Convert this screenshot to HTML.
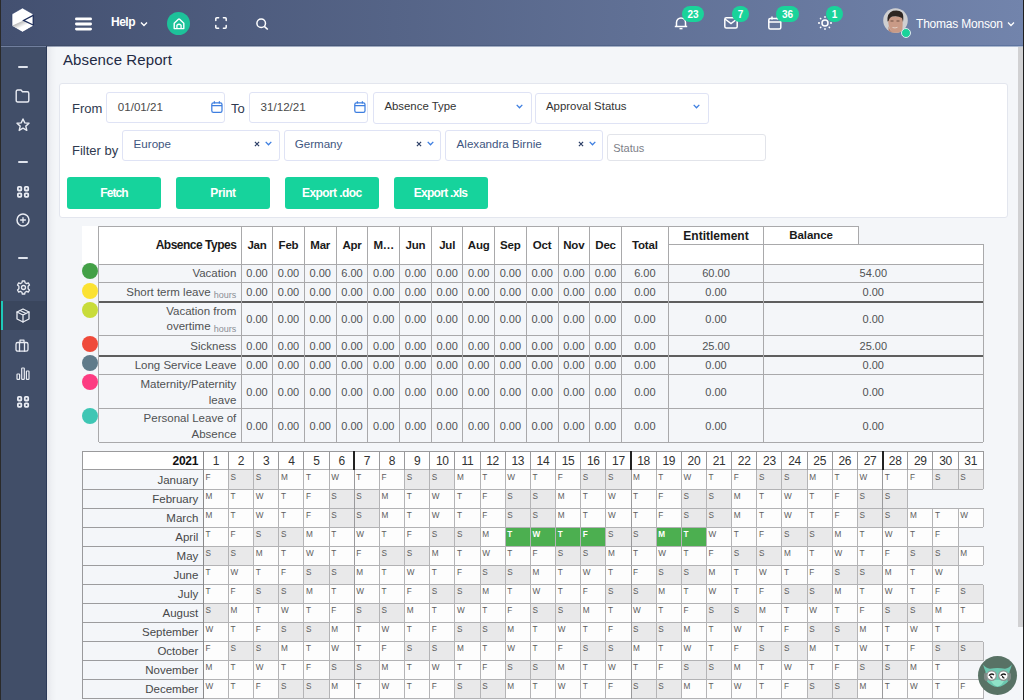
<!DOCTYPE html>
<html><head><meta charset="utf-8">
<style>
*{box-sizing:border-box;margin:0;padding:0}
html,body{width:1024px;height:700px;overflow:hidden}
body{position:relative;background:#f4f6f9;font-family:"Liberation Sans",sans-serif;color:#333}
.a{position:absolute}
#hdr{left:0;top:0;width:1024px;height:46px;background:linear-gradient(90deg,#435070 0%,#7284ac 100%)}
#hdrline{left:0;top:45px;width:1024px;height:1px;background:linear-gradient(90deg,#3d4a66,#5f75a0)}
#hdrtr{left:47px;top:46px;width:977px;height:1px;background:linear-gradient(90deg,#9aa3b8,#aab8d0)}
#side{left:0;top:46px;width:47px;height:654px;background:#414e68}
#shadowL{left:47px;top:46px;width:10px;height:654px;background:linear-gradient(90deg,rgba(0,0,30,0.06),rgba(0,0,30,0.02) 50%,rgba(0,0,30,0))}
#sideTop{left:0;top:46px;width:46px;height:1px;background:#717f9e}
#sideR{left:46px;top:46px;width:1px;height:654px;background:#2c3a58}
#edgeL{left:0;top:0;width:1px;height:700px;background:#2a2a2a}
#edgeR{left:1023px;top:0;width:1px;height:700px;background:#1e1e1e}
svg{position:absolute;overflow:visible}
.badge{position:absolute;height:16px;border-radius:8px;background:#1ad39a;color:#fff;font-size:10px;font-weight:bold;text-align:center;line-height:17px}
.w{color:#fff}
.inp{position:absolute;background:#fff;border:1px solid #dfe3f5;border-radius:3px}
.btn{position:absolute;top:177.2px;width:94px;height:31.6px;background:#16d39c;border-radius:3px;color:#fff;font-weight:bold;font-size:12px;text-align:center;line-height:32.5px;letter-spacing:-0.3px}
.txt{position:absolute;white-space:nowrap}
</style></head><body>
<div id="hdr" class="a"></div>
<div id="hdrline" class="a"></div>
<div id="hdrtr" class="a"></div>
<div id="side" class="a"></div>
<div id="sideTop" class="a"></div>
<div id="sideR" class="a"></div>
<div id="shadowL" class="a"></div>

<!-- logo -->
<svg style="left:12px;top:8px" width="21" height="24" viewBox="0 0 21 24">
  <defs><linearGradient id="lg" gradientUnits="userSpaceOnUse" x1="6" y1="15" x2="8.3" y2="19.8"><stop offset="0" stop-color="#b9b9b9"/><stop offset="1" stop-color="#fff"/></linearGradient></defs>
  <path d="M10.5 0 L21 6 L21 18 L10.5 24 L0 18 L0 6 Z" fill="#fff" stroke="#2a3a66" stroke-width="0.6"/>
  <path d="M0.6 17.6 L11.5 12.4 L20.5 16.8 L20.5 17.7 L10.5 23.5 L0.6 17.8 Z" fill="url(#lg)"/>
  <path d="M21.2 7.4 L11.5 12.4 L21.2 17" fill="none" stroke="#1d2d5a" stroke-width="1.2"/>
  <path d="M21.3 7.5 V17" stroke="#1d2d5a" stroke-width="0.8"/>
</svg>
<!-- hamburger -->
<svg style="left:75px;top:17px" width="17" height="14" viewBox="0 0 17 14">
  <rect x="0" y="0.5" width="17" height="2.8" rx="1.4" fill="#fff"/>
  <rect x="0" y="5.6" width="17" height="2.8" rx="1.4" fill="#fff"/>
  <rect x="0" y="10.7" width="17" height="2.8" rx="1.4" fill="#fff"/>
</svg>
<div class="txt w" style="left:111px;top:15.6px;font-size:12px;line-height:1;font-weight:bold;letter-spacing:-0.5px">Help</div>
<svg style="left:140px;top:21px" width="8" height="6" viewBox="0 0 8 6"><path d="M1 1.5 L4 4.5 L7 1.5" fill="none" stroke="#fff" stroke-width="1.4"/></svg>
<!-- home -->
<div class="a" style="left:167px;top:11.5px;width:23px;height:23px;border-radius:50%;background:#1dc29a"></div>
<svg style="left:172.5px;top:17.5px" width="12" height="12" viewBox="0 0 12 12"><path d="M1.2 5.2 L5.4 1.2 Q6 0.7 6.6 1.2 L10.8 5.2 V10.6 H1.2 Z" fill="none" stroke="#fff" stroke-width="1.4" stroke-linejoin="round"/><path d="M3.9 10.6 V7.3 Q6 5.3 8.1 7.3 V10.6" fill="none" stroke="#fff" stroke-width="1.3"/></svg>
<!-- fullscreen -->
<svg style="left:215px;top:17px" width="12" height="12" viewBox="0 0 12 12"><path d="M0.8 3.6 V1.8 Q0.8 0.8 1.8 0.8 H3.6 M8.4 0.8 H10.2 Q11.2 0.8 11.2 1.8 V3.6 M11.2 8.4 V10.2 Q11.2 11.2 10.2 11.2 H8.4 M3.6 11.2 H1.8 Q0.8 11.2 0.8 10.2 V8.4" fill="none" stroke="#fff" stroke-width="1.5" stroke-linecap="round"/></svg>
<!-- search -->
<svg style="left:256px;top:18px" width="13" height="12" viewBox="0 0 13 12"><circle cx="5.2" cy="5.2" r="4.3" fill="none" stroke="#fff" stroke-width="1.5"/><path d="M8.3 8.3 L11.8 11.5" stroke="#fff" stroke-width="1.6"/></svg>

<!-- bell -->
<svg style="left:674px;top:16px" width="14" height="14" viewBox="0 0 14 14"><path d="M2.5 10.5 V6.5 A4.5 4.5 0 0 1 11.5 6.5 V10.5" fill="none" stroke="#fff" stroke-width="1.5"/><path d="M0.8 10.5 H13.2" stroke="#fff" stroke-width="1.5"/><path d="M5.5 12.6 H8.5" stroke="#fff" stroke-width="1.5"/></svg>
<div class="badge" style="left:682px;top:6px;width:22px">23</div>
<!-- mail -->
<svg style="left:724px;top:17px" width="14" height="12" viewBox="0 0 14 12"><rect x="0.8" y="0.8" width="12.4" height="10.2" rx="1.5" fill="none" stroke="#fff" stroke-width="1.5"/><path d="M1 2 L7 6.5 L13 2" fill="none" stroke="#fff" stroke-width="1.5"/></svg>
<div class="badge" style="left:732px;top:6px;width:17px">7</div>
<!-- calendar -->
<svg style="left:768px;top:16px" width="14" height="14" viewBox="0 0 14 14"><rect x="0.8" y="2.5" width="12" height="10.5" rx="1.5" fill="none" stroke="#fff" stroke-width="1.5"/><path d="M1 6 H12.6 M4 0.5 V3.5 M9.5 0.5 V3.5" stroke="#fff" stroke-width="1.5"/></svg>
<div class="badge" style="left:776px;top:6px;width:23px">36</div>
<!-- sun -->
<svg style="left:818px;top:16px" width="14" height="14" viewBox="0 0 14 14"><circle cx="7" cy="7" r="3" fill="none" stroke="#fff" stroke-width="1.5"/><path d="M7 0 V2 M7 12 V14 M0 7 H2 M12 7 H14 M2 2 L3.3 3.3 M10.7 10.7 L12 12 M2 12 L3.3 10.7 M10.7 3.3 L12 2" stroke="#fff" stroke-width="1.3"/></svg>
<div class="badge" style="left:826px;top:6px;width:17px">1</div>
<!-- avatar -->
<svg style="left:883px;top:8px" width="25" height="25" viewBox="0 0 25 25">
<defs><clipPath id="ac"><circle cx="12.5" cy="12.5" r="12.3"/></clipPath></defs>
<circle cx="12.5" cy="12.5" r="12.3" fill="#cfcfd1"/>
<g clip-path="url(#ac)">
<path d="M5 9 Q5 24 12 25 L19 25 Q20 18 19.5 8 Z" fill="#c99a86"/>
<path d="M5.5 26 L5.5 18 Q7 24 12 25 Z" fill="#b8806b"/>
<path d="M4.5 13.5 Q3.8 5 10 2.8 Q16 1.5 19 4.5 Q21 7 20 14 L19 10 Q15 7.5 9.5 8.5 Q6.5 9 5.5 13 Z" fill="#2e2622"/>
<path d="M7.5 13 H10.5 M13.5 13 H16.5" stroke="#6f4f42" stroke-width="1.2"/>
<path d="M9.5 19.5 Q12 20.5 14.5 19.3" stroke="#e3cfc6" stroke-width="1" fill="none"/>
</g>
</svg>
<div class="a" style="left:901px;top:27.8px;width:10px;height:10px;border-radius:50%;background:#1ad39a;border:1.2px solid #dfe9ee"></div>
<div class="txt w" style="left:916px;top:17.5px;font-size:12px;line-height:1;letter-spacing:-0.2px">Thomas Monson</div>
<svg style="left:1007px;top:21px" width="8" height="6" viewBox="0 0 8 6"><path d="M1 1.5 L4 4.5 L7 1.5" fill="none" stroke="#fff" stroke-width="1.3"/></svg>

<div class="a" style="left:1px;top:301px;width:45px;height:29px;background:#3a465d"></div>
<div class="a" style="left:1px;top:301px;width:2px;height:29px;background:#1ec8b9"></div>
<div class="a" style="left:18px;top:65.5px;width:10px;height:2px;border-radius:1px;background:#dfe3ec"></div>
<div class="a" style="left:18px;top:161px;width:10px;height:2px;border-radius:1px;background:#dfe3ec"></div>
<div class="a" style="left:18px;top:256.6px;width:10px;height:2px;border-radius:1px;background:#dfe3ec"></div>
<svg style="left:15px;top:89px" width="15" height="14" viewBox="0 0 15 14" fill="none" stroke="#e9ecf3" stroke-width="1.4" stroke-linejoin="round" stroke-linecap="round"><path d="M1.2 2.5 Q1.2 1 2.7 1 H6 L7.5 2.8 H12.3 Q13.8 2.8 13.8 4.3 V11.5 Q13.8 13 12.3 13 H2.7 Q1.2 13 1.2 11.5 Z"/></svg>
<svg style="left:16px;top:117.5px" width="14" height="14" viewBox="0 0 14 14" fill="none" stroke="#e9ecf3" stroke-width="1.4" stroke-linejoin="round" stroke-linecap="round"><path d="M7 1 L8.8 4.9 L13 5.3 L9.8 8.1 L10.8 12.4 L7 10.2 L3.2 12.4 L4.2 8.1 L1 5.3 L5.2 4.9 Z"/></svg>
<svg style="left:16.7px;top:185.6px" width="13" height="13" viewBox="0 0 13 13" fill="none" stroke="#e9ecf3" stroke-width="1.8" stroke-linejoin="round" stroke-linecap="round"><rect x="0.9" y="0.9" width="3.4" height="3.6" rx="0.8"/><rect x="7.8" y="0.9" width="3.4" height="3.6" rx="0.8"/><rect x="0.9" y="7.3" width="3.4" height="3.6" rx="0.8"/><rect x="7.8" y="7.3" width="3.4" height="3.6" rx="0.8"/></svg>
<svg style="left:16px;top:213px" width="14" height="14" viewBox="0 0 14 14" fill="none" stroke="#e9ecf3" stroke-width="1.5" stroke-linejoin="round" stroke-linecap="round"><circle cx="7" cy="7" r="6"/><path d="M7 4.6 V9.4 M4.6 7 H9.4" stroke-width="1.3"/></svg>
<svg style="left:15.5px;top:280.3px" width="15" height="15" viewBox="0 0 15 15" fill="none" stroke="#e9ecf3" stroke-width="1.3" stroke-linejoin="round" stroke-linecap="round"><circle cx="7.5" cy="7.5" r="2"/><path d="M6.3 1 H8.7 L9.1 2.8 L10.6 3.6 L12.3 2.9 L13.5 5 L12.1 6.2 V8.8 L13.5 10 L12.3 12.1 L10.6 11.4 L9.1 12.2 L8.7 14 H6.3 L5.9 12.2 L4.4 11.4 L2.7 12.1 L1.5 10 L2.9 8.8 V6.2 L1.5 5 L2.7 2.9 L4.4 3.6 L5.9 2.8 Z"/></svg>
<svg style="left:15.5px;top:308.3px" width="14" height="15" viewBox="0 0 14 15" fill="none" stroke="#e9ecf3" stroke-width="1.3" stroke-linejoin="round" stroke-linecap="round"><path d="M7 1 L13 4 V11 L7 14 L1 11 V4 Z"/><path d="M1 4 L7 7 L13 4 M7 7 V14 M4 2.5 L10 5.5"/></svg>
<svg style="left:15.2px;top:338.5px" width="14" height="13" viewBox="0 0 14 13" fill="none" stroke="#e9ecf3" stroke-width="1.3" stroke-linejoin="round" stroke-linecap="round"><rect x="1" y="3.5" width="12" height="8.7" rx="1.8"/><path d="M5 3.5 V1.2 H9 V3.5 M4.5 3.5 V12.2 M9.5 3.5 V12.2"/></svg>
<svg style="left:16px;top:367px" width="14" height="13" viewBox="0 0 14 13" fill="none" stroke="#e9ecf3" stroke-width="1.2" stroke-linejoin="round" stroke-linecap="round"><rect x="1" y="7" width="2.6" height="5.3" rx="0.6"/><rect x="5.7" y="1" width="2.6" height="11.3" rx="0.6"/><rect x="10.4" y="4" width="2.6" height="8.3" rx="0.6"/></svg>
<svg style="left:16.7px;top:396.4px" width="13" height="13" viewBox="0 0 13 13" fill="none" stroke="#e9ecf3" stroke-width="1.8" stroke-linejoin="round" stroke-linecap="round"><rect x="0.9" y="0.9" width="3.4" height="3.6" rx="0.8"/><rect x="7.8" y="0.9" width="3.4" height="3.6" rx="0.8"/><rect x="0.9" y="7.3" width="3.4" height="3.6" rx="0.8"/><rect x="7.8" y="7.3" width="3.4" height="3.6" rx="0.8"/></svg>
<div class="txt" style="left:63px;top:51px;font-size:15px;color:#1f2a44;letter-spacing:0.1px">Absence Report</div>
<div class="a" style="left:58.5px;top:83px;width:949px;height:135px;background:#fff;border:1px solid #e3e6ee;border-radius:3px"></div>
<div class="txt" style="left:72px;top:101.72px;font-size:13px;line-height:1;color:#2f3a4f;">From</div>
<div class="txt" style="left:231px;top:101.72px;font-size:13px;line-height:1;color:#2f3a4f;">To</div>
<div class="txt" style="left:72px;top:144.22px;font-size:13px;line-height:1;color:#2f3a4f;">Filter by</div>
<div class="inp" style="left:106px;top:92px;width:119px;height:30.5px;"></div>
<div class="txt" style="left:117.8px;top:100.74px;font-size:11.6px;line-height:1;color:#4a4a4a;">01/01/21</div>
<svg style="left:211px;top:100.5px" width="12" height="12" viewBox="0 0 12 12" fill="none" stroke="#3d7ee0" stroke-width="1.25"><rect x="0.8" y="1.9" width="10.2" height="9.4" rx="1.6"/><path d="M0.8 4.6 H11 M3.4 0.3 V2.6 M8.4 0.3 V2.6"/></svg>
<div class="inp" style="left:249px;top:92px;width:118.5px;height:30.5px;"></div>
<div class="txt" style="left:260.6px;top:100.74px;font-size:11.6px;line-height:1;color:#4a4a4a;">31/12/21</div>
<svg style="left:354.2px;top:100.5px" width="12" height="12" viewBox="0 0 12 12" fill="none" stroke="#3d7ee0" stroke-width="1.25"><rect x="0.8" y="1.9" width="10.2" height="9.4" rx="1.6"/><path d="M0.8 4.6 H11 M3.4 0.3 V2.6 M8.4 0.3 V2.6"/></svg>
<div class="inp" style="left:373px;top:92px;width:158.5px;height:31.5px;"></div>
<div class="txt" style="left:384.4px;top:100.78px;font-size:11.4px;line-height:1;color:#333;">Absence Type</div>
<svg style="left:516px;top:104px" width="7" height="5" viewBox="0 0 7 5" fill="none" stroke="#3d7ee0" stroke-width="1.3"><path d="M0.7 0.9 L3.5 3.8 L6.3 0.9"/></svg>
<div class="inp" style="left:534.5px;top:92.5px;width:174.20000000000005px;height:31.299999999999997px;"></div>
<div class="txt" style="left:546px;top:100.78px;font-size:11.4px;line-height:1;color:#333;">Approval Status</div>
<svg style="left:693px;top:104px" width="7" height="5" viewBox="0 0 7 5" fill="none" stroke="#3d7ee0" stroke-width="1.3"><path d="M0.7 0.9 L3.5 3.8 L6.3 0.9"/></svg>
<div class="inp" style="left:122.4px;top:129.6px;width:157.20000000000002px;height:31.400000000000006px;"></div>
<div class="txt" style="left:133.6px;top:137.94px;font-size:11.6px;line-height:1;color:#3e5680;">Europe</div>
<svg style="left:254.3px;top:140.8px" width="6" height="6" viewBox="0 0 6 6" fill="none" stroke="#2c3e66" stroke-width="1.2"><path d="M0.9 0.9 L5.1 5.1 M5.1 0.9 L0.9 5.1"/></svg>
<svg style="left:265.3px;top:141.2px" width="7" height="5" viewBox="0 0 7 5" fill="none" stroke="#3d7ee0" stroke-width="1.3"><path d="M0.7 0.9 L3.5 3.8 L6.3 0.9"/></svg>
<div class="inp" style="left:283.5px;top:129.6px;width:157.5px;height:31.400000000000006px;"></div>
<div class="txt" style="left:294.7px;top:137.94px;font-size:11.6px;line-height:1;color:#3e5680;">Germany</div>
<svg style="left:415.7px;top:140.8px" width="6" height="6" viewBox="0 0 6 6" fill="none" stroke="#2c3e66" stroke-width="1.2"><path d="M0.9 0.9 L5.1 5.1 M5.1 0.9 L0.9 5.1"/></svg>
<svg style="left:426.7px;top:141.2px" width="7" height="5" viewBox="0 0 7 5" fill="none" stroke="#3d7ee0" stroke-width="1.3"><path d="M0.7 0.9 L3.5 3.8 L6.3 0.9"/></svg>
<div class="inp" style="left:445.4px;top:129.6px;width:157.80000000000007px;height:31.400000000000006px;"></div>
<div class="txt" style="left:456.59999999999997px;top:137.94px;font-size:11.6px;line-height:1;color:#3e5680;">Alexandra Birnie</div>
<svg style="left:577.9000000000001px;top:140.8px" width="6" height="6" viewBox="0 0 6 6" fill="none" stroke="#2c3e66" stroke-width="1.2"><path d="M0.9 0.9 L5.1 5.1 M5.1 0.9 L0.9 5.1"/></svg>
<svg style="left:588.9000000000001px;top:141.2px" width="7" height="5" viewBox="0 0 7 5" fill="none" stroke="#3d7ee0" stroke-width="1.3"><path d="M0.7 0.9 L3.5 3.8 L6.3 0.9"/></svg>
<div class="inp" style="left:607.4px;top:133.6px;width:158.20000000000005px;height:27.599999999999994px;border-color:#e2e4ea"></div>
<div class="txt" style="left:613.2px;top:143.24px;font-size:11px;line-height:1;color:#7d8088;">Status</div>
<div class="btn" style="left:67px;letter-spacing:-0.9px">Fetch</div>
<div class="btn" style="left:176px;letter-spacing:-0.4px">Print</div>
<div class="btn" style="left:284.8px;letter-spacing:-0.6px">Export .doc</div>
<div class="btn" style="left:393.5px;letter-spacing:-0.7px">Export .xls</div>
<div class="a" style="left:82px;top:225.5px;width:16.5px;height:38.5px;background:#ffffff"></div>
<div class="a" style="left:98.5px;top:225.5px;width:569.9px;height:38.5px;background:#ffffff"></div>
<div class="a" style="left:668.4px;top:225.5px;width:190.10000000000002px;height:19.5px;background:#ffffff"></div>
<div class="a" style="left:668.4px;top:244.2px;width:314.6px;height:19.80000000000001px;background:#ffffff"></div>
<div class="a" style="left:98.5px;top:225.5px;width:760.0px;height:1px;background:#a9a9ab"></div>
<div class="a" style="left:858.5px;top:244.2px;width:124.5px;height:1px;background:#a9a9ab"></div>
<div class="a" style="left:668.4px;top:244.2px;width:314.6px;height:1px;background:#a9a9ab"></div>
<div class="a" style="left:98.5px;top:263.5px;width:884.5px;height:1px;background:#a9a9ab"></div>
<div class="a" style="left:98.5px;top:281.8px;width:884.5px;height:1px;background:#a9a9ab"></div>
<div class="a" style="left:98.5px;top:300.7px;width:884.5px;height:2px;background:#5e5e5e"></div>
<div class="a" style="left:98.5px;top:335.1px;width:884.5px;height:1px;background:#a9a9ab"></div>
<div class="a" style="left:98.5px;top:354.7px;width:884.5px;height:2px;background:#5e5e5e"></div>
<div class="a" style="left:98.5px;top:374.4px;width:884.5px;height:1px;background:#a9a9ab"></div>
<div class="a" style="left:98.5px;top:408.3px;width:884.5px;height:1px;background:#a9a9ab"></div>
<div class="a" style="left:98.5px;top:441.8px;width:884.5px;height:1px;background:#a9a9ab"></div>
<div class="a" style="left:98.0px;top:225.5px;width:1px;height:216.8px;background:#a9a9ab"></div>
<div class="a" style="left:240.9px;top:225.5px;width:1px;height:216.8px;background:#a9a9ab"></div>
<div class="a" style="left:272.2px;top:225.5px;width:1px;height:216.8px;background:#a9a9ab"></div>
<div class="a" style="left:303.9px;top:225.5px;width:1px;height:216.8px;background:#a9a9ab"></div>
<div class="a" style="left:335.6px;top:225.5px;width:1px;height:216.8px;background:#a9a9ab"></div>
<div class="a" style="left:367.4px;top:225.5px;width:1px;height:216.8px;background:#a9a9ab"></div>
<div class="a" style="left:399.1px;top:225.5px;width:1px;height:216.8px;background:#a9a9ab"></div>
<div class="a" style="left:430.9px;top:225.5px;width:1px;height:216.8px;background:#a9a9ab"></div>
<div class="a" style="left:462.4px;top:225.5px;width:1px;height:216.8px;background:#a9a9ab"></div>
<div class="a" style="left:494.0px;top:225.5px;width:1px;height:216.8px;background:#a9a9ab"></div>
<div class="a" style="left:525.7px;top:225.5px;width:1px;height:216.8px;background:#a9a9ab"></div>
<div class="a" style="left:557.5px;top:225.5px;width:1px;height:216.8px;background:#a9a9ab"></div>
<div class="a" style="left:589.2px;top:225.5px;width:1px;height:216.8px;background:#a9a9ab"></div>
<div class="a" style="left:620.9px;top:225.5px;width:1px;height:216.8px;background:#a9a9ab"></div>
<div class="a" style="left:667.9px;top:225.5px;width:1px;height:216.8px;background:#a9a9ab"></div>
<div class="a" style="left:763.1px;top:225.5px;width:1px;height:216.8px;background:#a9a9ab"></div>
<div class="a" style="left:982.5px;top:244.2px;width:1px;height:198.10000000000002px;background:#a9a9ab"></div>
<div class="a" style="left:858.0px;top:225.5px;width:1px;height:18.69999999999999px;background:#a9a9ab"></div>
<div class="txt" style="left:-63.69999999999999px;top:239.28px;width:300px;text-align:right;font-size:12px;line-height:1;color:#1a1a1a;font-weight:bold;letter-spacing:-0.5px;">Absence Types</div>
<div class="txt" style="left:241.4px;top:239.56px;width:31.299999999999983px;text-align:center;font-size:11.5px;line-height:1;color:#1a1a1a;font-weight:bold;letter-spacing:-0.2px">Jan</div>
<div class="txt" style="left:272.7px;top:239.56px;width:31.69999999999999px;text-align:center;font-size:11.5px;line-height:1;color:#1a1a1a;font-weight:bold;letter-spacing:-0.2px">Feb</div>
<div class="txt" style="left:304.4px;top:239.56px;width:31.700000000000045px;text-align:center;font-size:11.5px;line-height:1;color:#1a1a1a;font-weight:bold;letter-spacing:-0.2px">Mar</div>
<div class="txt" style="left:336.1px;top:239.56px;width:31.799999999999955px;text-align:center;font-size:11.5px;line-height:1;color:#1a1a1a;font-weight:bold;letter-spacing:-0.2px">Apr</div>
<div class="txt" style="left:367.9px;top:239.56px;width:31.700000000000045px;text-align:center;font-size:11.5px;line-height:1;color:#1a1a1a;font-weight:bold;letter-spacing:-0.2px">M…</div>
<div class="txt" style="left:399.6px;top:239.56px;width:31.799999999999955px;text-align:center;font-size:11.5px;line-height:1;color:#1a1a1a;font-weight:bold;letter-spacing:-0.2px">Jun</div>
<div class="txt" style="left:431.4px;top:239.56px;width:31.5px;text-align:center;font-size:11.5px;line-height:1;color:#1a1a1a;font-weight:bold;letter-spacing:-0.2px">Jul</div>
<div class="txt" style="left:462.9px;top:239.56px;width:31.600000000000023px;text-align:center;font-size:11.5px;line-height:1;color:#1a1a1a;font-weight:bold;letter-spacing:-0.2px">Aug</div>
<div class="txt" style="left:494.5px;top:239.56px;width:31.700000000000045px;text-align:center;font-size:11.5px;line-height:1;color:#1a1a1a;font-weight:bold;letter-spacing:-0.2px">Sep</div>
<div class="txt" style="left:526.2px;top:239.56px;width:31.799999999999955px;text-align:center;font-size:11.5px;line-height:1;color:#1a1a1a;font-weight:bold;letter-spacing:-0.2px">Oct</div>
<div class="txt" style="left:558px;top:239.56px;width:31.700000000000045px;text-align:center;font-size:11.5px;line-height:1;color:#1a1a1a;font-weight:bold;letter-spacing:-0.2px">Nov</div>
<div class="txt" style="left:589.7px;top:239.56px;width:31.699999999999932px;text-align:center;font-size:11.5px;line-height:1;color:#1a1a1a;font-weight:bold;letter-spacing:-0.2px">Dec</div>
<div class="txt" style="left:621.4px;top:239.56px;width:47.0px;text-align:center;font-size:11.5px;line-height:1;color:#1a1a1a;font-weight:bold;letter-spacing:-0.2px">Total</div>
<div class="txt" style="left:668.4px;top:229.88px;width:95.20000000000005px;text-align:center;font-size:12px;line-height:1;color:#1a1a1a;font-weight:bold;letter-spacing:0px">Entitlement</div>
<div class="txt" style="left:763.6px;top:229.96px;width:94.89999999999998px;text-align:center;font-size:11.5px;line-height:1;color:#1a1a1a;font-weight:bold;letter-spacing:-0.1px">Balance</div>
<div class="a" style="left:82.3px;top:263.4px;width:16px;height:16px;border-radius:50%;background:#43a047"></div>
<div class="txt" style="left:-63.69999999999999px;top:268.21px;width:300px;text-align:right;font-size:11.5px;line-height:1;color:#505254;letter-spacing:0px;">Vacation</div>
<div class="txt" style="left:241.4px;top:268.29px;width:31.299999999999983px;text-align:center;font-size:11px;line-height:1;color:#505254;letter-spacing:0px">0.00</div>
<div class="txt" style="left:272.7px;top:268.29px;width:31.69999999999999px;text-align:center;font-size:11px;line-height:1;color:#505254;letter-spacing:0px">0.00</div>
<div class="txt" style="left:304.4px;top:268.29px;width:31.700000000000045px;text-align:center;font-size:11px;line-height:1;color:#505254;letter-spacing:0px">0.00</div>
<div class="txt" style="left:336.1px;top:268.29px;width:31.799999999999955px;text-align:center;font-size:11px;line-height:1;color:#505254;letter-spacing:0px">6.00</div>
<div class="txt" style="left:367.9px;top:268.29px;width:31.700000000000045px;text-align:center;font-size:11px;line-height:1;color:#505254;letter-spacing:0px">0.00</div>
<div class="txt" style="left:399.6px;top:268.29px;width:31.799999999999955px;text-align:center;font-size:11px;line-height:1;color:#505254;letter-spacing:0px">0.00</div>
<div class="txt" style="left:431.4px;top:268.29px;width:31.5px;text-align:center;font-size:11px;line-height:1;color:#505254;letter-spacing:0px">0.00</div>
<div class="txt" style="left:462.9px;top:268.29px;width:31.600000000000023px;text-align:center;font-size:11px;line-height:1;color:#505254;letter-spacing:0px">0.00</div>
<div class="txt" style="left:494.5px;top:268.29px;width:31.700000000000045px;text-align:center;font-size:11px;line-height:1;color:#505254;letter-spacing:0px">0.00</div>
<div class="txt" style="left:526.2px;top:268.29px;width:31.799999999999955px;text-align:center;font-size:11px;line-height:1;color:#505254;letter-spacing:0px">0.00</div>
<div class="txt" style="left:558px;top:268.29px;width:31.700000000000045px;text-align:center;font-size:11px;line-height:1;color:#505254;letter-spacing:0px">0.00</div>
<div class="txt" style="left:589.7px;top:268.29px;width:31.699999999999932px;text-align:center;font-size:11px;line-height:1;color:#505254;letter-spacing:0px">0.00</div>
<div class="txt" style="left:621.4px;top:268.29px;width:47.0px;text-align:center;font-size:11px;line-height:1;color:#505254;letter-spacing:0px">6.00</div>
<div class="txt" style="left:668.4px;top:268.29px;width:95.20000000000005px;text-align:center;font-size:11px;line-height:1;color:#505254;letter-spacing:0px">60.00</div>
<div class="txt" style="left:763.6px;top:268.29px;width:219.39999999999998px;text-align:center;font-size:11px;line-height:1;color:#505254;letter-spacing:0px">54.00</div>
<div class="a" style="left:82.3px;top:282.7px;width:16px;height:16px;border-radius:50%;background:#fbe232"></div>
<div class="txt" style="left:-63.69999999999999px;top:286.86px;width:300px;text-align:right;font-size:11.5px;line-height:1;color:#505254;letter-spacing:0px;">Short term leave <span style="font-size:9px;color:#8a8f96;vertical-align:-2px">hours</span></div>
<div class="txt" style="left:241.4px;top:286.94px;width:31.299999999999983px;text-align:center;font-size:11px;line-height:1;color:#505254;letter-spacing:0px">0.00</div>
<div class="txt" style="left:272.7px;top:286.94px;width:31.69999999999999px;text-align:center;font-size:11px;line-height:1;color:#505254;letter-spacing:0px">0.00</div>
<div class="txt" style="left:304.4px;top:286.94px;width:31.700000000000045px;text-align:center;font-size:11px;line-height:1;color:#505254;letter-spacing:0px">0.00</div>
<div class="txt" style="left:336.1px;top:286.94px;width:31.799999999999955px;text-align:center;font-size:11px;line-height:1;color:#505254;letter-spacing:0px">0.00</div>
<div class="txt" style="left:367.9px;top:286.94px;width:31.700000000000045px;text-align:center;font-size:11px;line-height:1;color:#505254;letter-spacing:0px">0.00</div>
<div class="txt" style="left:399.6px;top:286.94px;width:31.799999999999955px;text-align:center;font-size:11px;line-height:1;color:#505254;letter-spacing:0px">0.00</div>
<div class="txt" style="left:431.4px;top:286.94px;width:31.5px;text-align:center;font-size:11px;line-height:1;color:#505254;letter-spacing:0px">0.00</div>
<div class="txt" style="left:462.9px;top:286.94px;width:31.600000000000023px;text-align:center;font-size:11px;line-height:1;color:#505254;letter-spacing:0px">0.00</div>
<div class="txt" style="left:494.5px;top:286.94px;width:31.700000000000045px;text-align:center;font-size:11px;line-height:1;color:#505254;letter-spacing:0px">0.00</div>
<div class="txt" style="left:526.2px;top:286.94px;width:31.799999999999955px;text-align:center;font-size:11px;line-height:1;color:#505254;letter-spacing:0px">0.00</div>
<div class="txt" style="left:558px;top:286.94px;width:31.700000000000045px;text-align:center;font-size:11px;line-height:1;color:#505254;letter-spacing:0px">0.00</div>
<div class="txt" style="left:589.7px;top:286.94px;width:31.699999999999932px;text-align:center;font-size:11px;line-height:1;color:#505254;letter-spacing:0px">0.00</div>
<div class="txt" style="left:621.4px;top:286.94px;width:47.0px;text-align:center;font-size:11px;line-height:1;color:#505254;letter-spacing:0px">0.00</div>
<div class="txt" style="left:668.4px;top:286.94px;width:95.20000000000005px;text-align:center;font-size:11px;line-height:1;color:#505254;letter-spacing:0px">0.00</div>
<div class="txt" style="left:763.6px;top:286.94px;width:219.39999999999998px;text-align:center;font-size:11px;line-height:1;color:#505254;letter-spacing:0px">0.00</div>
<div class="a" style="left:82.3px;top:301.5px;width:16px;height:16px;border-radius:50%;background:#c8dc3a"></div>
<div class="txt" style="left:-63.69999999999999px;top:305.91px;width:300px;text-align:right;font-size:11.5px;line-height:1;color:#505254;letter-spacing:0px;">Vacation from</div>
<div class="txt" style="left:-63.69999999999999px;top:321.41px;width:300px;text-align:right;font-size:11.5px;line-height:1;color:#505254;letter-spacing:0px;">overtime <span style="font-size:9px;color:#8a8f96;vertical-align:-2px">hours</span></div>
<div class="txt" style="left:241.4px;top:313.59px;width:31.299999999999983px;text-align:center;font-size:11px;line-height:1;color:#505254;letter-spacing:0px">0.00</div>
<div class="txt" style="left:272.7px;top:313.59px;width:31.69999999999999px;text-align:center;font-size:11px;line-height:1;color:#505254;letter-spacing:0px">0.00</div>
<div class="txt" style="left:304.4px;top:313.59px;width:31.700000000000045px;text-align:center;font-size:11px;line-height:1;color:#505254;letter-spacing:0px">0.00</div>
<div class="txt" style="left:336.1px;top:313.59px;width:31.799999999999955px;text-align:center;font-size:11px;line-height:1;color:#505254;letter-spacing:0px">0.00</div>
<div class="txt" style="left:367.9px;top:313.59px;width:31.700000000000045px;text-align:center;font-size:11px;line-height:1;color:#505254;letter-spacing:0px">0.00</div>
<div class="txt" style="left:399.6px;top:313.59px;width:31.799999999999955px;text-align:center;font-size:11px;line-height:1;color:#505254;letter-spacing:0px">0.00</div>
<div class="txt" style="left:431.4px;top:313.59px;width:31.5px;text-align:center;font-size:11px;line-height:1;color:#505254;letter-spacing:0px">0.00</div>
<div class="txt" style="left:462.9px;top:313.59px;width:31.600000000000023px;text-align:center;font-size:11px;line-height:1;color:#505254;letter-spacing:0px">0.00</div>
<div class="txt" style="left:494.5px;top:313.59px;width:31.700000000000045px;text-align:center;font-size:11px;line-height:1;color:#505254;letter-spacing:0px">0.00</div>
<div class="txt" style="left:526.2px;top:313.59px;width:31.799999999999955px;text-align:center;font-size:11px;line-height:1;color:#505254;letter-spacing:0px">0.00</div>
<div class="txt" style="left:558px;top:313.59px;width:31.700000000000045px;text-align:center;font-size:11px;line-height:1;color:#505254;letter-spacing:0px">0.00</div>
<div class="txt" style="left:589.7px;top:313.59px;width:31.699999999999932px;text-align:center;font-size:11px;line-height:1;color:#505254;letter-spacing:0px">0.00</div>
<div class="txt" style="left:621.4px;top:313.59px;width:47.0px;text-align:center;font-size:11px;line-height:1;color:#505254;letter-spacing:0px">0.00</div>
<div class="txt" style="left:668.4px;top:313.59px;width:95.20000000000005px;text-align:center;font-size:11px;line-height:1;color:#505254;letter-spacing:0px">0.00</div>
<div class="txt" style="left:763.6px;top:313.59px;width:219.39999999999998px;text-align:center;font-size:11px;line-height:1;color:#505254;letter-spacing:0px">0.00</div>
<div class="a" style="left:82.3px;top:335.5px;width:16px;height:16px;border-radius:50%;background:#ef4a3a"></div>
<div class="txt" style="left:-63.69999999999999px;top:340.51px;width:300px;text-align:right;font-size:11.5px;line-height:1;color:#505254;letter-spacing:0px;">Sickness</div>
<div class="txt" style="left:241.4px;top:340.59px;width:31.299999999999983px;text-align:center;font-size:11px;line-height:1;color:#505254;letter-spacing:0px">0.00</div>
<div class="txt" style="left:272.7px;top:340.59px;width:31.69999999999999px;text-align:center;font-size:11px;line-height:1;color:#505254;letter-spacing:0px">0.00</div>
<div class="txt" style="left:304.4px;top:340.59px;width:31.700000000000045px;text-align:center;font-size:11px;line-height:1;color:#505254;letter-spacing:0px">0.00</div>
<div class="txt" style="left:336.1px;top:340.59px;width:31.799999999999955px;text-align:center;font-size:11px;line-height:1;color:#505254;letter-spacing:0px">0.00</div>
<div class="txt" style="left:367.9px;top:340.59px;width:31.700000000000045px;text-align:center;font-size:11px;line-height:1;color:#505254;letter-spacing:0px">0.00</div>
<div class="txt" style="left:399.6px;top:340.59px;width:31.799999999999955px;text-align:center;font-size:11px;line-height:1;color:#505254;letter-spacing:0px">0.00</div>
<div class="txt" style="left:431.4px;top:340.59px;width:31.5px;text-align:center;font-size:11px;line-height:1;color:#505254;letter-spacing:0px">0.00</div>
<div class="txt" style="left:462.9px;top:340.59px;width:31.600000000000023px;text-align:center;font-size:11px;line-height:1;color:#505254;letter-spacing:0px">0.00</div>
<div class="txt" style="left:494.5px;top:340.59px;width:31.700000000000045px;text-align:center;font-size:11px;line-height:1;color:#505254;letter-spacing:0px">0.00</div>
<div class="txt" style="left:526.2px;top:340.59px;width:31.799999999999955px;text-align:center;font-size:11px;line-height:1;color:#505254;letter-spacing:0px">0.00</div>
<div class="txt" style="left:558px;top:340.59px;width:31.700000000000045px;text-align:center;font-size:11px;line-height:1;color:#505254;letter-spacing:0px">0.00</div>
<div class="txt" style="left:589.7px;top:340.59px;width:31.699999999999932px;text-align:center;font-size:11px;line-height:1;color:#505254;letter-spacing:0px">0.00</div>
<div class="txt" style="left:621.4px;top:340.59px;width:47.0px;text-align:center;font-size:11px;line-height:1;color:#505254;letter-spacing:0px">0.00</div>
<div class="txt" style="left:668.4px;top:340.59px;width:95.20000000000005px;text-align:center;font-size:11px;line-height:1;color:#505254;letter-spacing:0px">25.00</div>
<div class="txt" style="left:763.6px;top:340.59px;width:219.39999999999998px;text-align:center;font-size:11px;line-height:1;color:#505254;letter-spacing:0px">25.00</div>
<div class="a" style="left:82.3px;top:354.8px;width:16px;height:16px;border-radius:50%;background:#607b8a"></div>
<div class="txt" style="left:-63.69999999999999px;top:360.16px;width:300px;text-align:right;font-size:11.5px;line-height:1;color:#505254;letter-spacing:0px;">Long Service Leave</div>
<div class="txt" style="left:241.4px;top:360.24px;width:31.299999999999983px;text-align:center;font-size:11px;line-height:1;color:#505254;letter-spacing:0px">0.00</div>
<div class="txt" style="left:272.7px;top:360.24px;width:31.69999999999999px;text-align:center;font-size:11px;line-height:1;color:#505254;letter-spacing:0px">0.00</div>
<div class="txt" style="left:304.4px;top:360.24px;width:31.700000000000045px;text-align:center;font-size:11px;line-height:1;color:#505254;letter-spacing:0px">0.00</div>
<div class="txt" style="left:336.1px;top:360.24px;width:31.799999999999955px;text-align:center;font-size:11px;line-height:1;color:#505254;letter-spacing:0px">0.00</div>
<div class="txt" style="left:367.9px;top:360.24px;width:31.700000000000045px;text-align:center;font-size:11px;line-height:1;color:#505254;letter-spacing:0px">0.00</div>
<div class="txt" style="left:399.6px;top:360.24px;width:31.799999999999955px;text-align:center;font-size:11px;line-height:1;color:#505254;letter-spacing:0px">0.00</div>
<div class="txt" style="left:431.4px;top:360.24px;width:31.5px;text-align:center;font-size:11px;line-height:1;color:#505254;letter-spacing:0px">0.00</div>
<div class="txt" style="left:462.9px;top:360.24px;width:31.600000000000023px;text-align:center;font-size:11px;line-height:1;color:#505254;letter-spacing:0px">0.00</div>
<div class="txt" style="left:494.5px;top:360.24px;width:31.700000000000045px;text-align:center;font-size:11px;line-height:1;color:#505254;letter-spacing:0px">0.00</div>
<div class="txt" style="left:526.2px;top:360.24px;width:31.799999999999955px;text-align:center;font-size:11px;line-height:1;color:#505254;letter-spacing:0px">0.00</div>
<div class="txt" style="left:558px;top:360.24px;width:31.700000000000045px;text-align:center;font-size:11px;line-height:1;color:#505254;letter-spacing:0px">0.00</div>
<div class="txt" style="left:589.7px;top:360.24px;width:31.699999999999932px;text-align:center;font-size:11px;line-height:1;color:#505254;letter-spacing:0px">0.00</div>
<div class="txt" style="left:621.4px;top:360.24px;width:47.0px;text-align:center;font-size:11px;line-height:1;color:#505254;letter-spacing:0px">0.00</div>
<div class="txt" style="left:668.4px;top:360.24px;width:95.20000000000005px;text-align:center;font-size:11px;line-height:1;color:#505254;letter-spacing:0px">0.00</div>
<div class="txt" style="left:763.6px;top:360.24px;width:219.39999999999998px;text-align:center;font-size:11px;line-height:1;color:#505254;letter-spacing:0px">0.00</div>
<div class="a" style="left:82.3px;top:373.5px;width:16px;height:16px;border-radius:50%;background:#fd3c82"></div>
<div class="txt" style="left:-63.69999999999999px;top:379.31px;width:300px;text-align:right;font-size:11.5px;line-height:1;color:#505254;letter-spacing:0px;">Maternity/Paternity</div>
<div class="txt" style="left:-63.69999999999999px;top:394.81px;width:300px;text-align:right;font-size:11.5px;line-height:1;color:#505254;letter-spacing:0px;">leave</div>
<div class="txt" style="left:241.4px;top:386.99px;width:31.299999999999983px;text-align:center;font-size:11px;line-height:1;color:#505254;letter-spacing:0px">0.00</div>
<div class="txt" style="left:272.7px;top:386.99px;width:31.69999999999999px;text-align:center;font-size:11px;line-height:1;color:#505254;letter-spacing:0px">0.00</div>
<div class="txt" style="left:304.4px;top:386.99px;width:31.700000000000045px;text-align:center;font-size:11px;line-height:1;color:#505254;letter-spacing:0px">0.00</div>
<div class="txt" style="left:336.1px;top:386.99px;width:31.799999999999955px;text-align:center;font-size:11px;line-height:1;color:#505254;letter-spacing:0px">0.00</div>
<div class="txt" style="left:367.9px;top:386.99px;width:31.700000000000045px;text-align:center;font-size:11px;line-height:1;color:#505254;letter-spacing:0px">0.00</div>
<div class="txt" style="left:399.6px;top:386.99px;width:31.799999999999955px;text-align:center;font-size:11px;line-height:1;color:#505254;letter-spacing:0px">0.00</div>
<div class="txt" style="left:431.4px;top:386.99px;width:31.5px;text-align:center;font-size:11px;line-height:1;color:#505254;letter-spacing:0px">0.00</div>
<div class="txt" style="left:462.9px;top:386.99px;width:31.600000000000023px;text-align:center;font-size:11px;line-height:1;color:#505254;letter-spacing:0px">0.00</div>
<div class="txt" style="left:494.5px;top:386.99px;width:31.700000000000045px;text-align:center;font-size:11px;line-height:1;color:#505254;letter-spacing:0px">0.00</div>
<div class="txt" style="left:526.2px;top:386.99px;width:31.799999999999955px;text-align:center;font-size:11px;line-height:1;color:#505254;letter-spacing:0px">0.00</div>
<div class="txt" style="left:558px;top:386.99px;width:31.700000000000045px;text-align:center;font-size:11px;line-height:1;color:#505254;letter-spacing:0px">0.00</div>
<div class="txt" style="left:589.7px;top:386.99px;width:31.699999999999932px;text-align:center;font-size:11px;line-height:1;color:#505254;letter-spacing:0px">0.00</div>
<div class="txt" style="left:621.4px;top:386.99px;width:47.0px;text-align:center;font-size:11px;line-height:1;color:#505254;letter-spacing:0px">0.00</div>
<div class="txt" style="left:668.4px;top:386.99px;width:95.20000000000005px;text-align:center;font-size:11px;line-height:1;color:#505254;letter-spacing:0px">0.00</div>
<div class="txt" style="left:763.6px;top:386.99px;width:219.39999999999998px;text-align:center;font-size:11px;line-height:1;color:#505254;letter-spacing:0px">0.00</div>
<div class="a" style="left:82.3px;top:408.2px;width:16px;height:16px;border-radius:50%;background:#3ec6b4"></div>
<div class="txt" style="left:-63.69999999999999px;top:413.01px;width:300px;text-align:right;font-size:11.5px;line-height:1;color:#505254;letter-spacing:0px;">Personal Leave of</div>
<div class="txt" style="left:-63.69999999999999px;top:428.51px;width:300px;text-align:right;font-size:11.5px;line-height:1;color:#505254;letter-spacing:0px;">Absence</div>
<div class="txt" style="left:241.4px;top:420.69px;width:31.299999999999983px;text-align:center;font-size:11px;line-height:1;color:#505254;letter-spacing:0px">0.00</div>
<div class="txt" style="left:272.7px;top:420.69px;width:31.69999999999999px;text-align:center;font-size:11px;line-height:1;color:#505254;letter-spacing:0px">0.00</div>
<div class="txt" style="left:304.4px;top:420.69px;width:31.700000000000045px;text-align:center;font-size:11px;line-height:1;color:#505254;letter-spacing:0px">0.00</div>
<div class="txt" style="left:336.1px;top:420.69px;width:31.799999999999955px;text-align:center;font-size:11px;line-height:1;color:#505254;letter-spacing:0px">0.00</div>
<div class="txt" style="left:367.9px;top:420.69px;width:31.700000000000045px;text-align:center;font-size:11px;line-height:1;color:#505254;letter-spacing:0px">0.00</div>
<div class="txt" style="left:399.6px;top:420.69px;width:31.799999999999955px;text-align:center;font-size:11px;line-height:1;color:#505254;letter-spacing:0px">0.00</div>
<div class="txt" style="left:431.4px;top:420.69px;width:31.5px;text-align:center;font-size:11px;line-height:1;color:#505254;letter-spacing:0px">0.00</div>
<div class="txt" style="left:462.9px;top:420.69px;width:31.600000000000023px;text-align:center;font-size:11px;line-height:1;color:#505254;letter-spacing:0px">0.00</div>
<div class="txt" style="left:494.5px;top:420.69px;width:31.700000000000045px;text-align:center;font-size:11px;line-height:1;color:#505254;letter-spacing:0px">0.00</div>
<div class="txt" style="left:526.2px;top:420.69px;width:31.799999999999955px;text-align:center;font-size:11px;line-height:1;color:#505254;letter-spacing:0px">0.00</div>
<div class="txt" style="left:558px;top:420.69px;width:31.700000000000045px;text-align:center;font-size:11px;line-height:1;color:#505254;letter-spacing:0px">0.00</div>
<div class="txt" style="left:589.7px;top:420.69px;width:31.699999999999932px;text-align:center;font-size:11px;line-height:1;color:#505254;letter-spacing:0px">0.00</div>
<div class="txt" style="left:621.4px;top:420.69px;width:47.0px;text-align:center;font-size:11px;line-height:1;color:#505254;letter-spacing:0px">0.00</div>
<div class="txt" style="left:668.4px;top:420.69px;width:95.20000000000005px;text-align:center;font-size:11px;line-height:1;color:#505254;letter-spacing:0px">0.00</div>
<div class="txt" style="left:763.6px;top:420.69px;width:219.39999999999998px;text-align:center;font-size:11px;line-height:1;color:#505254;letter-spacing:0px">0.00</div>
<div class="a" style="left:82.4px;top:451.2px;width:900.86px;height:19.19999999999999px;background:#ffffff"></div>
<div class="a" style="left:82.4px;top:450.7px;width:900.86px;height:1px;background:#9a9a9c"></div>
<div class="txt" style="left:-101.69999999999999px;top:454.88px;width:300px;text-align:right;font-size:12px;line-height:1;color:#111;font-weight:bold;letter-spacing:-0.2px;">2021</div>
<div class="txt" style="left:203.3px;top:454.68px;width:25.159999999999997px;text-align:center;font-size:12px;line-height:1;color:#333;letter-spacing:-0.3px">1</div>
<div class="txt" style="left:228.46px;top:454.68px;width:25.159999999999997px;text-align:center;font-size:12px;line-height:1;color:#333;letter-spacing:-0.3px">2</div>
<div class="txt" style="left:253.62px;top:454.68px;width:25.160000000000025px;text-align:center;font-size:12px;line-height:1;color:#333;letter-spacing:-0.3px">3</div>
<div class="txt" style="left:278.78000000000003px;top:454.68px;width:25.160000000000025px;text-align:center;font-size:12px;line-height:1;color:#333;letter-spacing:-0.3px">4</div>
<div class="txt" style="left:303.94px;top:454.68px;width:25.160000000000025px;text-align:center;font-size:12px;line-height:1;color:#333;letter-spacing:-0.3px">5</div>
<div class="txt" style="left:329.1px;top:454.68px;width:25.160000000000025px;text-align:center;font-size:12px;line-height:1;color:#333;letter-spacing:-0.3px">6</div>
<div class="txt" style="left:354.26px;top:454.68px;width:25.160000000000025px;text-align:center;font-size:12px;line-height:1;color:#333;letter-spacing:-0.3px">7</div>
<div class="txt" style="left:379.42px;top:454.68px;width:25.160000000000025px;text-align:center;font-size:12px;line-height:1;color:#333;letter-spacing:-0.3px">8</div>
<div class="txt" style="left:404.58000000000004px;top:454.68px;width:25.160000000000025px;text-align:center;font-size:12px;line-height:1;color:#333;letter-spacing:-0.3px">9</div>
<div class="txt" style="left:429.74px;top:454.68px;width:25.160000000000025px;text-align:center;font-size:12px;line-height:1;color:#333;letter-spacing:-0.3px">10</div>
<div class="txt" style="left:454.9px;top:454.68px;width:25.160000000000025px;text-align:center;font-size:12px;line-height:1;color:#333;letter-spacing:-0.3px">11</div>
<div class="txt" style="left:480.06px;top:454.68px;width:25.160000000000025px;text-align:center;font-size:12px;line-height:1;color:#333;letter-spacing:-0.3px">12</div>
<div class="txt" style="left:505.22px;top:454.68px;width:25.159999999999968px;text-align:center;font-size:12px;line-height:1;color:#333;letter-spacing:-0.3px">13</div>
<div class="txt" style="left:530.38px;top:454.68px;width:25.159999999999968px;text-align:center;font-size:12px;line-height:1;color:#333;letter-spacing:-0.3px">14</div>
<div class="txt" style="left:555.54px;top:454.68px;width:25.159999999999968px;text-align:center;font-size:12px;line-height:1;color:#333;letter-spacing:-0.3px">15</div>
<div class="txt" style="left:580.7px;top:454.68px;width:25.159999999999968px;text-align:center;font-size:12px;line-height:1;color:#333;letter-spacing:-0.3px">16</div>
<div class="txt" style="left:605.86px;top:454.68px;width:25.159999999999968px;text-align:center;font-size:12px;line-height:1;color:#333;letter-spacing:-0.3px">17</div>
<div class="txt" style="left:631.02px;top:454.68px;width:25.159999999999968px;text-align:center;font-size:12px;line-height:1;color:#333;letter-spacing:-0.3px">18</div>
<div class="txt" style="left:656.1800000000001px;top:454.68px;width:25.159999999999968px;text-align:center;font-size:12px;line-height:1;color:#333;letter-spacing:-0.3px">19</div>
<div class="txt" style="left:681.34px;top:454.68px;width:25.159999999999968px;text-align:center;font-size:12px;line-height:1;color:#333;letter-spacing:-0.3px">20</div>
<div class="txt" style="left:706.5px;top:454.68px;width:25.159999999999968px;text-align:center;font-size:12px;line-height:1;color:#333;letter-spacing:-0.3px">21</div>
<div class="txt" style="left:731.6600000000001px;top:454.68px;width:25.159999999999968px;text-align:center;font-size:12px;line-height:1;color:#333;letter-spacing:-0.3px">22</div>
<div class="txt" style="left:756.8199999999999px;top:454.68px;width:25.159999999999968px;text-align:center;font-size:12px;line-height:1;color:#333;letter-spacing:-0.3px">23</div>
<div class="txt" style="left:781.98px;top:454.68px;width:25.159999999999968px;text-align:center;font-size:12px;line-height:1;color:#333;letter-spacing:-0.3px">24</div>
<div class="txt" style="left:807.1400000000001px;top:454.68px;width:25.159999999999968px;text-align:center;font-size:12px;line-height:1;color:#333;letter-spacing:-0.3px">25</div>
<div class="txt" style="left:832.3px;top:454.68px;width:25.159999999999968px;text-align:center;font-size:12px;line-height:1;color:#333;letter-spacing:-0.3px">26</div>
<div class="txt" style="left:857.46px;top:454.68px;width:25.159999999999968px;text-align:center;font-size:12px;line-height:1;color:#333;letter-spacing:-0.3px">27</div>
<div class="txt" style="left:882.6200000000001px;top:454.68px;width:25.159999999999968px;text-align:center;font-size:12px;line-height:1;color:#333;letter-spacing:-0.3px">28</div>
<div class="txt" style="left:907.78px;top:454.68px;width:25.159999999999968px;text-align:center;font-size:12px;line-height:1;color:#333;letter-spacing:-0.3px">29</div>
<div class="txt" style="left:932.94px;top:454.68px;width:25.159999999999968px;text-align:center;font-size:12px;line-height:1;color:#333;letter-spacing:-0.3px">30</div>
<div class="txt" style="left:958.0999999999999px;top:454.68px;width:25.159999999999968px;text-align:center;font-size:12px;line-height:1;color:#333;letter-spacing:-0.3px">31</div>
<div class="txt" style="left:-101.69999999999999px;top:474.86px;width:300px;text-align:right;font-size:11.5px;line-height:1;color:#474849;letter-spacing:0px;">January</div>
<div class="a" style="left:203.30px;top:470.40px;width:25.16px;height:19.02px;background:#fdfdfd"></div>
<div class="txt" style="left:205.40px;top:473.80px;font-size:8.2px;line-height:1;color:#5c5c5c;">F</div>
<div class="a" style="left:228.46px;top:470.40px;width:25.16px;height:19.02px;background:#e9e9ea"></div>
<div class="txt" style="left:230.56px;top:473.80px;font-size:8.2px;line-height:1;color:#5c5c5c;">S</div>
<div class="a" style="left:253.62px;top:470.40px;width:25.16px;height:19.02px;background:#e9e9ea"></div>
<div class="txt" style="left:255.72px;top:473.80px;font-size:8.2px;line-height:1;color:#5c5c5c;">S</div>
<div class="a" style="left:278.78px;top:470.40px;width:25.16px;height:19.02px;background:#fdfdfd"></div>
<div class="txt" style="left:280.88px;top:473.80px;font-size:8.2px;line-height:1;color:#5c5c5c;">M</div>
<div class="a" style="left:303.94px;top:470.40px;width:25.16px;height:19.02px;background:#fdfdfd"></div>
<div class="txt" style="left:306.04px;top:473.80px;font-size:8.2px;line-height:1;color:#5c5c5c;">T</div>
<div class="a" style="left:329.10px;top:470.40px;width:25.16px;height:19.02px;background:#fdfdfd"></div>
<div class="txt" style="left:331.20px;top:473.80px;font-size:8.2px;line-height:1;color:#5c5c5c;">W</div>
<div class="a" style="left:354.26px;top:470.40px;width:25.16px;height:19.02px;background:#fdfdfd"></div>
<div class="txt" style="left:356.36px;top:473.80px;font-size:8.2px;line-height:1;color:#5c5c5c;">T</div>
<div class="a" style="left:379.42px;top:470.40px;width:25.16px;height:19.02px;background:#fdfdfd"></div>
<div class="txt" style="left:381.52px;top:473.80px;font-size:8.2px;line-height:1;color:#5c5c5c;">F</div>
<div class="a" style="left:404.58px;top:470.40px;width:25.16px;height:19.02px;background:#e9e9ea"></div>
<div class="txt" style="left:406.68px;top:473.80px;font-size:8.2px;line-height:1;color:#5c5c5c;">S</div>
<div class="a" style="left:429.74px;top:470.40px;width:25.16px;height:19.02px;background:#e9e9ea"></div>
<div class="txt" style="left:431.84px;top:473.80px;font-size:8.2px;line-height:1;color:#5c5c5c;">S</div>
<div class="a" style="left:454.90px;top:470.40px;width:25.16px;height:19.02px;background:#fdfdfd"></div>
<div class="txt" style="left:457.00px;top:473.80px;font-size:8.2px;line-height:1;color:#5c5c5c;">M</div>
<div class="a" style="left:480.06px;top:470.40px;width:25.16px;height:19.02px;background:#fdfdfd"></div>
<div class="txt" style="left:482.16px;top:473.80px;font-size:8.2px;line-height:1;color:#5c5c5c;">T</div>
<div class="a" style="left:505.22px;top:470.40px;width:25.16px;height:19.02px;background:#fdfdfd"></div>
<div class="txt" style="left:507.32px;top:473.80px;font-size:8.2px;line-height:1;color:#5c5c5c;">W</div>
<div class="a" style="left:530.38px;top:470.40px;width:25.16px;height:19.02px;background:#fdfdfd"></div>
<div class="txt" style="left:532.48px;top:473.80px;font-size:8.2px;line-height:1;color:#5c5c5c;">T</div>
<div class="a" style="left:555.54px;top:470.40px;width:25.16px;height:19.02px;background:#fdfdfd"></div>
<div class="txt" style="left:557.64px;top:473.80px;font-size:8.2px;line-height:1;color:#5c5c5c;">F</div>
<div class="a" style="left:580.70px;top:470.40px;width:25.16px;height:19.02px;background:#e9e9ea"></div>
<div class="txt" style="left:582.80px;top:473.80px;font-size:8.2px;line-height:1;color:#5c5c5c;">S</div>
<div class="a" style="left:605.86px;top:470.40px;width:25.16px;height:19.02px;background:#e9e9ea"></div>
<div class="txt" style="left:607.96px;top:473.80px;font-size:8.2px;line-height:1;color:#5c5c5c;">S</div>
<div class="a" style="left:631.02px;top:470.40px;width:25.16px;height:19.02px;background:#fdfdfd"></div>
<div class="txt" style="left:633.12px;top:473.80px;font-size:8.2px;line-height:1;color:#5c5c5c;">M</div>
<div class="a" style="left:656.18px;top:470.40px;width:25.16px;height:19.02px;background:#fdfdfd"></div>
<div class="txt" style="left:658.28px;top:473.80px;font-size:8.2px;line-height:1;color:#5c5c5c;">T</div>
<div class="a" style="left:681.34px;top:470.40px;width:25.16px;height:19.02px;background:#fdfdfd"></div>
<div class="txt" style="left:683.44px;top:473.80px;font-size:8.2px;line-height:1;color:#5c5c5c;">W</div>
<div class="a" style="left:706.50px;top:470.40px;width:25.16px;height:19.02px;background:#fdfdfd"></div>
<div class="txt" style="left:708.60px;top:473.80px;font-size:8.2px;line-height:1;color:#5c5c5c;">T</div>
<div class="a" style="left:731.66px;top:470.40px;width:25.16px;height:19.02px;background:#fdfdfd"></div>
<div class="txt" style="left:733.76px;top:473.80px;font-size:8.2px;line-height:1;color:#5c5c5c;">F</div>
<div class="a" style="left:756.82px;top:470.40px;width:25.16px;height:19.02px;background:#e9e9ea"></div>
<div class="txt" style="left:758.92px;top:473.80px;font-size:8.2px;line-height:1;color:#5c5c5c;">S</div>
<div class="a" style="left:781.98px;top:470.40px;width:25.16px;height:19.02px;background:#e9e9ea"></div>
<div class="txt" style="left:784.08px;top:473.80px;font-size:8.2px;line-height:1;color:#5c5c5c;">S</div>
<div class="a" style="left:807.14px;top:470.40px;width:25.16px;height:19.02px;background:#fdfdfd"></div>
<div class="txt" style="left:809.24px;top:473.80px;font-size:8.2px;line-height:1;color:#5c5c5c;">M</div>
<div class="a" style="left:832.30px;top:470.40px;width:25.16px;height:19.02px;background:#fdfdfd"></div>
<div class="txt" style="left:834.40px;top:473.80px;font-size:8.2px;line-height:1;color:#5c5c5c;">T</div>
<div class="a" style="left:857.46px;top:470.40px;width:25.16px;height:19.02px;background:#fdfdfd"></div>
<div class="txt" style="left:859.56px;top:473.80px;font-size:8.2px;line-height:1;color:#5c5c5c;">W</div>
<div class="a" style="left:882.62px;top:470.40px;width:25.16px;height:19.02px;background:#fdfdfd"></div>
<div class="txt" style="left:884.72px;top:473.80px;font-size:8.2px;line-height:1;color:#5c5c5c;">T</div>
<div class="a" style="left:907.78px;top:470.40px;width:25.16px;height:19.02px;background:#fdfdfd"></div>
<div class="txt" style="left:909.88px;top:473.80px;font-size:8.2px;line-height:1;color:#5c5c5c;">F</div>
<div class="a" style="left:932.94px;top:470.40px;width:25.16px;height:19.02px;background:#e9e9ea"></div>
<div class="txt" style="left:935.04px;top:473.80px;font-size:8.2px;line-height:1;color:#5c5c5c;">S</div>
<div class="a" style="left:958.10px;top:470.40px;width:25.16px;height:19.02px;background:#e9e9ea"></div>
<div class="txt" style="left:960.20px;top:473.80px;font-size:8.2px;line-height:1;color:#5c5c5c;">S</div>
<div class="txt" style="left:-101.69999999999999px;top:493.88px;width:300px;text-align:right;font-size:11.5px;line-height:1;color:#474849;letter-spacing:0px;">February</div>
<div class="a" style="left:203.30px;top:489.42px;width:25.16px;height:19.02px;background:#fdfdfd"></div>
<div class="txt" style="left:205.40px;top:492.82px;font-size:8.2px;line-height:1;color:#5c5c5c;">M</div>
<div class="a" style="left:228.46px;top:489.42px;width:25.16px;height:19.02px;background:#fdfdfd"></div>
<div class="txt" style="left:230.56px;top:492.82px;font-size:8.2px;line-height:1;color:#5c5c5c;">T</div>
<div class="a" style="left:253.62px;top:489.42px;width:25.16px;height:19.02px;background:#fdfdfd"></div>
<div class="txt" style="left:255.72px;top:492.82px;font-size:8.2px;line-height:1;color:#5c5c5c;">W</div>
<div class="a" style="left:278.78px;top:489.42px;width:25.16px;height:19.02px;background:#fdfdfd"></div>
<div class="txt" style="left:280.88px;top:492.82px;font-size:8.2px;line-height:1;color:#5c5c5c;">T</div>
<div class="a" style="left:303.94px;top:489.42px;width:25.16px;height:19.02px;background:#fdfdfd"></div>
<div class="txt" style="left:306.04px;top:492.82px;font-size:8.2px;line-height:1;color:#5c5c5c;">F</div>
<div class="a" style="left:329.10px;top:489.42px;width:25.16px;height:19.02px;background:#e9e9ea"></div>
<div class="txt" style="left:331.20px;top:492.82px;font-size:8.2px;line-height:1;color:#5c5c5c;">S</div>
<div class="a" style="left:354.26px;top:489.42px;width:25.16px;height:19.02px;background:#e9e9ea"></div>
<div class="txt" style="left:356.36px;top:492.82px;font-size:8.2px;line-height:1;color:#5c5c5c;">S</div>
<div class="a" style="left:379.42px;top:489.42px;width:25.16px;height:19.02px;background:#fdfdfd"></div>
<div class="txt" style="left:381.52px;top:492.82px;font-size:8.2px;line-height:1;color:#5c5c5c;">M</div>
<div class="a" style="left:404.58px;top:489.42px;width:25.16px;height:19.02px;background:#fdfdfd"></div>
<div class="txt" style="left:406.68px;top:492.82px;font-size:8.2px;line-height:1;color:#5c5c5c;">T</div>
<div class="a" style="left:429.74px;top:489.42px;width:25.16px;height:19.02px;background:#fdfdfd"></div>
<div class="txt" style="left:431.84px;top:492.82px;font-size:8.2px;line-height:1;color:#5c5c5c;">W</div>
<div class="a" style="left:454.90px;top:489.42px;width:25.16px;height:19.02px;background:#fdfdfd"></div>
<div class="txt" style="left:457.00px;top:492.82px;font-size:8.2px;line-height:1;color:#5c5c5c;">T</div>
<div class="a" style="left:480.06px;top:489.42px;width:25.16px;height:19.02px;background:#fdfdfd"></div>
<div class="txt" style="left:482.16px;top:492.82px;font-size:8.2px;line-height:1;color:#5c5c5c;">F</div>
<div class="a" style="left:505.22px;top:489.42px;width:25.16px;height:19.02px;background:#e9e9ea"></div>
<div class="txt" style="left:507.32px;top:492.82px;font-size:8.2px;line-height:1;color:#5c5c5c;">S</div>
<div class="a" style="left:530.38px;top:489.42px;width:25.16px;height:19.02px;background:#e9e9ea"></div>
<div class="txt" style="left:532.48px;top:492.82px;font-size:8.2px;line-height:1;color:#5c5c5c;">S</div>
<div class="a" style="left:555.54px;top:489.42px;width:25.16px;height:19.02px;background:#fdfdfd"></div>
<div class="txt" style="left:557.64px;top:492.82px;font-size:8.2px;line-height:1;color:#5c5c5c;">M</div>
<div class="a" style="left:580.70px;top:489.42px;width:25.16px;height:19.02px;background:#fdfdfd"></div>
<div class="txt" style="left:582.80px;top:492.82px;font-size:8.2px;line-height:1;color:#5c5c5c;">T</div>
<div class="a" style="left:605.86px;top:489.42px;width:25.16px;height:19.02px;background:#fdfdfd"></div>
<div class="txt" style="left:607.96px;top:492.82px;font-size:8.2px;line-height:1;color:#5c5c5c;">W</div>
<div class="a" style="left:631.02px;top:489.42px;width:25.16px;height:19.02px;background:#fdfdfd"></div>
<div class="txt" style="left:633.12px;top:492.82px;font-size:8.2px;line-height:1;color:#5c5c5c;">T</div>
<div class="a" style="left:656.18px;top:489.42px;width:25.16px;height:19.02px;background:#fdfdfd"></div>
<div class="txt" style="left:658.28px;top:492.82px;font-size:8.2px;line-height:1;color:#5c5c5c;">F</div>
<div class="a" style="left:681.34px;top:489.42px;width:25.16px;height:19.02px;background:#e9e9ea"></div>
<div class="txt" style="left:683.44px;top:492.82px;font-size:8.2px;line-height:1;color:#5c5c5c;">S</div>
<div class="a" style="left:706.50px;top:489.42px;width:25.16px;height:19.02px;background:#e9e9ea"></div>
<div class="txt" style="left:708.60px;top:492.82px;font-size:8.2px;line-height:1;color:#5c5c5c;">S</div>
<div class="a" style="left:731.66px;top:489.42px;width:25.16px;height:19.02px;background:#fdfdfd"></div>
<div class="txt" style="left:733.76px;top:492.82px;font-size:8.2px;line-height:1;color:#5c5c5c;">M</div>
<div class="a" style="left:756.82px;top:489.42px;width:25.16px;height:19.02px;background:#fdfdfd"></div>
<div class="txt" style="left:758.92px;top:492.82px;font-size:8.2px;line-height:1;color:#5c5c5c;">T</div>
<div class="a" style="left:781.98px;top:489.42px;width:25.16px;height:19.02px;background:#fdfdfd"></div>
<div class="txt" style="left:784.08px;top:492.82px;font-size:8.2px;line-height:1;color:#5c5c5c;">W</div>
<div class="a" style="left:807.14px;top:489.42px;width:25.16px;height:19.02px;background:#fdfdfd"></div>
<div class="txt" style="left:809.24px;top:492.82px;font-size:8.2px;line-height:1;color:#5c5c5c;">T</div>
<div class="a" style="left:832.30px;top:489.42px;width:25.16px;height:19.02px;background:#fdfdfd"></div>
<div class="txt" style="left:834.40px;top:492.82px;font-size:8.2px;line-height:1;color:#5c5c5c;">F</div>
<div class="a" style="left:857.46px;top:489.42px;width:25.16px;height:19.02px;background:#e9e9ea"></div>
<div class="txt" style="left:859.56px;top:492.82px;font-size:8.2px;line-height:1;color:#5c5c5c;">S</div>
<div class="a" style="left:882.62px;top:489.42px;width:25.16px;height:19.02px;background:#e9e9ea"></div>
<div class="txt" style="left:884.72px;top:492.82px;font-size:8.2px;line-height:1;color:#5c5c5c;">S</div>
<div class="txt" style="left:-101.69999999999999px;top:512.90px;width:300px;text-align:right;font-size:11.5px;line-height:1;color:#474849;letter-spacing:0px;">March</div>
<div class="a" style="left:203.30px;top:508.44px;width:25.16px;height:19.02px;background:#fdfdfd"></div>
<div class="txt" style="left:205.40px;top:511.84px;font-size:8.2px;line-height:1;color:#5c5c5c;">M</div>
<div class="a" style="left:228.46px;top:508.44px;width:25.16px;height:19.02px;background:#fdfdfd"></div>
<div class="txt" style="left:230.56px;top:511.84px;font-size:8.2px;line-height:1;color:#5c5c5c;">T</div>
<div class="a" style="left:253.62px;top:508.44px;width:25.16px;height:19.02px;background:#fdfdfd"></div>
<div class="txt" style="left:255.72px;top:511.84px;font-size:8.2px;line-height:1;color:#5c5c5c;">W</div>
<div class="a" style="left:278.78px;top:508.44px;width:25.16px;height:19.02px;background:#fdfdfd"></div>
<div class="txt" style="left:280.88px;top:511.84px;font-size:8.2px;line-height:1;color:#5c5c5c;">T</div>
<div class="a" style="left:303.94px;top:508.44px;width:25.16px;height:19.02px;background:#fdfdfd"></div>
<div class="txt" style="left:306.04px;top:511.84px;font-size:8.2px;line-height:1;color:#5c5c5c;">F</div>
<div class="a" style="left:329.10px;top:508.44px;width:25.16px;height:19.02px;background:#e9e9ea"></div>
<div class="txt" style="left:331.20px;top:511.84px;font-size:8.2px;line-height:1;color:#5c5c5c;">S</div>
<div class="a" style="left:354.26px;top:508.44px;width:25.16px;height:19.02px;background:#e9e9ea"></div>
<div class="txt" style="left:356.36px;top:511.84px;font-size:8.2px;line-height:1;color:#5c5c5c;">S</div>
<div class="a" style="left:379.42px;top:508.44px;width:25.16px;height:19.02px;background:#fdfdfd"></div>
<div class="txt" style="left:381.52px;top:511.84px;font-size:8.2px;line-height:1;color:#5c5c5c;">M</div>
<div class="a" style="left:404.58px;top:508.44px;width:25.16px;height:19.02px;background:#fdfdfd"></div>
<div class="txt" style="left:406.68px;top:511.84px;font-size:8.2px;line-height:1;color:#5c5c5c;">T</div>
<div class="a" style="left:429.74px;top:508.44px;width:25.16px;height:19.02px;background:#fdfdfd"></div>
<div class="txt" style="left:431.84px;top:511.84px;font-size:8.2px;line-height:1;color:#5c5c5c;">W</div>
<div class="a" style="left:454.90px;top:508.44px;width:25.16px;height:19.02px;background:#fdfdfd"></div>
<div class="txt" style="left:457.00px;top:511.84px;font-size:8.2px;line-height:1;color:#5c5c5c;">T</div>
<div class="a" style="left:480.06px;top:508.44px;width:25.16px;height:19.02px;background:#fdfdfd"></div>
<div class="txt" style="left:482.16px;top:511.84px;font-size:8.2px;line-height:1;color:#5c5c5c;">F</div>
<div class="a" style="left:505.22px;top:508.44px;width:25.16px;height:19.02px;background:#e9e9ea"></div>
<div class="txt" style="left:507.32px;top:511.84px;font-size:8.2px;line-height:1;color:#5c5c5c;">S</div>
<div class="a" style="left:530.38px;top:508.44px;width:25.16px;height:19.02px;background:#e9e9ea"></div>
<div class="txt" style="left:532.48px;top:511.84px;font-size:8.2px;line-height:1;color:#5c5c5c;">S</div>
<div class="a" style="left:555.54px;top:508.44px;width:25.16px;height:19.02px;background:#fdfdfd"></div>
<div class="txt" style="left:557.64px;top:511.84px;font-size:8.2px;line-height:1;color:#5c5c5c;">M</div>
<div class="a" style="left:580.70px;top:508.44px;width:25.16px;height:19.02px;background:#fdfdfd"></div>
<div class="txt" style="left:582.80px;top:511.84px;font-size:8.2px;line-height:1;color:#5c5c5c;">T</div>
<div class="a" style="left:605.86px;top:508.44px;width:25.16px;height:19.02px;background:#fdfdfd"></div>
<div class="txt" style="left:607.96px;top:511.84px;font-size:8.2px;line-height:1;color:#5c5c5c;">W</div>
<div class="a" style="left:631.02px;top:508.44px;width:25.16px;height:19.02px;background:#fdfdfd"></div>
<div class="txt" style="left:633.12px;top:511.84px;font-size:8.2px;line-height:1;color:#5c5c5c;">T</div>
<div class="a" style="left:656.18px;top:508.44px;width:25.16px;height:19.02px;background:#fdfdfd"></div>
<div class="txt" style="left:658.28px;top:511.84px;font-size:8.2px;line-height:1;color:#5c5c5c;">F</div>
<div class="a" style="left:681.34px;top:508.44px;width:25.16px;height:19.02px;background:#e9e9ea"></div>
<div class="txt" style="left:683.44px;top:511.84px;font-size:8.2px;line-height:1;color:#5c5c5c;">S</div>
<div class="a" style="left:706.50px;top:508.44px;width:25.16px;height:19.02px;background:#e9e9ea"></div>
<div class="txt" style="left:708.60px;top:511.84px;font-size:8.2px;line-height:1;color:#5c5c5c;">S</div>
<div class="a" style="left:731.66px;top:508.44px;width:25.16px;height:19.02px;background:#fdfdfd"></div>
<div class="txt" style="left:733.76px;top:511.84px;font-size:8.2px;line-height:1;color:#5c5c5c;">M</div>
<div class="a" style="left:756.82px;top:508.44px;width:25.16px;height:19.02px;background:#fdfdfd"></div>
<div class="txt" style="left:758.92px;top:511.84px;font-size:8.2px;line-height:1;color:#5c5c5c;">T</div>
<div class="a" style="left:781.98px;top:508.44px;width:25.16px;height:19.02px;background:#fdfdfd"></div>
<div class="txt" style="left:784.08px;top:511.84px;font-size:8.2px;line-height:1;color:#5c5c5c;">W</div>
<div class="a" style="left:807.14px;top:508.44px;width:25.16px;height:19.02px;background:#fdfdfd"></div>
<div class="txt" style="left:809.24px;top:511.84px;font-size:8.2px;line-height:1;color:#5c5c5c;">T</div>
<div class="a" style="left:832.30px;top:508.44px;width:25.16px;height:19.02px;background:#fdfdfd"></div>
<div class="txt" style="left:834.40px;top:511.84px;font-size:8.2px;line-height:1;color:#5c5c5c;">F</div>
<div class="a" style="left:857.46px;top:508.44px;width:25.16px;height:19.02px;background:#e9e9ea"></div>
<div class="txt" style="left:859.56px;top:511.84px;font-size:8.2px;line-height:1;color:#5c5c5c;">S</div>
<div class="a" style="left:882.62px;top:508.44px;width:25.16px;height:19.02px;background:#e9e9ea"></div>
<div class="txt" style="left:884.72px;top:511.84px;font-size:8.2px;line-height:1;color:#5c5c5c;">S</div>
<div class="a" style="left:907.78px;top:508.44px;width:25.16px;height:19.02px;background:#fdfdfd"></div>
<div class="txt" style="left:909.88px;top:511.84px;font-size:8.2px;line-height:1;color:#5c5c5c;">M</div>
<div class="a" style="left:932.94px;top:508.44px;width:25.16px;height:19.02px;background:#fdfdfd"></div>
<div class="txt" style="left:935.04px;top:511.84px;font-size:8.2px;line-height:1;color:#5c5c5c;">T</div>
<div class="a" style="left:958.10px;top:508.44px;width:25.16px;height:19.02px;background:#fdfdfd"></div>
<div class="txt" style="left:960.20px;top:511.84px;font-size:8.2px;line-height:1;color:#5c5c5c;">W</div>
<div class="txt" style="left:-101.69999999999999px;top:531.92px;width:300px;text-align:right;font-size:11.5px;line-height:1;color:#474849;letter-spacing:0px;">April</div>
<div class="a" style="left:203.30px;top:527.46px;width:25.16px;height:19.02px;background:#fdfdfd"></div>
<div class="txt" style="left:205.40px;top:530.86px;font-size:8.2px;line-height:1;color:#5c5c5c;">T</div>
<div class="a" style="left:228.46px;top:527.46px;width:25.16px;height:19.02px;background:#fdfdfd"></div>
<div class="txt" style="left:230.56px;top:530.86px;font-size:8.2px;line-height:1;color:#5c5c5c;">F</div>
<div class="a" style="left:253.62px;top:527.46px;width:25.16px;height:19.02px;background:#e9e9ea"></div>
<div class="txt" style="left:255.72px;top:530.86px;font-size:8.2px;line-height:1;color:#5c5c5c;">S</div>
<div class="a" style="left:278.78px;top:527.46px;width:25.16px;height:19.02px;background:#e9e9ea"></div>
<div class="txt" style="left:280.88px;top:530.86px;font-size:8.2px;line-height:1;color:#5c5c5c;">S</div>
<div class="a" style="left:303.94px;top:527.46px;width:25.16px;height:19.02px;background:#fdfdfd"></div>
<div class="txt" style="left:306.04px;top:530.86px;font-size:8.2px;line-height:1;color:#5c5c5c;">M</div>
<div class="a" style="left:329.10px;top:527.46px;width:25.16px;height:19.02px;background:#fdfdfd"></div>
<div class="txt" style="left:331.20px;top:530.86px;font-size:8.2px;line-height:1;color:#5c5c5c;">T</div>
<div class="a" style="left:354.26px;top:527.46px;width:25.16px;height:19.02px;background:#fdfdfd"></div>
<div class="txt" style="left:356.36px;top:530.86px;font-size:8.2px;line-height:1;color:#5c5c5c;">W</div>
<div class="a" style="left:379.42px;top:527.46px;width:25.16px;height:19.02px;background:#fdfdfd"></div>
<div class="txt" style="left:381.52px;top:530.86px;font-size:8.2px;line-height:1;color:#5c5c5c;">T</div>
<div class="a" style="left:404.58px;top:527.46px;width:25.16px;height:19.02px;background:#fdfdfd"></div>
<div class="txt" style="left:406.68px;top:530.86px;font-size:8.2px;line-height:1;color:#5c5c5c;">F</div>
<div class="a" style="left:429.74px;top:527.46px;width:25.16px;height:19.02px;background:#e9e9ea"></div>
<div class="txt" style="left:431.84px;top:530.86px;font-size:8.2px;line-height:1;color:#5c5c5c;">S</div>
<div class="a" style="left:454.90px;top:527.46px;width:25.16px;height:19.02px;background:#e9e9ea"></div>
<div class="txt" style="left:457.00px;top:530.86px;font-size:8.2px;line-height:1;color:#5c5c5c;">S</div>
<div class="a" style="left:480.06px;top:527.46px;width:25.16px;height:19.02px;background:#fdfdfd"></div>
<div class="txt" style="left:482.16px;top:530.86px;font-size:8.2px;line-height:1;color:#5c5c5c;">M</div>
<div class="a" style="left:505.22px;top:527.46px;width:25.16px;height:19.02px;background:#4caf50"></div>
<div class="txt" style="left:507.32px;top:530.86px;font-size:8.2px;line-height:1;color:#fff;font-weight:bold;">T</div>
<div class="a" style="left:530.38px;top:527.46px;width:25.16px;height:19.02px;background:#4caf50"></div>
<div class="txt" style="left:532.48px;top:530.86px;font-size:8.2px;line-height:1;color:#fff;font-weight:bold;">W</div>
<div class="a" style="left:555.54px;top:527.46px;width:25.16px;height:19.02px;background:#4caf50"></div>
<div class="txt" style="left:557.64px;top:530.86px;font-size:8.2px;line-height:1;color:#fff;font-weight:bold;">T</div>
<div class="a" style="left:580.70px;top:527.46px;width:25.16px;height:19.02px;background:#4caf50"></div>
<div class="txt" style="left:582.80px;top:530.86px;font-size:8.2px;line-height:1;color:#fff;font-weight:bold;">F</div>
<div class="a" style="left:605.86px;top:527.46px;width:25.16px;height:19.02px;background:#e9e9ea"></div>
<div class="txt" style="left:607.96px;top:530.86px;font-size:8.2px;line-height:1;color:#5c5c5c;">S</div>
<div class="a" style="left:631.02px;top:527.46px;width:25.16px;height:19.02px;background:#e9e9ea"></div>
<div class="txt" style="left:633.12px;top:530.86px;font-size:8.2px;line-height:1;color:#5c5c5c;">S</div>
<div class="a" style="left:656.18px;top:527.46px;width:25.16px;height:19.02px;background:#4caf50"></div>
<div class="txt" style="left:658.28px;top:530.86px;font-size:8.2px;line-height:1;color:#fff;font-weight:bold;">M</div>
<div class="a" style="left:681.34px;top:527.46px;width:25.16px;height:19.02px;background:#4caf50"></div>
<div class="txt" style="left:683.44px;top:530.86px;font-size:8.2px;line-height:1;color:#fff;font-weight:bold;">T</div>
<div class="a" style="left:706.50px;top:527.46px;width:25.16px;height:19.02px;background:#fdfdfd"></div>
<div class="txt" style="left:708.60px;top:530.86px;font-size:8.2px;line-height:1;color:#5c5c5c;">W</div>
<div class="a" style="left:731.66px;top:527.46px;width:25.16px;height:19.02px;background:#fdfdfd"></div>
<div class="txt" style="left:733.76px;top:530.86px;font-size:8.2px;line-height:1;color:#5c5c5c;">T</div>
<div class="a" style="left:756.82px;top:527.46px;width:25.16px;height:19.02px;background:#fdfdfd"></div>
<div class="txt" style="left:758.92px;top:530.86px;font-size:8.2px;line-height:1;color:#5c5c5c;">F</div>
<div class="a" style="left:781.98px;top:527.46px;width:25.16px;height:19.02px;background:#e9e9ea"></div>
<div class="txt" style="left:784.08px;top:530.86px;font-size:8.2px;line-height:1;color:#5c5c5c;">S</div>
<div class="a" style="left:807.14px;top:527.46px;width:25.16px;height:19.02px;background:#e9e9ea"></div>
<div class="txt" style="left:809.24px;top:530.86px;font-size:8.2px;line-height:1;color:#5c5c5c;">S</div>
<div class="a" style="left:832.30px;top:527.46px;width:25.16px;height:19.02px;background:#fdfdfd"></div>
<div class="txt" style="left:834.40px;top:530.86px;font-size:8.2px;line-height:1;color:#5c5c5c;">M</div>
<div class="a" style="left:857.46px;top:527.46px;width:25.16px;height:19.02px;background:#fdfdfd"></div>
<div class="txt" style="left:859.56px;top:530.86px;font-size:8.2px;line-height:1;color:#5c5c5c;">T</div>
<div class="a" style="left:882.62px;top:527.46px;width:25.16px;height:19.02px;background:#fdfdfd"></div>
<div class="txt" style="left:884.72px;top:530.86px;font-size:8.2px;line-height:1;color:#5c5c5c;">W</div>
<div class="a" style="left:907.78px;top:527.46px;width:25.16px;height:19.02px;background:#fdfdfd"></div>
<div class="txt" style="left:909.88px;top:530.86px;font-size:8.2px;line-height:1;color:#5c5c5c;">T</div>
<div class="a" style="left:932.94px;top:527.46px;width:25.16px;height:19.02px;background:#fdfdfd"></div>
<div class="txt" style="left:935.04px;top:530.86px;font-size:8.2px;line-height:1;color:#5c5c5c;">F</div>
<div class="txt" style="left:-101.69999999999999px;top:550.94px;width:300px;text-align:right;font-size:11.5px;line-height:1;color:#474849;letter-spacing:0px;">May</div>
<div class="a" style="left:203.30px;top:546.48px;width:25.16px;height:19.02px;background:#e9e9ea"></div>
<div class="txt" style="left:205.40px;top:549.88px;font-size:8.2px;line-height:1;color:#5c5c5c;">S</div>
<div class="a" style="left:228.46px;top:546.48px;width:25.16px;height:19.02px;background:#e9e9ea"></div>
<div class="txt" style="left:230.56px;top:549.88px;font-size:8.2px;line-height:1;color:#5c5c5c;">S</div>
<div class="a" style="left:253.62px;top:546.48px;width:25.16px;height:19.02px;background:#fdfdfd"></div>
<div class="txt" style="left:255.72px;top:549.88px;font-size:8.2px;line-height:1;color:#5c5c5c;">M</div>
<div class="a" style="left:278.78px;top:546.48px;width:25.16px;height:19.02px;background:#fdfdfd"></div>
<div class="txt" style="left:280.88px;top:549.88px;font-size:8.2px;line-height:1;color:#5c5c5c;">T</div>
<div class="a" style="left:303.94px;top:546.48px;width:25.16px;height:19.02px;background:#fdfdfd"></div>
<div class="txt" style="left:306.04px;top:549.88px;font-size:8.2px;line-height:1;color:#5c5c5c;">W</div>
<div class="a" style="left:329.10px;top:546.48px;width:25.16px;height:19.02px;background:#fdfdfd"></div>
<div class="txt" style="left:331.20px;top:549.88px;font-size:8.2px;line-height:1;color:#5c5c5c;">T</div>
<div class="a" style="left:354.26px;top:546.48px;width:25.16px;height:19.02px;background:#fdfdfd"></div>
<div class="txt" style="left:356.36px;top:549.88px;font-size:8.2px;line-height:1;color:#5c5c5c;">F</div>
<div class="a" style="left:379.42px;top:546.48px;width:25.16px;height:19.02px;background:#e9e9ea"></div>
<div class="txt" style="left:381.52px;top:549.88px;font-size:8.2px;line-height:1;color:#5c5c5c;">S</div>
<div class="a" style="left:404.58px;top:546.48px;width:25.16px;height:19.02px;background:#e9e9ea"></div>
<div class="txt" style="left:406.68px;top:549.88px;font-size:8.2px;line-height:1;color:#5c5c5c;">S</div>
<div class="a" style="left:429.74px;top:546.48px;width:25.16px;height:19.02px;background:#fdfdfd"></div>
<div class="txt" style="left:431.84px;top:549.88px;font-size:8.2px;line-height:1;color:#5c5c5c;">M</div>
<div class="a" style="left:454.90px;top:546.48px;width:25.16px;height:19.02px;background:#fdfdfd"></div>
<div class="txt" style="left:457.00px;top:549.88px;font-size:8.2px;line-height:1;color:#5c5c5c;">T</div>
<div class="a" style="left:480.06px;top:546.48px;width:25.16px;height:19.02px;background:#fdfdfd"></div>
<div class="txt" style="left:482.16px;top:549.88px;font-size:8.2px;line-height:1;color:#5c5c5c;">W</div>
<div class="a" style="left:505.22px;top:546.48px;width:25.16px;height:19.02px;background:#fdfdfd"></div>
<div class="txt" style="left:507.32px;top:549.88px;font-size:8.2px;line-height:1;color:#5c5c5c;">T</div>
<div class="a" style="left:530.38px;top:546.48px;width:25.16px;height:19.02px;background:#fdfdfd"></div>
<div class="txt" style="left:532.48px;top:549.88px;font-size:8.2px;line-height:1;color:#5c5c5c;">F</div>
<div class="a" style="left:555.54px;top:546.48px;width:25.16px;height:19.02px;background:#e9e9ea"></div>
<div class="txt" style="left:557.64px;top:549.88px;font-size:8.2px;line-height:1;color:#5c5c5c;">S</div>
<div class="a" style="left:580.70px;top:546.48px;width:25.16px;height:19.02px;background:#e9e9ea"></div>
<div class="txt" style="left:582.80px;top:549.88px;font-size:8.2px;line-height:1;color:#5c5c5c;">S</div>
<div class="a" style="left:605.86px;top:546.48px;width:25.16px;height:19.02px;background:#fdfdfd"></div>
<div class="txt" style="left:607.96px;top:549.88px;font-size:8.2px;line-height:1;color:#5c5c5c;">M</div>
<div class="a" style="left:631.02px;top:546.48px;width:25.16px;height:19.02px;background:#fdfdfd"></div>
<div class="txt" style="left:633.12px;top:549.88px;font-size:8.2px;line-height:1;color:#5c5c5c;">T</div>
<div class="a" style="left:656.18px;top:546.48px;width:25.16px;height:19.02px;background:#fdfdfd"></div>
<div class="txt" style="left:658.28px;top:549.88px;font-size:8.2px;line-height:1;color:#5c5c5c;">W</div>
<div class="a" style="left:681.34px;top:546.48px;width:25.16px;height:19.02px;background:#fdfdfd"></div>
<div class="txt" style="left:683.44px;top:549.88px;font-size:8.2px;line-height:1;color:#5c5c5c;">T</div>
<div class="a" style="left:706.50px;top:546.48px;width:25.16px;height:19.02px;background:#fdfdfd"></div>
<div class="txt" style="left:708.60px;top:549.88px;font-size:8.2px;line-height:1;color:#5c5c5c;">F</div>
<div class="a" style="left:731.66px;top:546.48px;width:25.16px;height:19.02px;background:#e9e9ea"></div>
<div class="txt" style="left:733.76px;top:549.88px;font-size:8.2px;line-height:1;color:#5c5c5c;">S</div>
<div class="a" style="left:756.82px;top:546.48px;width:25.16px;height:19.02px;background:#e9e9ea"></div>
<div class="txt" style="left:758.92px;top:549.88px;font-size:8.2px;line-height:1;color:#5c5c5c;">S</div>
<div class="a" style="left:781.98px;top:546.48px;width:25.16px;height:19.02px;background:#fdfdfd"></div>
<div class="txt" style="left:784.08px;top:549.88px;font-size:8.2px;line-height:1;color:#5c5c5c;">M</div>
<div class="a" style="left:807.14px;top:546.48px;width:25.16px;height:19.02px;background:#fdfdfd"></div>
<div class="txt" style="left:809.24px;top:549.88px;font-size:8.2px;line-height:1;color:#5c5c5c;">T</div>
<div class="a" style="left:832.30px;top:546.48px;width:25.16px;height:19.02px;background:#fdfdfd"></div>
<div class="txt" style="left:834.40px;top:549.88px;font-size:8.2px;line-height:1;color:#5c5c5c;">W</div>
<div class="a" style="left:857.46px;top:546.48px;width:25.16px;height:19.02px;background:#fdfdfd"></div>
<div class="txt" style="left:859.56px;top:549.88px;font-size:8.2px;line-height:1;color:#5c5c5c;">T</div>
<div class="a" style="left:882.62px;top:546.48px;width:25.16px;height:19.02px;background:#fdfdfd"></div>
<div class="txt" style="left:884.72px;top:549.88px;font-size:8.2px;line-height:1;color:#5c5c5c;">F</div>
<div class="a" style="left:907.78px;top:546.48px;width:25.16px;height:19.02px;background:#e9e9ea"></div>
<div class="txt" style="left:909.88px;top:549.88px;font-size:8.2px;line-height:1;color:#5c5c5c;">S</div>
<div class="a" style="left:932.94px;top:546.48px;width:25.16px;height:19.02px;background:#e9e9ea"></div>
<div class="txt" style="left:935.04px;top:549.88px;font-size:8.2px;line-height:1;color:#5c5c5c;">S</div>
<div class="a" style="left:958.10px;top:546.48px;width:25.16px;height:19.02px;background:#fdfdfd"></div>
<div class="txt" style="left:960.20px;top:549.88px;font-size:8.2px;line-height:1;color:#5c5c5c;">M</div>
<div class="txt" style="left:-101.69999999999999px;top:569.96px;width:300px;text-align:right;font-size:11.5px;line-height:1;color:#474849;letter-spacing:0px;">June</div>
<div class="a" style="left:203.30px;top:565.50px;width:25.16px;height:19.02px;background:#fdfdfd"></div>
<div class="txt" style="left:205.40px;top:568.90px;font-size:8.2px;line-height:1;color:#5c5c5c;">T</div>
<div class="a" style="left:228.46px;top:565.50px;width:25.16px;height:19.02px;background:#fdfdfd"></div>
<div class="txt" style="left:230.56px;top:568.90px;font-size:8.2px;line-height:1;color:#5c5c5c;">W</div>
<div class="a" style="left:253.62px;top:565.50px;width:25.16px;height:19.02px;background:#fdfdfd"></div>
<div class="txt" style="left:255.72px;top:568.90px;font-size:8.2px;line-height:1;color:#5c5c5c;">T</div>
<div class="a" style="left:278.78px;top:565.50px;width:25.16px;height:19.02px;background:#fdfdfd"></div>
<div class="txt" style="left:280.88px;top:568.90px;font-size:8.2px;line-height:1;color:#5c5c5c;">F</div>
<div class="a" style="left:303.94px;top:565.50px;width:25.16px;height:19.02px;background:#e9e9ea"></div>
<div class="txt" style="left:306.04px;top:568.90px;font-size:8.2px;line-height:1;color:#5c5c5c;">S</div>
<div class="a" style="left:329.10px;top:565.50px;width:25.16px;height:19.02px;background:#e9e9ea"></div>
<div class="txt" style="left:331.20px;top:568.90px;font-size:8.2px;line-height:1;color:#5c5c5c;">S</div>
<div class="a" style="left:354.26px;top:565.50px;width:25.16px;height:19.02px;background:#fdfdfd"></div>
<div class="txt" style="left:356.36px;top:568.90px;font-size:8.2px;line-height:1;color:#5c5c5c;">M</div>
<div class="a" style="left:379.42px;top:565.50px;width:25.16px;height:19.02px;background:#fdfdfd"></div>
<div class="txt" style="left:381.52px;top:568.90px;font-size:8.2px;line-height:1;color:#5c5c5c;">T</div>
<div class="a" style="left:404.58px;top:565.50px;width:25.16px;height:19.02px;background:#fdfdfd"></div>
<div class="txt" style="left:406.68px;top:568.90px;font-size:8.2px;line-height:1;color:#5c5c5c;">W</div>
<div class="a" style="left:429.74px;top:565.50px;width:25.16px;height:19.02px;background:#fdfdfd"></div>
<div class="txt" style="left:431.84px;top:568.90px;font-size:8.2px;line-height:1;color:#5c5c5c;">T</div>
<div class="a" style="left:454.90px;top:565.50px;width:25.16px;height:19.02px;background:#fdfdfd"></div>
<div class="txt" style="left:457.00px;top:568.90px;font-size:8.2px;line-height:1;color:#5c5c5c;">F</div>
<div class="a" style="left:480.06px;top:565.50px;width:25.16px;height:19.02px;background:#e9e9ea"></div>
<div class="txt" style="left:482.16px;top:568.90px;font-size:8.2px;line-height:1;color:#5c5c5c;">S</div>
<div class="a" style="left:505.22px;top:565.50px;width:25.16px;height:19.02px;background:#e9e9ea"></div>
<div class="txt" style="left:507.32px;top:568.90px;font-size:8.2px;line-height:1;color:#5c5c5c;">S</div>
<div class="a" style="left:530.38px;top:565.50px;width:25.16px;height:19.02px;background:#fdfdfd"></div>
<div class="txt" style="left:532.48px;top:568.90px;font-size:8.2px;line-height:1;color:#5c5c5c;">M</div>
<div class="a" style="left:555.54px;top:565.50px;width:25.16px;height:19.02px;background:#fdfdfd"></div>
<div class="txt" style="left:557.64px;top:568.90px;font-size:8.2px;line-height:1;color:#5c5c5c;">T</div>
<div class="a" style="left:580.70px;top:565.50px;width:25.16px;height:19.02px;background:#fdfdfd"></div>
<div class="txt" style="left:582.80px;top:568.90px;font-size:8.2px;line-height:1;color:#5c5c5c;">W</div>
<div class="a" style="left:605.86px;top:565.50px;width:25.16px;height:19.02px;background:#fdfdfd"></div>
<div class="txt" style="left:607.96px;top:568.90px;font-size:8.2px;line-height:1;color:#5c5c5c;">T</div>
<div class="a" style="left:631.02px;top:565.50px;width:25.16px;height:19.02px;background:#fdfdfd"></div>
<div class="txt" style="left:633.12px;top:568.90px;font-size:8.2px;line-height:1;color:#5c5c5c;">F</div>
<div class="a" style="left:656.18px;top:565.50px;width:25.16px;height:19.02px;background:#e9e9ea"></div>
<div class="txt" style="left:658.28px;top:568.90px;font-size:8.2px;line-height:1;color:#5c5c5c;">S</div>
<div class="a" style="left:681.34px;top:565.50px;width:25.16px;height:19.02px;background:#e9e9ea"></div>
<div class="txt" style="left:683.44px;top:568.90px;font-size:8.2px;line-height:1;color:#5c5c5c;">S</div>
<div class="a" style="left:706.50px;top:565.50px;width:25.16px;height:19.02px;background:#fdfdfd"></div>
<div class="txt" style="left:708.60px;top:568.90px;font-size:8.2px;line-height:1;color:#5c5c5c;">M</div>
<div class="a" style="left:731.66px;top:565.50px;width:25.16px;height:19.02px;background:#fdfdfd"></div>
<div class="txt" style="left:733.76px;top:568.90px;font-size:8.2px;line-height:1;color:#5c5c5c;">T</div>
<div class="a" style="left:756.82px;top:565.50px;width:25.16px;height:19.02px;background:#fdfdfd"></div>
<div class="txt" style="left:758.92px;top:568.90px;font-size:8.2px;line-height:1;color:#5c5c5c;">W</div>
<div class="a" style="left:781.98px;top:565.50px;width:25.16px;height:19.02px;background:#fdfdfd"></div>
<div class="txt" style="left:784.08px;top:568.90px;font-size:8.2px;line-height:1;color:#5c5c5c;">T</div>
<div class="a" style="left:807.14px;top:565.50px;width:25.16px;height:19.02px;background:#fdfdfd"></div>
<div class="txt" style="left:809.24px;top:568.90px;font-size:8.2px;line-height:1;color:#5c5c5c;">F</div>
<div class="a" style="left:832.30px;top:565.50px;width:25.16px;height:19.02px;background:#e9e9ea"></div>
<div class="txt" style="left:834.40px;top:568.90px;font-size:8.2px;line-height:1;color:#5c5c5c;">S</div>
<div class="a" style="left:857.46px;top:565.50px;width:25.16px;height:19.02px;background:#e9e9ea"></div>
<div class="txt" style="left:859.56px;top:568.90px;font-size:8.2px;line-height:1;color:#5c5c5c;">S</div>
<div class="a" style="left:882.62px;top:565.50px;width:25.16px;height:19.02px;background:#fdfdfd"></div>
<div class="txt" style="left:884.72px;top:568.90px;font-size:8.2px;line-height:1;color:#5c5c5c;">M</div>
<div class="a" style="left:907.78px;top:565.50px;width:25.16px;height:19.02px;background:#fdfdfd"></div>
<div class="txt" style="left:909.88px;top:568.90px;font-size:8.2px;line-height:1;color:#5c5c5c;">T</div>
<div class="a" style="left:932.94px;top:565.50px;width:25.16px;height:19.02px;background:#fdfdfd"></div>
<div class="txt" style="left:935.04px;top:568.90px;font-size:8.2px;line-height:1;color:#5c5c5c;">W</div>
<div class="txt" style="left:-101.69999999999999px;top:588.98px;width:300px;text-align:right;font-size:11.5px;line-height:1;color:#474849;letter-spacing:0px;">July</div>
<div class="a" style="left:203.30px;top:584.52px;width:25.16px;height:19.02px;background:#fdfdfd"></div>
<div class="txt" style="left:205.40px;top:587.92px;font-size:8.2px;line-height:1;color:#5c5c5c;">T</div>
<div class="a" style="left:228.46px;top:584.52px;width:25.16px;height:19.02px;background:#fdfdfd"></div>
<div class="txt" style="left:230.56px;top:587.92px;font-size:8.2px;line-height:1;color:#5c5c5c;">F</div>
<div class="a" style="left:253.62px;top:584.52px;width:25.16px;height:19.02px;background:#e9e9ea"></div>
<div class="txt" style="left:255.72px;top:587.92px;font-size:8.2px;line-height:1;color:#5c5c5c;">S</div>
<div class="a" style="left:278.78px;top:584.52px;width:25.16px;height:19.02px;background:#e9e9ea"></div>
<div class="txt" style="left:280.88px;top:587.92px;font-size:8.2px;line-height:1;color:#5c5c5c;">S</div>
<div class="a" style="left:303.94px;top:584.52px;width:25.16px;height:19.02px;background:#fdfdfd"></div>
<div class="txt" style="left:306.04px;top:587.92px;font-size:8.2px;line-height:1;color:#5c5c5c;">M</div>
<div class="a" style="left:329.10px;top:584.52px;width:25.16px;height:19.02px;background:#fdfdfd"></div>
<div class="txt" style="left:331.20px;top:587.92px;font-size:8.2px;line-height:1;color:#5c5c5c;">T</div>
<div class="a" style="left:354.26px;top:584.52px;width:25.16px;height:19.02px;background:#fdfdfd"></div>
<div class="txt" style="left:356.36px;top:587.92px;font-size:8.2px;line-height:1;color:#5c5c5c;">W</div>
<div class="a" style="left:379.42px;top:584.52px;width:25.16px;height:19.02px;background:#fdfdfd"></div>
<div class="txt" style="left:381.52px;top:587.92px;font-size:8.2px;line-height:1;color:#5c5c5c;">T</div>
<div class="a" style="left:404.58px;top:584.52px;width:25.16px;height:19.02px;background:#fdfdfd"></div>
<div class="txt" style="left:406.68px;top:587.92px;font-size:8.2px;line-height:1;color:#5c5c5c;">F</div>
<div class="a" style="left:429.74px;top:584.52px;width:25.16px;height:19.02px;background:#e9e9ea"></div>
<div class="txt" style="left:431.84px;top:587.92px;font-size:8.2px;line-height:1;color:#5c5c5c;">S</div>
<div class="a" style="left:454.90px;top:584.52px;width:25.16px;height:19.02px;background:#e9e9ea"></div>
<div class="txt" style="left:457.00px;top:587.92px;font-size:8.2px;line-height:1;color:#5c5c5c;">S</div>
<div class="a" style="left:480.06px;top:584.52px;width:25.16px;height:19.02px;background:#fdfdfd"></div>
<div class="txt" style="left:482.16px;top:587.92px;font-size:8.2px;line-height:1;color:#5c5c5c;">M</div>
<div class="a" style="left:505.22px;top:584.52px;width:25.16px;height:19.02px;background:#fdfdfd"></div>
<div class="txt" style="left:507.32px;top:587.92px;font-size:8.2px;line-height:1;color:#5c5c5c;">T</div>
<div class="a" style="left:530.38px;top:584.52px;width:25.16px;height:19.02px;background:#fdfdfd"></div>
<div class="txt" style="left:532.48px;top:587.92px;font-size:8.2px;line-height:1;color:#5c5c5c;">W</div>
<div class="a" style="left:555.54px;top:584.52px;width:25.16px;height:19.02px;background:#fdfdfd"></div>
<div class="txt" style="left:557.64px;top:587.92px;font-size:8.2px;line-height:1;color:#5c5c5c;">T</div>
<div class="a" style="left:580.70px;top:584.52px;width:25.16px;height:19.02px;background:#fdfdfd"></div>
<div class="txt" style="left:582.80px;top:587.92px;font-size:8.2px;line-height:1;color:#5c5c5c;">F</div>
<div class="a" style="left:605.86px;top:584.52px;width:25.16px;height:19.02px;background:#e9e9ea"></div>
<div class="txt" style="left:607.96px;top:587.92px;font-size:8.2px;line-height:1;color:#5c5c5c;">S</div>
<div class="a" style="left:631.02px;top:584.52px;width:25.16px;height:19.02px;background:#e9e9ea"></div>
<div class="txt" style="left:633.12px;top:587.92px;font-size:8.2px;line-height:1;color:#5c5c5c;">S</div>
<div class="a" style="left:656.18px;top:584.52px;width:25.16px;height:19.02px;background:#fdfdfd"></div>
<div class="txt" style="left:658.28px;top:587.92px;font-size:8.2px;line-height:1;color:#5c5c5c;">M</div>
<div class="a" style="left:681.34px;top:584.52px;width:25.16px;height:19.02px;background:#fdfdfd"></div>
<div class="txt" style="left:683.44px;top:587.92px;font-size:8.2px;line-height:1;color:#5c5c5c;">T</div>
<div class="a" style="left:706.50px;top:584.52px;width:25.16px;height:19.02px;background:#fdfdfd"></div>
<div class="txt" style="left:708.60px;top:587.92px;font-size:8.2px;line-height:1;color:#5c5c5c;">W</div>
<div class="a" style="left:731.66px;top:584.52px;width:25.16px;height:19.02px;background:#fdfdfd"></div>
<div class="txt" style="left:733.76px;top:587.92px;font-size:8.2px;line-height:1;color:#5c5c5c;">T</div>
<div class="a" style="left:756.82px;top:584.52px;width:25.16px;height:19.02px;background:#fdfdfd"></div>
<div class="txt" style="left:758.92px;top:587.92px;font-size:8.2px;line-height:1;color:#5c5c5c;">F</div>
<div class="a" style="left:781.98px;top:584.52px;width:25.16px;height:19.02px;background:#e9e9ea"></div>
<div class="txt" style="left:784.08px;top:587.92px;font-size:8.2px;line-height:1;color:#5c5c5c;">S</div>
<div class="a" style="left:807.14px;top:584.52px;width:25.16px;height:19.02px;background:#e9e9ea"></div>
<div class="txt" style="left:809.24px;top:587.92px;font-size:8.2px;line-height:1;color:#5c5c5c;">S</div>
<div class="a" style="left:832.30px;top:584.52px;width:25.16px;height:19.02px;background:#fdfdfd"></div>
<div class="txt" style="left:834.40px;top:587.92px;font-size:8.2px;line-height:1;color:#5c5c5c;">M</div>
<div class="a" style="left:857.46px;top:584.52px;width:25.16px;height:19.02px;background:#fdfdfd"></div>
<div class="txt" style="left:859.56px;top:587.92px;font-size:8.2px;line-height:1;color:#5c5c5c;">T</div>
<div class="a" style="left:882.62px;top:584.52px;width:25.16px;height:19.02px;background:#fdfdfd"></div>
<div class="txt" style="left:884.72px;top:587.92px;font-size:8.2px;line-height:1;color:#5c5c5c;">W</div>
<div class="a" style="left:907.78px;top:584.52px;width:25.16px;height:19.02px;background:#fdfdfd"></div>
<div class="txt" style="left:909.88px;top:587.92px;font-size:8.2px;line-height:1;color:#5c5c5c;">T</div>
<div class="a" style="left:932.94px;top:584.52px;width:25.16px;height:19.02px;background:#fdfdfd"></div>
<div class="txt" style="left:935.04px;top:587.92px;font-size:8.2px;line-height:1;color:#5c5c5c;">F</div>
<div class="a" style="left:958.10px;top:584.52px;width:25.16px;height:19.02px;background:#e9e9ea"></div>
<div class="txt" style="left:960.20px;top:587.92px;font-size:8.2px;line-height:1;color:#5c5c5c;">S</div>
<div class="txt" style="left:-101.69999999999999px;top:608.00px;width:300px;text-align:right;font-size:11.5px;line-height:1;color:#474849;letter-spacing:0px;">August</div>
<div class="a" style="left:203.30px;top:603.54px;width:25.16px;height:19.02px;background:#e9e9ea"></div>
<div class="txt" style="left:205.40px;top:606.94px;font-size:8.2px;line-height:1;color:#5c5c5c;">S</div>
<div class="a" style="left:228.46px;top:603.54px;width:25.16px;height:19.02px;background:#fdfdfd"></div>
<div class="txt" style="left:230.56px;top:606.94px;font-size:8.2px;line-height:1;color:#5c5c5c;">M</div>
<div class="a" style="left:253.62px;top:603.54px;width:25.16px;height:19.02px;background:#fdfdfd"></div>
<div class="txt" style="left:255.72px;top:606.94px;font-size:8.2px;line-height:1;color:#5c5c5c;">T</div>
<div class="a" style="left:278.78px;top:603.54px;width:25.16px;height:19.02px;background:#fdfdfd"></div>
<div class="txt" style="left:280.88px;top:606.94px;font-size:8.2px;line-height:1;color:#5c5c5c;">W</div>
<div class="a" style="left:303.94px;top:603.54px;width:25.16px;height:19.02px;background:#fdfdfd"></div>
<div class="txt" style="left:306.04px;top:606.94px;font-size:8.2px;line-height:1;color:#5c5c5c;">T</div>
<div class="a" style="left:329.10px;top:603.54px;width:25.16px;height:19.02px;background:#fdfdfd"></div>
<div class="txt" style="left:331.20px;top:606.94px;font-size:8.2px;line-height:1;color:#5c5c5c;">F</div>
<div class="a" style="left:354.26px;top:603.54px;width:25.16px;height:19.02px;background:#e9e9ea"></div>
<div class="txt" style="left:356.36px;top:606.94px;font-size:8.2px;line-height:1;color:#5c5c5c;">S</div>
<div class="a" style="left:379.42px;top:603.54px;width:25.16px;height:19.02px;background:#e9e9ea"></div>
<div class="txt" style="left:381.52px;top:606.94px;font-size:8.2px;line-height:1;color:#5c5c5c;">S</div>
<div class="a" style="left:404.58px;top:603.54px;width:25.16px;height:19.02px;background:#fdfdfd"></div>
<div class="txt" style="left:406.68px;top:606.94px;font-size:8.2px;line-height:1;color:#5c5c5c;">M</div>
<div class="a" style="left:429.74px;top:603.54px;width:25.16px;height:19.02px;background:#fdfdfd"></div>
<div class="txt" style="left:431.84px;top:606.94px;font-size:8.2px;line-height:1;color:#5c5c5c;">T</div>
<div class="a" style="left:454.90px;top:603.54px;width:25.16px;height:19.02px;background:#fdfdfd"></div>
<div class="txt" style="left:457.00px;top:606.94px;font-size:8.2px;line-height:1;color:#5c5c5c;">W</div>
<div class="a" style="left:480.06px;top:603.54px;width:25.16px;height:19.02px;background:#fdfdfd"></div>
<div class="txt" style="left:482.16px;top:606.94px;font-size:8.2px;line-height:1;color:#5c5c5c;">T</div>
<div class="a" style="left:505.22px;top:603.54px;width:25.16px;height:19.02px;background:#fdfdfd"></div>
<div class="txt" style="left:507.32px;top:606.94px;font-size:8.2px;line-height:1;color:#5c5c5c;">F</div>
<div class="a" style="left:530.38px;top:603.54px;width:25.16px;height:19.02px;background:#e9e9ea"></div>
<div class="txt" style="left:532.48px;top:606.94px;font-size:8.2px;line-height:1;color:#5c5c5c;">S</div>
<div class="a" style="left:555.54px;top:603.54px;width:25.16px;height:19.02px;background:#e9e9ea"></div>
<div class="txt" style="left:557.64px;top:606.94px;font-size:8.2px;line-height:1;color:#5c5c5c;">S</div>
<div class="a" style="left:580.70px;top:603.54px;width:25.16px;height:19.02px;background:#fdfdfd"></div>
<div class="txt" style="left:582.80px;top:606.94px;font-size:8.2px;line-height:1;color:#5c5c5c;">M</div>
<div class="a" style="left:605.86px;top:603.54px;width:25.16px;height:19.02px;background:#fdfdfd"></div>
<div class="txt" style="left:607.96px;top:606.94px;font-size:8.2px;line-height:1;color:#5c5c5c;">T</div>
<div class="a" style="left:631.02px;top:603.54px;width:25.16px;height:19.02px;background:#fdfdfd"></div>
<div class="txt" style="left:633.12px;top:606.94px;font-size:8.2px;line-height:1;color:#5c5c5c;">W</div>
<div class="a" style="left:656.18px;top:603.54px;width:25.16px;height:19.02px;background:#fdfdfd"></div>
<div class="txt" style="left:658.28px;top:606.94px;font-size:8.2px;line-height:1;color:#5c5c5c;">T</div>
<div class="a" style="left:681.34px;top:603.54px;width:25.16px;height:19.02px;background:#fdfdfd"></div>
<div class="txt" style="left:683.44px;top:606.94px;font-size:8.2px;line-height:1;color:#5c5c5c;">F</div>
<div class="a" style="left:706.50px;top:603.54px;width:25.16px;height:19.02px;background:#e9e9ea"></div>
<div class="txt" style="left:708.60px;top:606.94px;font-size:8.2px;line-height:1;color:#5c5c5c;">S</div>
<div class="a" style="left:731.66px;top:603.54px;width:25.16px;height:19.02px;background:#e9e9ea"></div>
<div class="txt" style="left:733.76px;top:606.94px;font-size:8.2px;line-height:1;color:#5c5c5c;">S</div>
<div class="a" style="left:756.82px;top:603.54px;width:25.16px;height:19.02px;background:#fdfdfd"></div>
<div class="txt" style="left:758.92px;top:606.94px;font-size:8.2px;line-height:1;color:#5c5c5c;">M</div>
<div class="a" style="left:781.98px;top:603.54px;width:25.16px;height:19.02px;background:#fdfdfd"></div>
<div class="txt" style="left:784.08px;top:606.94px;font-size:8.2px;line-height:1;color:#5c5c5c;">T</div>
<div class="a" style="left:807.14px;top:603.54px;width:25.16px;height:19.02px;background:#fdfdfd"></div>
<div class="txt" style="left:809.24px;top:606.94px;font-size:8.2px;line-height:1;color:#5c5c5c;">W</div>
<div class="a" style="left:832.30px;top:603.54px;width:25.16px;height:19.02px;background:#fdfdfd"></div>
<div class="txt" style="left:834.40px;top:606.94px;font-size:8.2px;line-height:1;color:#5c5c5c;">T</div>
<div class="a" style="left:857.46px;top:603.54px;width:25.16px;height:19.02px;background:#fdfdfd"></div>
<div class="txt" style="left:859.56px;top:606.94px;font-size:8.2px;line-height:1;color:#5c5c5c;">F</div>
<div class="a" style="left:882.62px;top:603.54px;width:25.16px;height:19.02px;background:#e9e9ea"></div>
<div class="txt" style="left:884.72px;top:606.94px;font-size:8.2px;line-height:1;color:#5c5c5c;">S</div>
<div class="a" style="left:907.78px;top:603.54px;width:25.16px;height:19.02px;background:#e9e9ea"></div>
<div class="txt" style="left:909.88px;top:606.94px;font-size:8.2px;line-height:1;color:#5c5c5c;">S</div>
<div class="a" style="left:932.94px;top:603.54px;width:25.16px;height:19.02px;background:#fdfdfd"></div>
<div class="txt" style="left:935.04px;top:606.94px;font-size:8.2px;line-height:1;color:#5c5c5c;">M</div>
<div class="a" style="left:958.10px;top:603.54px;width:25.16px;height:19.02px;background:#fdfdfd"></div>
<div class="txt" style="left:960.20px;top:606.94px;font-size:8.2px;line-height:1;color:#5c5c5c;">T</div>
<div class="txt" style="left:-101.69999999999999px;top:627.02px;width:300px;text-align:right;font-size:11.5px;line-height:1;color:#474849;letter-spacing:0px;">September</div>
<div class="a" style="left:203.30px;top:622.56px;width:25.16px;height:19.02px;background:#fdfdfd"></div>
<div class="txt" style="left:205.40px;top:625.96px;font-size:8.2px;line-height:1;color:#5c5c5c;">W</div>
<div class="a" style="left:228.46px;top:622.56px;width:25.16px;height:19.02px;background:#fdfdfd"></div>
<div class="txt" style="left:230.56px;top:625.96px;font-size:8.2px;line-height:1;color:#5c5c5c;">T</div>
<div class="a" style="left:253.62px;top:622.56px;width:25.16px;height:19.02px;background:#fdfdfd"></div>
<div class="txt" style="left:255.72px;top:625.96px;font-size:8.2px;line-height:1;color:#5c5c5c;">F</div>
<div class="a" style="left:278.78px;top:622.56px;width:25.16px;height:19.02px;background:#e9e9ea"></div>
<div class="txt" style="left:280.88px;top:625.96px;font-size:8.2px;line-height:1;color:#5c5c5c;">S</div>
<div class="a" style="left:303.94px;top:622.56px;width:25.16px;height:19.02px;background:#e9e9ea"></div>
<div class="txt" style="left:306.04px;top:625.96px;font-size:8.2px;line-height:1;color:#5c5c5c;">S</div>
<div class="a" style="left:329.10px;top:622.56px;width:25.16px;height:19.02px;background:#fdfdfd"></div>
<div class="txt" style="left:331.20px;top:625.96px;font-size:8.2px;line-height:1;color:#5c5c5c;">M</div>
<div class="a" style="left:354.26px;top:622.56px;width:25.16px;height:19.02px;background:#fdfdfd"></div>
<div class="txt" style="left:356.36px;top:625.96px;font-size:8.2px;line-height:1;color:#5c5c5c;">T</div>
<div class="a" style="left:379.42px;top:622.56px;width:25.16px;height:19.02px;background:#fdfdfd"></div>
<div class="txt" style="left:381.52px;top:625.96px;font-size:8.2px;line-height:1;color:#5c5c5c;">W</div>
<div class="a" style="left:404.58px;top:622.56px;width:25.16px;height:19.02px;background:#fdfdfd"></div>
<div class="txt" style="left:406.68px;top:625.96px;font-size:8.2px;line-height:1;color:#5c5c5c;">T</div>
<div class="a" style="left:429.74px;top:622.56px;width:25.16px;height:19.02px;background:#fdfdfd"></div>
<div class="txt" style="left:431.84px;top:625.96px;font-size:8.2px;line-height:1;color:#5c5c5c;">F</div>
<div class="a" style="left:454.90px;top:622.56px;width:25.16px;height:19.02px;background:#e9e9ea"></div>
<div class="txt" style="left:457.00px;top:625.96px;font-size:8.2px;line-height:1;color:#5c5c5c;">S</div>
<div class="a" style="left:480.06px;top:622.56px;width:25.16px;height:19.02px;background:#e9e9ea"></div>
<div class="txt" style="left:482.16px;top:625.96px;font-size:8.2px;line-height:1;color:#5c5c5c;">S</div>
<div class="a" style="left:505.22px;top:622.56px;width:25.16px;height:19.02px;background:#fdfdfd"></div>
<div class="txt" style="left:507.32px;top:625.96px;font-size:8.2px;line-height:1;color:#5c5c5c;">M</div>
<div class="a" style="left:530.38px;top:622.56px;width:25.16px;height:19.02px;background:#fdfdfd"></div>
<div class="txt" style="left:532.48px;top:625.96px;font-size:8.2px;line-height:1;color:#5c5c5c;">T</div>
<div class="a" style="left:555.54px;top:622.56px;width:25.16px;height:19.02px;background:#fdfdfd"></div>
<div class="txt" style="left:557.64px;top:625.96px;font-size:8.2px;line-height:1;color:#5c5c5c;">W</div>
<div class="a" style="left:580.70px;top:622.56px;width:25.16px;height:19.02px;background:#fdfdfd"></div>
<div class="txt" style="left:582.80px;top:625.96px;font-size:8.2px;line-height:1;color:#5c5c5c;">T</div>
<div class="a" style="left:605.86px;top:622.56px;width:25.16px;height:19.02px;background:#fdfdfd"></div>
<div class="txt" style="left:607.96px;top:625.96px;font-size:8.2px;line-height:1;color:#5c5c5c;">F</div>
<div class="a" style="left:631.02px;top:622.56px;width:25.16px;height:19.02px;background:#e9e9ea"></div>
<div class="txt" style="left:633.12px;top:625.96px;font-size:8.2px;line-height:1;color:#5c5c5c;">S</div>
<div class="a" style="left:656.18px;top:622.56px;width:25.16px;height:19.02px;background:#e9e9ea"></div>
<div class="txt" style="left:658.28px;top:625.96px;font-size:8.2px;line-height:1;color:#5c5c5c;">S</div>
<div class="a" style="left:681.34px;top:622.56px;width:25.16px;height:19.02px;background:#fdfdfd"></div>
<div class="txt" style="left:683.44px;top:625.96px;font-size:8.2px;line-height:1;color:#5c5c5c;">M</div>
<div class="a" style="left:706.50px;top:622.56px;width:25.16px;height:19.02px;background:#fdfdfd"></div>
<div class="txt" style="left:708.60px;top:625.96px;font-size:8.2px;line-height:1;color:#5c5c5c;">T</div>
<div class="a" style="left:731.66px;top:622.56px;width:25.16px;height:19.02px;background:#fdfdfd"></div>
<div class="txt" style="left:733.76px;top:625.96px;font-size:8.2px;line-height:1;color:#5c5c5c;">W</div>
<div class="a" style="left:756.82px;top:622.56px;width:25.16px;height:19.02px;background:#fdfdfd"></div>
<div class="txt" style="left:758.92px;top:625.96px;font-size:8.2px;line-height:1;color:#5c5c5c;">T</div>
<div class="a" style="left:781.98px;top:622.56px;width:25.16px;height:19.02px;background:#fdfdfd"></div>
<div class="txt" style="left:784.08px;top:625.96px;font-size:8.2px;line-height:1;color:#5c5c5c;">F</div>
<div class="a" style="left:807.14px;top:622.56px;width:25.16px;height:19.02px;background:#e9e9ea"></div>
<div class="txt" style="left:809.24px;top:625.96px;font-size:8.2px;line-height:1;color:#5c5c5c;">S</div>
<div class="a" style="left:832.30px;top:622.56px;width:25.16px;height:19.02px;background:#e9e9ea"></div>
<div class="txt" style="left:834.40px;top:625.96px;font-size:8.2px;line-height:1;color:#5c5c5c;">S</div>
<div class="a" style="left:857.46px;top:622.56px;width:25.16px;height:19.02px;background:#fdfdfd"></div>
<div class="txt" style="left:859.56px;top:625.96px;font-size:8.2px;line-height:1;color:#5c5c5c;">M</div>
<div class="a" style="left:882.62px;top:622.56px;width:25.16px;height:19.02px;background:#fdfdfd"></div>
<div class="txt" style="left:884.72px;top:625.96px;font-size:8.2px;line-height:1;color:#5c5c5c;">T</div>
<div class="a" style="left:907.78px;top:622.56px;width:25.16px;height:19.02px;background:#fdfdfd"></div>
<div class="txt" style="left:909.88px;top:625.96px;font-size:8.2px;line-height:1;color:#5c5c5c;">W</div>
<div class="a" style="left:932.94px;top:622.56px;width:25.16px;height:19.02px;background:#fdfdfd"></div>
<div class="txt" style="left:935.04px;top:625.96px;font-size:8.2px;line-height:1;color:#5c5c5c;">T</div>
<div class="txt" style="left:-101.69999999999999px;top:646.04px;width:300px;text-align:right;font-size:11.5px;line-height:1;color:#474849;letter-spacing:0px;">October</div>
<div class="a" style="left:203.30px;top:641.58px;width:25.16px;height:19.02px;background:#fdfdfd"></div>
<div class="txt" style="left:205.40px;top:644.98px;font-size:8.2px;line-height:1;color:#5c5c5c;">F</div>
<div class="a" style="left:228.46px;top:641.58px;width:25.16px;height:19.02px;background:#e9e9ea"></div>
<div class="txt" style="left:230.56px;top:644.98px;font-size:8.2px;line-height:1;color:#5c5c5c;">S</div>
<div class="a" style="left:253.62px;top:641.58px;width:25.16px;height:19.02px;background:#e9e9ea"></div>
<div class="txt" style="left:255.72px;top:644.98px;font-size:8.2px;line-height:1;color:#5c5c5c;">S</div>
<div class="a" style="left:278.78px;top:641.58px;width:25.16px;height:19.02px;background:#fdfdfd"></div>
<div class="txt" style="left:280.88px;top:644.98px;font-size:8.2px;line-height:1;color:#5c5c5c;">M</div>
<div class="a" style="left:303.94px;top:641.58px;width:25.16px;height:19.02px;background:#fdfdfd"></div>
<div class="txt" style="left:306.04px;top:644.98px;font-size:8.2px;line-height:1;color:#5c5c5c;">T</div>
<div class="a" style="left:329.10px;top:641.58px;width:25.16px;height:19.02px;background:#fdfdfd"></div>
<div class="txt" style="left:331.20px;top:644.98px;font-size:8.2px;line-height:1;color:#5c5c5c;">W</div>
<div class="a" style="left:354.26px;top:641.58px;width:25.16px;height:19.02px;background:#fdfdfd"></div>
<div class="txt" style="left:356.36px;top:644.98px;font-size:8.2px;line-height:1;color:#5c5c5c;">T</div>
<div class="a" style="left:379.42px;top:641.58px;width:25.16px;height:19.02px;background:#fdfdfd"></div>
<div class="txt" style="left:381.52px;top:644.98px;font-size:8.2px;line-height:1;color:#5c5c5c;">F</div>
<div class="a" style="left:404.58px;top:641.58px;width:25.16px;height:19.02px;background:#e9e9ea"></div>
<div class="txt" style="left:406.68px;top:644.98px;font-size:8.2px;line-height:1;color:#5c5c5c;">S</div>
<div class="a" style="left:429.74px;top:641.58px;width:25.16px;height:19.02px;background:#e9e9ea"></div>
<div class="txt" style="left:431.84px;top:644.98px;font-size:8.2px;line-height:1;color:#5c5c5c;">S</div>
<div class="a" style="left:454.90px;top:641.58px;width:25.16px;height:19.02px;background:#fdfdfd"></div>
<div class="txt" style="left:457.00px;top:644.98px;font-size:8.2px;line-height:1;color:#5c5c5c;">M</div>
<div class="a" style="left:480.06px;top:641.58px;width:25.16px;height:19.02px;background:#fdfdfd"></div>
<div class="txt" style="left:482.16px;top:644.98px;font-size:8.2px;line-height:1;color:#5c5c5c;">T</div>
<div class="a" style="left:505.22px;top:641.58px;width:25.16px;height:19.02px;background:#fdfdfd"></div>
<div class="txt" style="left:507.32px;top:644.98px;font-size:8.2px;line-height:1;color:#5c5c5c;">W</div>
<div class="a" style="left:530.38px;top:641.58px;width:25.16px;height:19.02px;background:#fdfdfd"></div>
<div class="txt" style="left:532.48px;top:644.98px;font-size:8.2px;line-height:1;color:#5c5c5c;">T</div>
<div class="a" style="left:555.54px;top:641.58px;width:25.16px;height:19.02px;background:#fdfdfd"></div>
<div class="txt" style="left:557.64px;top:644.98px;font-size:8.2px;line-height:1;color:#5c5c5c;">F</div>
<div class="a" style="left:580.70px;top:641.58px;width:25.16px;height:19.02px;background:#e9e9ea"></div>
<div class="txt" style="left:582.80px;top:644.98px;font-size:8.2px;line-height:1;color:#5c5c5c;">S</div>
<div class="a" style="left:605.86px;top:641.58px;width:25.16px;height:19.02px;background:#e9e9ea"></div>
<div class="txt" style="left:607.96px;top:644.98px;font-size:8.2px;line-height:1;color:#5c5c5c;">S</div>
<div class="a" style="left:631.02px;top:641.58px;width:25.16px;height:19.02px;background:#fdfdfd"></div>
<div class="txt" style="left:633.12px;top:644.98px;font-size:8.2px;line-height:1;color:#5c5c5c;">M</div>
<div class="a" style="left:656.18px;top:641.58px;width:25.16px;height:19.02px;background:#fdfdfd"></div>
<div class="txt" style="left:658.28px;top:644.98px;font-size:8.2px;line-height:1;color:#5c5c5c;">T</div>
<div class="a" style="left:681.34px;top:641.58px;width:25.16px;height:19.02px;background:#fdfdfd"></div>
<div class="txt" style="left:683.44px;top:644.98px;font-size:8.2px;line-height:1;color:#5c5c5c;">W</div>
<div class="a" style="left:706.50px;top:641.58px;width:25.16px;height:19.02px;background:#fdfdfd"></div>
<div class="txt" style="left:708.60px;top:644.98px;font-size:8.2px;line-height:1;color:#5c5c5c;">T</div>
<div class="a" style="left:731.66px;top:641.58px;width:25.16px;height:19.02px;background:#fdfdfd"></div>
<div class="txt" style="left:733.76px;top:644.98px;font-size:8.2px;line-height:1;color:#5c5c5c;">F</div>
<div class="a" style="left:756.82px;top:641.58px;width:25.16px;height:19.02px;background:#e9e9ea"></div>
<div class="txt" style="left:758.92px;top:644.98px;font-size:8.2px;line-height:1;color:#5c5c5c;">S</div>
<div class="a" style="left:781.98px;top:641.58px;width:25.16px;height:19.02px;background:#e9e9ea"></div>
<div class="txt" style="left:784.08px;top:644.98px;font-size:8.2px;line-height:1;color:#5c5c5c;">S</div>
<div class="a" style="left:807.14px;top:641.58px;width:25.16px;height:19.02px;background:#fdfdfd"></div>
<div class="txt" style="left:809.24px;top:644.98px;font-size:8.2px;line-height:1;color:#5c5c5c;">M</div>
<div class="a" style="left:832.30px;top:641.58px;width:25.16px;height:19.02px;background:#fdfdfd"></div>
<div class="txt" style="left:834.40px;top:644.98px;font-size:8.2px;line-height:1;color:#5c5c5c;">T</div>
<div class="a" style="left:857.46px;top:641.58px;width:25.16px;height:19.02px;background:#fdfdfd"></div>
<div class="txt" style="left:859.56px;top:644.98px;font-size:8.2px;line-height:1;color:#5c5c5c;">W</div>
<div class="a" style="left:882.62px;top:641.58px;width:25.16px;height:19.02px;background:#fdfdfd"></div>
<div class="txt" style="left:884.72px;top:644.98px;font-size:8.2px;line-height:1;color:#5c5c5c;">T</div>
<div class="a" style="left:907.78px;top:641.58px;width:25.16px;height:19.02px;background:#fdfdfd"></div>
<div class="txt" style="left:909.88px;top:644.98px;font-size:8.2px;line-height:1;color:#5c5c5c;">F</div>
<div class="a" style="left:932.94px;top:641.58px;width:25.16px;height:19.02px;background:#e9e9ea"></div>
<div class="txt" style="left:935.04px;top:644.98px;font-size:8.2px;line-height:1;color:#5c5c5c;">S</div>
<div class="a" style="left:958.10px;top:641.58px;width:25.16px;height:19.02px;background:#e9e9ea"></div>
<div class="txt" style="left:960.20px;top:644.98px;font-size:8.2px;line-height:1;color:#5c5c5c;">S</div>
<div class="txt" style="left:-101.69999999999999px;top:665.06px;width:300px;text-align:right;font-size:11.5px;line-height:1;color:#474849;letter-spacing:0px;">November</div>
<div class="a" style="left:203.30px;top:660.60px;width:25.16px;height:19.02px;background:#fdfdfd"></div>
<div class="txt" style="left:205.40px;top:664.00px;font-size:8.2px;line-height:1;color:#5c5c5c;">M</div>
<div class="a" style="left:228.46px;top:660.60px;width:25.16px;height:19.02px;background:#fdfdfd"></div>
<div class="txt" style="left:230.56px;top:664.00px;font-size:8.2px;line-height:1;color:#5c5c5c;">T</div>
<div class="a" style="left:253.62px;top:660.60px;width:25.16px;height:19.02px;background:#fdfdfd"></div>
<div class="txt" style="left:255.72px;top:664.00px;font-size:8.2px;line-height:1;color:#5c5c5c;">W</div>
<div class="a" style="left:278.78px;top:660.60px;width:25.16px;height:19.02px;background:#fdfdfd"></div>
<div class="txt" style="left:280.88px;top:664.00px;font-size:8.2px;line-height:1;color:#5c5c5c;">T</div>
<div class="a" style="left:303.94px;top:660.60px;width:25.16px;height:19.02px;background:#fdfdfd"></div>
<div class="txt" style="left:306.04px;top:664.00px;font-size:8.2px;line-height:1;color:#5c5c5c;">F</div>
<div class="a" style="left:329.10px;top:660.60px;width:25.16px;height:19.02px;background:#e9e9ea"></div>
<div class="txt" style="left:331.20px;top:664.00px;font-size:8.2px;line-height:1;color:#5c5c5c;">S</div>
<div class="a" style="left:354.26px;top:660.60px;width:25.16px;height:19.02px;background:#e9e9ea"></div>
<div class="txt" style="left:356.36px;top:664.00px;font-size:8.2px;line-height:1;color:#5c5c5c;">S</div>
<div class="a" style="left:379.42px;top:660.60px;width:25.16px;height:19.02px;background:#fdfdfd"></div>
<div class="txt" style="left:381.52px;top:664.00px;font-size:8.2px;line-height:1;color:#5c5c5c;">M</div>
<div class="a" style="left:404.58px;top:660.60px;width:25.16px;height:19.02px;background:#fdfdfd"></div>
<div class="txt" style="left:406.68px;top:664.00px;font-size:8.2px;line-height:1;color:#5c5c5c;">T</div>
<div class="a" style="left:429.74px;top:660.60px;width:25.16px;height:19.02px;background:#fdfdfd"></div>
<div class="txt" style="left:431.84px;top:664.00px;font-size:8.2px;line-height:1;color:#5c5c5c;">W</div>
<div class="a" style="left:454.90px;top:660.60px;width:25.16px;height:19.02px;background:#fdfdfd"></div>
<div class="txt" style="left:457.00px;top:664.00px;font-size:8.2px;line-height:1;color:#5c5c5c;">T</div>
<div class="a" style="left:480.06px;top:660.60px;width:25.16px;height:19.02px;background:#fdfdfd"></div>
<div class="txt" style="left:482.16px;top:664.00px;font-size:8.2px;line-height:1;color:#5c5c5c;">F</div>
<div class="a" style="left:505.22px;top:660.60px;width:25.16px;height:19.02px;background:#e9e9ea"></div>
<div class="txt" style="left:507.32px;top:664.00px;font-size:8.2px;line-height:1;color:#5c5c5c;">S</div>
<div class="a" style="left:530.38px;top:660.60px;width:25.16px;height:19.02px;background:#e9e9ea"></div>
<div class="txt" style="left:532.48px;top:664.00px;font-size:8.2px;line-height:1;color:#5c5c5c;">S</div>
<div class="a" style="left:555.54px;top:660.60px;width:25.16px;height:19.02px;background:#fdfdfd"></div>
<div class="txt" style="left:557.64px;top:664.00px;font-size:8.2px;line-height:1;color:#5c5c5c;">M</div>
<div class="a" style="left:580.70px;top:660.60px;width:25.16px;height:19.02px;background:#fdfdfd"></div>
<div class="txt" style="left:582.80px;top:664.00px;font-size:8.2px;line-height:1;color:#5c5c5c;">T</div>
<div class="a" style="left:605.86px;top:660.60px;width:25.16px;height:19.02px;background:#fdfdfd"></div>
<div class="txt" style="left:607.96px;top:664.00px;font-size:8.2px;line-height:1;color:#5c5c5c;">W</div>
<div class="a" style="left:631.02px;top:660.60px;width:25.16px;height:19.02px;background:#fdfdfd"></div>
<div class="txt" style="left:633.12px;top:664.00px;font-size:8.2px;line-height:1;color:#5c5c5c;">T</div>
<div class="a" style="left:656.18px;top:660.60px;width:25.16px;height:19.02px;background:#fdfdfd"></div>
<div class="txt" style="left:658.28px;top:664.00px;font-size:8.2px;line-height:1;color:#5c5c5c;">F</div>
<div class="a" style="left:681.34px;top:660.60px;width:25.16px;height:19.02px;background:#e9e9ea"></div>
<div class="txt" style="left:683.44px;top:664.00px;font-size:8.2px;line-height:1;color:#5c5c5c;">S</div>
<div class="a" style="left:706.50px;top:660.60px;width:25.16px;height:19.02px;background:#e9e9ea"></div>
<div class="txt" style="left:708.60px;top:664.00px;font-size:8.2px;line-height:1;color:#5c5c5c;">S</div>
<div class="a" style="left:731.66px;top:660.60px;width:25.16px;height:19.02px;background:#fdfdfd"></div>
<div class="txt" style="left:733.76px;top:664.00px;font-size:8.2px;line-height:1;color:#5c5c5c;">M</div>
<div class="a" style="left:756.82px;top:660.60px;width:25.16px;height:19.02px;background:#fdfdfd"></div>
<div class="txt" style="left:758.92px;top:664.00px;font-size:8.2px;line-height:1;color:#5c5c5c;">T</div>
<div class="a" style="left:781.98px;top:660.60px;width:25.16px;height:19.02px;background:#fdfdfd"></div>
<div class="txt" style="left:784.08px;top:664.00px;font-size:8.2px;line-height:1;color:#5c5c5c;">W</div>
<div class="a" style="left:807.14px;top:660.60px;width:25.16px;height:19.02px;background:#fdfdfd"></div>
<div class="txt" style="left:809.24px;top:664.00px;font-size:8.2px;line-height:1;color:#5c5c5c;">T</div>
<div class="a" style="left:832.30px;top:660.60px;width:25.16px;height:19.02px;background:#fdfdfd"></div>
<div class="txt" style="left:834.40px;top:664.00px;font-size:8.2px;line-height:1;color:#5c5c5c;">F</div>
<div class="a" style="left:857.46px;top:660.60px;width:25.16px;height:19.02px;background:#e9e9ea"></div>
<div class="txt" style="left:859.56px;top:664.00px;font-size:8.2px;line-height:1;color:#5c5c5c;">S</div>
<div class="a" style="left:882.62px;top:660.60px;width:25.16px;height:19.02px;background:#e9e9ea"></div>
<div class="txt" style="left:884.72px;top:664.00px;font-size:8.2px;line-height:1;color:#5c5c5c;">S</div>
<div class="a" style="left:907.78px;top:660.60px;width:25.16px;height:19.02px;background:#fdfdfd"></div>
<div class="txt" style="left:909.88px;top:664.00px;font-size:8.2px;line-height:1;color:#5c5c5c;">M</div>
<div class="a" style="left:932.94px;top:660.60px;width:25.16px;height:19.02px;background:#fdfdfd"></div>
<div class="txt" style="left:935.04px;top:664.00px;font-size:8.2px;line-height:1;color:#5c5c5c;">T</div>
<div class="txt" style="left:-101.69999999999999px;top:684.08px;width:300px;text-align:right;font-size:11.5px;line-height:1;color:#474849;letter-spacing:0px;">December</div>
<div class="a" style="left:203.30px;top:679.62px;width:25.16px;height:19.02px;background:#fdfdfd"></div>
<div class="txt" style="left:205.40px;top:683.02px;font-size:8.2px;line-height:1;color:#5c5c5c;">W</div>
<div class="a" style="left:228.46px;top:679.62px;width:25.16px;height:19.02px;background:#fdfdfd"></div>
<div class="txt" style="left:230.56px;top:683.02px;font-size:8.2px;line-height:1;color:#5c5c5c;">T</div>
<div class="a" style="left:253.62px;top:679.62px;width:25.16px;height:19.02px;background:#fdfdfd"></div>
<div class="txt" style="left:255.72px;top:683.02px;font-size:8.2px;line-height:1;color:#5c5c5c;">F</div>
<div class="a" style="left:278.78px;top:679.62px;width:25.16px;height:19.02px;background:#e9e9ea"></div>
<div class="txt" style="left:280.88px;top:683.02px;font-size:8.2px;line-height:1;color:#5c5c5c;">S</div>
<div class="a" style="left:303.94px;top:679.62px;width:25.16px;height:19.02px;background:#e9e9ea"></div>
<div class="txt" style="left:306.04px;top:683.02px;font-size:8.2px;line-height:1;color:#5c5c5c;">S</div>
<div class="a" style="left:329.10px;top:679.62px;width:25.16px;height:19.02px;background:#fdfdfd"></div>
<div class="txt" style="left:331.20px;top:683.02px;font-size:8.2px;line-height:1;color:#5c5c5c;">M</div>
<div class="a" style="left:354.26px;top:679.62px;width:25.16px;height:19.02px;background:#fdfdfd"></div>
<div class="txt" style="left:356.36px;top:683.02px;font-size:8.2px;line-height:1;color:#5c5c5c;">T</div>
<div class="a" style="left:379.42px;top:679.62px;width:25.16px;height:19.02px;background:#fdfdfd"></div>
<div class="txt" style="left:381.52px;top:683.02px;font-size:8.2px;line-height:1;color:#5c5c5c;">W</div>
<div class="a" style="left:404.58px;top:679.62px;width:25.16px;height:19.02px;background:#fdfdfd"></div>
<div class="txt" style="left:406.68px;top:683.02px;font-size:8.2px;line-height:1;color:#5c5c5c;">T</div>
<div class="a" style="left:429.74px;top:679.62px;width:25.16px;height:19.02px;background:#fdfdfd"></div>
<div class="txt" style="left:431.84px;top:683.02px;font-size:8.2px;line-height:1;color:#5c5c5c;">F</div>
<div class="a" style="left:454.90px;top:679.62px;width:25.16px;height:19.02px;background:#e9e9ea"></div>
<div class="txt" style="left:457.00px;top:683.02px;font-size:8.2px;line-height:1;color:#5c5c5c;">S</div>
<div class="a" style="left:480.06px;top:679.62px;width:25.16px;height:19.02px;background:#e9e9ea"></div>
<div class="txt" style="left:482.16px;top:683.02px;font-size:8.2px;line-height:1;color:#5c5c5c;">S</div>
<div class="a" style="left:505.22px;top:679.62px;width:25.16px;height:19.02px;background:#fdfdfd"></div>
<div class="txt" style="left:507.32px;top:683.02px;font-size:8.2px;line-height:1;color:#5c5c5c;">M</div>
<div class="a" style="left:530.38px;top:679.62px;width:25.16px;height:19.02px;background:#fdfdfd"></div>
<div class="txt" style="left:532.48px;top:683.02px;font-size:8.2px;line-height:1;color:#5c5c5c;">T</div>
<div class="a" style="left:555.54px;top:679.62px;width:25.16px;height:19.02px;background:#fdfdfd"></div>
<div class="txt" style="left:557.64px;top:683.02px;font-size:8.2px;line-height:1;color:#5c5c5c;">W</div>
<div class="a" style="left:580.70px;top:679.62px;width:25.16px;height:19.02px;background:#fdfdfd"></div>
<div class="txt" style="left:582.80px;top:683.02px;font-size:8.2px;line-height:1;color:#5c5c5c;">T</div>
<div class="a" style="left:605.86px;top:679.62px;width:25.16px;height:19.02px;background:#fdfdfd"></div>
<div class="txt" style="left:607.96px;top:683.02px;font-size:8.2px;line-height:1;color:#5c5c5c;">F</div>
<div class="a" style="left:631.02px;top:679.62px;width:25.16px;height:19.02px;background:#e9e9ea"></div>
<div class="txt" style="left:633.12px;top:683.02px;font-size:8.2px;line-height:1;color:#5c5c5c;">S</div>
<div class="a" style="left:656.18px;top:679.62px;width:25.16px;height:19.02px;background:#e9e9ea"></div>
<div class="txt" style="left:658.28px;top:683.02px;font-size:8.2px;line-height:1;color:#5c5c5c;">S</div>
<div class="a" style="left:681.34px;top:679.62px;width:25.16px;height:19.02px;background:#fdfdfd"></div>
<div class="txt" style="left:683.44px;top:683.02px;font-size:8.2px;line-height:1;color:#5c5c5c;">M</div>
<div class="a" style="left:706.50px;top:679.62px;width:25.16px;height:19.02px;background:#fdfdfd"></div>
<div class="txt" style="left:708.60px;top:683.02px;font-size:8.2px;line-height:1;color:#5c5c5c;">T</div>
<div class="a" style="left:731.66px;top:679.62px;width:25.16px;height:19.02px;background:#fdfdfd"></div>
<div class="txt" style="left:733.76px;top:683.02px;font-size:8.2px;line-height:1;color:#5c5c5c;">W</div>
<div class="a" style="left:756.82px;top:679.62px;width:25.16px;height:19.02px;background:#fdfdfd"></div>
<div class="txt" style="left:758.92px;top:683.02px;font-size:8.2px;line-height:1;color:#5c5c5c;">T</div>
<div class="a" style="left:781.98px;top:679.62px;width:25.16px;height:19.02px;background:#fdfdfd"></div>
<div class="txt" style="left:784.08px;top:683.02px;font-size:8.2px;line-height:1;color:#5c5c5c;">F</div>
<div class="a" style="left:807.14px;top:679.62px;width:25.16px;height:19.02px;background:#e9e9ea"></div>
<div class="txt" style="left:809.24px;top:683.02px;font-size:8.2px;line-height:1;color:#5c5c5c;">S</div>
<div class="a" style="left:832.30px;top:679.62px;width:25.16px;height:19.02px;background:#e9e9ea"></div>
<div class="txt" style="left:834.40px;top:683.02px;font-size:8.2px;line-height:1;color:#5c5c5c;">S</div>
<div class="a" style="left:857.46px;top:679.62px;width:25.16px;height:19.02px;background:#fdfdfd"></div>
<div class="txt" style="left:859.56px;top:683.02px;font-size:8.2px;line-height:1;color:#5c5c5c;">M</div>
<div class="a" style="left:882.62px;top:679.62px;width:25.16px;height:19.02px;background:#fdfdfd"></div>
<div class="txt" style="left:884.72px;top:683.02px;font-size:8.2px;line-height:1;color:#5c5c5c;">T</div>
<div class="a" style="left:907.78px;top:679.62px;width:25.16px;height:19.02px;background:#fdfdfd"></div>
<div class="txt" style="left:909.88px;top:683.02px;font-size:8.2px;line-height:1;color:#5c5c5c;">W</div>
<div class="a" style="left:932.94px;top:679.62px;width:25.16px;height:19.02px;background:#fdfdfd"></div>
<div class="txt" style="left:935.04px;top:683.02px;font-size:8.2px;line-height:1;color:#5c5c5c;">T</div>
<div class="a" style="left:958.10px;top:679.62px;width:25.16px;height:19.02px;background:#fdfdfd"></div>
<div class="txt" style="left:960.20px;top:683.02px;font-size:8.2px;line-height:1;color:#5c5c5c;">F</div>
<div class="a" style="left:82.4px;top:469.3px;width:120.9px;height:1px;background:#9c9c9e"></div>
<div class="a" style="left:203.3px;top:469.3px;width:779.96px;height:1px;background:#b2b2b4"></div>
<div class="a" style="left:82.4px;top:488.91999999999996px;width:120.9px;height:1px;background:#9c9c9e"></div>
<div class="a" style="left:203.3px;top:488.91999999999996px;width:779.96px;height:1px;background:#b2b2b4"></div>
<div class="a" style="left:82.4px;top:507.94px;width:120.9px;height:1px;background:#9c9c9e"></div>
<div class="a" style="left:203.3px;top:507.94px;width:779.96px;height:1px;background:#b2b2b4"></div>
<div class="a" style="left:82.4px;top:526.96px;width:120.9px;height:1px;background:#9c9c9e"></div>
<div class="a" style="left:203.3px;top:526.96px;width:779.96px;height:1px;background:#b2b2b4"></div>
<div class="a" style="left:82.4px;top:545.98px;width:120.9px;height:1px;background:#9c9c9e"></div>
<div class="a" style="left:203.3px;top:545.98px;width:779.96px;height:1px;background:#b2b2b4"></div>
<div class="a" style="left:82.4px;top:565.0px;width:120.9px;height:1px;background:#9c9c9e"></div>
<div class="a" style="left:203.3px;top:565.0px;width:779.96px;height:1px;background:#b2b2b4"></div>
<div class="a" style="left:82.4px;top:584.02px;width:120.9px;height:1px;background:#9c9c9e"></div>
<div class="a" style="left:203.3px;top:584.02px;width:779.96px;height:1px;background:#b2b2b4"></div>
<div class="a" style="left:82.4px;top:603.04px;width:120.9px;height:1px;background:#9c9c9e"></div>
<div class="a" style="left:203.3px;top:603.04px;width:779.96px;height:1px;background:#b2b2b4"></div>
<div class="a" style="left:82.4px;top:622.06px;width:120.9px;height:1px;background:#9c9c9e"></div>
<div class="a" style="left:203.3px;top:622.06px;width:779.96px;height:1px;background:#b2b2b4"></div>
<div class="a" style="left:82.4px;top:641.0799999999999px;width:120.9px;height:1px;background:#9c9c9e"></div>
<div class="a" style="left:203.3px;top:641.0799999999999px;width:779.96px;height:1px;background:#b2b2b4"></div>
<div class="a" style="left:82.4px;top:660.0999999999999px;width:120.9px;height:1px;background:#9c9c9e"></div>
<div class="a" style="left:203.3px;top:660.0999999999999px;width:779.96px;height:1px;background:#b2b2b4"></div>
<div class="a" style="left:82.4px;top:679.12px;width:120.9px;height:1px;background:#9c9c9e"></div>
<div class="a" style="left:203.3px;top:679.12px;width:779.96px;height:1px;background:#b2b2b4"></div>
<div class="a" style="left:82.4px;top:698.14px;width:120.9px;height:1px;background:#9c9c9e"></div>
<div class="a" style="left:203.3px;top:698.14px;width:779.96px;height:1px;background:#b2b2b4"></div>
<div class="a" style="left:81.9px;top:451.2px;width:1px;height:247.44px;background:#9a9a9c"></div>
<div class="a" style="left:202.8px;top:451.2px;width:1px;height:247.44px;background:#8a8a8c"></div>
<div class="a" style="left:227.96px;top:451.2px;width:1px;height:19.19999999999999px;background:#9a9a9c"></div>
<div class="a" style="left:227.96px;top:470.4px;width:1px;height:19.02px;background:#b4b4b6"></div>
<div class="a" style="left:227.96px;top:489.41999999999996px;width:1px;height:19.02px;background:#b4b4b6"></div>
<div class="a" style="left:227.96px;top:508.44px;width:1px;height:19.02px;background:#b4b4b6"></div>
<div class="a" style="left:227.96px;top:527.46px;width:1px;height:19.02px;background:#b4b4b6"></div>
<div class="a" style="left:227.96px;top:546.48px;width:1px;height:19.02px;background:#b4b4b6"></div>
<div class="a" style="left:227.96px;top:565.5px;width:1px;height:19.02px;background:#b4b4b6"></div>
<div class="a" style="left:227.96px;top:584.52px;width:1px;height:19.02px;background:#b4b4b6"></div>
<div class="a" style="left:227.96px;top:603.54px;width:1px;height:19.02px;background:#b4b4b6"></div>
<div class="a" style="left:227.96px;top:622.56px;width:1px;height:19.02px;background:#b4b4b6"></div>
<div class="a" style="left:227.96px;top:641.5799999999999px;width:1px;height:19.02px;background:#b4b4b6"></div>
<div class="a" style="left:227.96px;top:660.5999999999999px;width:1px;height:19.02px;background:#b4b4b6"></div>
<div class="a" style="left:227.96px;top:679.62px;width:1px;height:19.02px;background:#b4b4b6"></div>
<div class="a" style="left:253.12px;top:451.2px;width:1px;height:19.19999999999999px;background:#9a9a9c"></div>
<div class="a" style="left:253.12px;top:470.4px;width:1px;height:19.02px;background:#b4b4b6"></div>
<div class="a" style="left:253.12px;top:489.41999999999996px;width:1px;height:19.02px;background:#b4b4b6"></div>
<div class="a" style="left:253.12px;top:508.44px;width:1px;height:19.02px;background:#b4b4b6"></div>
<div class="a" style="left:253.12px;top:527.46px;width:1px;height:19.02px;background:#b4b4b6"></div>
<div class="a" style="left:253.12px;top:546.48px;width:1px;height:19.02px;background:#b4b4b6"></div>
<div class="a" style="left:253.12px;top:565.5px;width:1px;height:19.02px;background:#b4b4b6"></div>
<div class="a" style="left:253.12px;top:584.52px;width:1px;height:19.02px;background:#b4b4b6"></div>
<div class="a" style="left:253.12px;top:603.54px;width:1px;height:19.02px;background:#b4b4b6"></div>
<div class="a" style="left:253.12px;top:622.56px;width:1px;height:19.02px;background:#b4b4b6"></div>
<div class="a" style="left:253.12px;top:641.5799999999999px;width:1px;height:19.02px;background:#b4b4b6"></div>
<div class="a" style="left:253.12px;top:660.5999999999999px;width:1px;height:19.02px;background:#b4b4b6"></div>
<div class="a" style="left:253.12px;top:679.62px;width:1px;height:19.02px;background:#b4b4b6"></div>
<div class="a" style="left:278.28000000000003px;top:451.2px;width:1px;height:19.19999999999999px;background:#9a9a9c"></div>
<div class="a" style="left:278.28000000000003px;top:470.4px;width:1px;height:19.02px;background:#b4b4b6"></div>
<div class="a" style="left:278.28000000000003px;top:489.41999999999996px;width:1px;height:19.02px;background:#b4b4b6"></div>
<div class="a" style="left:278.28000000000003px;top:508.44px;width:1px;height:19.02px;background:#b4b4b6"></div>
<div class="a" style="left:278.28000000000003px;top:527.46px;width:1px;height:19.02px;background:#b4b4b6"></div>
<div class="a" style="left:278.28000000000003px;top:546.48px;width:1px;height:19.02px;background:#b4b4b6"></div>
<div class="a" style="left:278.28000000000003px;top:565.5px;width:1px;height:19.02px;background:#b4b4b6"></div>
<div class="a" style="left:278.28000000000003px;top:584.52px;width:1px;height:19.02px;background:#b4b4b6"></div>
<div class="a" style="left:278.28000000000003px;top:603.54px;width:1px;height:19.02px;background:#b4b4b6"></div>
<div class="a" style="left:278.28000000000003px;top:622.56px;width:1px;height:19.02px;background:#b4b4b6"></div>
<div class="a" style="left:278.28000000000003px;top:641.5799999999999px;width:1px;height:19.02px;background:#b4b4b6"></div>
<div class="a" style="left:278.28000000000003px;top:660.5999999999999px;width:1px;height:19.02px;background:#b4b4b6"></div>
<div class="a" style="left:278.28000000000003px;top:679.62px;width:1px;height:19.02px;background:#b4b4b6"></div>
<div class="a" style="left:303.44px;top:451.2px;width:1px;height:19.19999999999999px;background:#9a9a9c"></div>
<div class="a" style="left:303.44px;top:470.4px;width:1px;height:19.02px;background:#b4b4b6"></div>
<div class="a" style="left:303.44px;top:489.41999999999996px;width:1px;height:19.02px;background:#b4b4b6"></div>
<div class="a" style="left:303.44px;top:508.44px;width:1px;height:19.02px;background:#b4b4b6"></div>
<div class="a" style="left:303.44px;top:527.46px;width:1px;height:19.02px;background:#b4b4b6"></div>
<div class="a" style="left:303.44px;top:546.48px;width:1px;height:19.02px;background:#b4b4b6"></div>
<div class="a" style="left:303.44px;top:565.5px;width:1px;height:19.02px;background:#b4b4b6"></div>
<div class="a" style="left:303.44px;top:584.52px;width:1px;height:19.02px;background:#b4b4b6"></div>
<div class="a" style="left:303.44px;top:603.54px;width:1px;height:19.02px;background:#b4b4b6"></div>
<div class="a" style="left:303.44px;top:622.56px;width:1px;height:19.02px;background:#b4b4b6"></div>
<div class="a" style="left:303.44px;top:641.5799999999999px;width:1px;height:19.02px;background:#b4b4b6"></div>
<div class="a" style="left:303.44px;top:660.5999999999999px;width:1px;height:19.02px;background:#b4b4b6"></div>
<div class="a" style="left:303.44px;top:679.62px;width:1px;height:19.02px;background:#b4b4b6"></div>
<div class="a" style="left:328.6px;top:451.2px;width:1px;height:19.19999999999999px;background:#9a9a9c"></div>
<div class="a" style="left:328.6px;top:470.4px;width:1px;height:19.02px;background:#b4b4b6"></div>
<div class="a" style="left:328.6px;top:489.41999999999996px;width:1px;height:19.02px;background:#b4b4b6"></div>
<div class="a" style="left:328.6px;top:508.44px;width:1px;height:19.02px;background:#b4b4b6"></div>
<div class="a" style="left:328.6px;top:527.46px;width:1px;height:19.02px;background:#b4b4b6"></div>
<div class="a" style="left:328.6px;top:546.48px;width:1px;height:19.02px;background:#b4b4b6"></div>
<div class="a" style="left:328.6px;top:565.5px;width:1px;height:19.02px;background:#b4b4b6"></div>
<div class="a" style="left:328.6px;top:584.52px;width:1px;height:19.02px;background:#b4b4b6"></div>
<div class="a" style="left:328.6px;top:603.54px;width:1px;height:19.02px;background:#b4b4b6"></div>
<div class="a" style="left:328.6px;top:622.56px;width:1px;height:19.02px;background:#b4b4b6"></div>
<div class="a" style="left:328.6px;top:641.5799999999999px;width:1px;height:19.02px;background:#b4b4b6"></div>
<div class="a" style="left:328.6px;top:660.5999999999999px;width:1px;height:19.02px;background:#b4b4b6"></div>
<div class="a" style="left:328.6px;top:679.62px;width:1px;height:19.02px;background:#b4b4b6"></div>
<div class="a" style="left:353.26px;top:451.2px;width:2px;height:19.19999999999999px;background:#222"></div>
<div class="a" style="left:353.76px;top:470.4px;width:1.2px;height:19.02px;background:#9a9a9c"></div>
<div class="a" style="left:353.76px;top:489.41999999999996px;width:1.2px;height:19.02px;background:#9a9a9c"></div>
<div class="a" style="left:353.76px;top:508.44px;width:1.2px;height:19.02px;background:#9a9a9c"></div>
<div class="a" style="left:353.76px;top:527.46px;width:1.2px;height:19.02px;background:#9a9a9c"></div>
<div class="a" style="left:353.76px;top:546.48px;width:1.2px;height:19.02px;background:#9a9a9c"></div>
<div class="a" style="left:353.76px;top:565.5px;width:1.2px;height:19.02px;background:#9a9a9c"></div>
<div class="a" style="left:353.76px;top:584.52px;width:1.2px;height:19.02px;background:#9a9a9c"></div>
<div class="a" style="left:353.76px;top:603.54px;width:1.2px;height:19.02px;background:#9a9a9c"></div>
<div class="a" style="left:353.76px;top:622.56px;width:1.2px;height:19.02px;background:#9a9a9c"></div>
<div class="a" style="left:353.76px;top:641.5799999999999px;width:1.2px;height:19.02px;background:#9a9a9c"></div>
<div class="a" style="left:353.76px;top:660.5999999999999px;width:1.2px;height:19.02px;background:#9a9a9c"></div>
<div class="a" style="left:353.76px;top:679.62px;width:1.2px;height:19.02px;background:#9a9a9c"></div>
<div class="a" style="left:378.92px;top:451.2px;width:1px;height:19.19999999999999px;background:#9a9a9c"></div>
<div class="a" style="left:378.92px;top:470.4px;width:1px;height:19.02px;background:#b4b4b6"></div>
<div class="a" style="left:378.92px;top:489.41999999999996px;width:1px;height:19.02px;background:#b4b4b6"></div>
<div class="a" style="left:378.92px;top:508.44px;width:1px;height:19.02px;background:#b4b4b6"></div>
<div class="a" style="left:378.92px;top:527.46px;width:1px;height:19.02px;background:#b4b4b6"></div>
<div class="a" style="left:378.92px;top:546.48px;width:1px;height:19.02px;background:#b4b4b6"></div>
<div class="a" style="left:378.92px;top:565.5px;width:1px;height:19.02px;background:#b4b4b6"></div>
<div class="a" style="left:378.92px;top:584.52px;width:1px;height:19.02px;background:#b4b4b6"></div>
<div class="a" style="left:378.92px;top:603.54px;width:1px;height:19.02px;background:#b4b4b6"></div>
<div class="a" style="left:378.92px;top:622.56px;width:1px;height:19.02px;background:#b4b4b6"></div>
<div class="a" style="left:378.92px;top:641.5799999999999px;width:1px;height:19.02px;background:#b4b4b6"></div>
<div class="a" style="left:378.92px;top:660.5999999999999px;width:1px;height:19.02px;background:#b4b4b6"></div>
<div class="a" style="left:378.92px;top:679.62px;width:1px;height:19.02px;background:#b4b4b6"></div>
<div class="a" style="left:404.08000000000004px;top:451.2px;width:1px;height:19.19999999999999px;background:#9a9a9c"></div>
<div class="a" style="left:404.08000000000004px;top:470.4px;width:1px;height:19.02px;background:#b4b4b6"></div>
<div class="a" style="left:404.08000000000004px;top:489.41999999999996px;width:1px;height:19.02px;background:#b4b4b6"></div>
<div class="a" style="left:404.08000000000004px;top:508.44px;width:1px;height:19.02px;background:#b4b4b6"></div>
<div class="a" style="left:404.08000000000004px;top:527.46px;width:1px;height:19.02px;background:#b4b4b6"></div>
<div class="a" style="left:404.08000000000004px;top:546.48px;width:1px;height:19.02px;background:#b4b4b6"></div>
<div class="a" style="left:404.08000000000004px;top:565.5px;width:1px;height:19.02px;background:#b4b4b6"></div>
<div class="a" style="left:404.08000000000004px;top:584.52px;width:1px;height:19.02px;background:#b4b4b6"></div>
<div class="a" style="left:404.08000000000004px;top:603.54px;width:1px;height:19.02px;background:#b4b4b6"></div>
<div class="a" style="left:404.08000000000004px;top:622.56px;width:1px;height:19.02px;background:#b4b4b6"></div>
<div class="a" style="left:404.08000000000004px;top:641.5799999999999px;width:1px;height:19.02px;background:#b4b4b6"></div>
<div class="a" style="left:404.08000000000004px;top:660.5999999999999px;width:1px;height:19.02px;background:#b4b4b6"></div>
<div class="a" style="left:404.08000000000004px;top:679.62px;width:1px;height:19.02px;background:#b4b4b6"></div>
<div class="a" style="left:429.24px;top:451.2px;width:1px;height:19.19999999999999px;background:#9a9a9c"></div>
<div class="a" style="left:429.24px;top:470.4px;width:1px;height:19.02px;background:#b4b4b6"></div>
<div class="a" style="left:429.24px;top:489.41999999999996px;width:1px;height:19.02px;background:#b4b4b6"></div>
<div class="a" style="left:429.24px;top:508.44px;width:1px;height:19.02px;background:#b4b4b6"></div>
<div class="a" style="left:429.24px;top:527.46px;width:1px;height:19.02px;background:#b4b4b6"></div>
<div class="a" style="left:429.24px;top:546.48px;width:1px;height:19.02px;background:#b4b4b6"></div>
<div class="a" style="left:429.24px;top:565.5px;width:1px;height:19.02px;background:#b4b4b6"></div>
<div class="a" style="left:429.24px;top:584.52px;width:1px;height:19.02px;background:#b4b4b6"></div>
<div class="a" style="left:429.24px;top:603.54px;width:1px;height:19.02px;background:#b4b4b6"></div>
<div class="a" style="left:429.24px;top:622.56px;width:1px;height:19.02px;background:#b4b4b6"></div>
<div class="a" style="left:429.24px;top:641.5799999999999px;width:1px;height:19.02px;background:#b4b4b6"></div>
<div class="a" style="left:429.24px;top:660.5999999999999px;width:1px;height:19.02px;background:#b4b4b6"></div>
<div class="a" style="left:429.24px;top:679.62px;width:1px;height:19.02px;background:#b4b4b6"></div>
<div class="a" style="left:454.4px;top:451.2px;width:1px;height:19.19999999999999px;background:#9a9a9c"></div>
<div class="a" style="left:454.4px;top:470.4px;width:1px;height:19.02px;background:#b4b4b6"></div>
<div class="a" style="left:454.4px;top:489.41999999999996px;width:1px;height:19.02px;background:#b4b4b6"></div>
<div class="a" style="left:454.4px;top:508.44px;width:1px;height:19.02px;background:#b4b4b6"></div>
<div class="a" style="left:454.4px;top:527.46px;width:1px;height:19.02px;background:#b4b4b6"></div>
<div class="a" style="left:454.4px;top:546.48px;width:1px;height:19.02px;background:#b4b4b6"></div>
<div class="a" style="left:454.4px;top:565.5px;width:1px;height:19.02px;background:#b4b4b6"></div>
<div class="a" style="left:454.4px;top:584.52px;width:1px;height:19.02px;background:#b4b4b6"></div>
<div class="a" style="left:454.4px;top:603.54px;width:1px;height:19.02px;background:#b4b4b6"></div>
<div class="a" style="left:454.4px;top:622.56px;width:1px;height:19.02px;background:#b4b4b6"></div>
<div class="a" style="left:454.4px;top:641.5799999999999px;width:1px;height:19.02px;background:#b4b4b6"></div>
<div class="a" style="left:454.4px;top:660.5999999999999px;width:1px;height:19.02px;background:#b4b4b6"></div>
<div class="a" style="left:454.4px;top:679.62px;width:1px;height:19.02px;background:#b4b4b6"></div>
<div class="a" style="left:479.56px;top:451.2px;width:1px;height:19.19999999999999px;background:#9a9a9c"></div>
<div class="a" style="left:479.56px;top:470.4px;width:1px;height:19.02px;background:#b4b4b6"></div>
<div class="a" style="left:479.56px;top:489.41999999999996px;width:1px;height:19.02px;background:#b4b4b6"></div>
<div class="a" style="left:479.56px;top:508.44px;width:1px;height:19.02px;background:#b4b4b6"></div>
<div class="a" style="left:479.56px;top:527.46px;width:1px;height:19.02px;background:#b4b4b6"></div>
<div class="a" style="left:479.56px;top:546.48px;width:1px;height:19.02px;background:#b4b4b6"></div>
<div class="a" style="left:479.56px;top:565.5px;width:1px;height:19.02px;background:#b4b4b6"></div>
<div class="a" style="left:479.56px;top:584.52px;width:1px;height:19.02px;background:#b4b4b6"></div>
<div class="a" style="left:479.56px;top:603.54px;width:1px;height:19.02px;background:#b4b4b6"></div>
<div class="a" style="left:479.56px;top:622.56px;width:1px;height:19.02px;background:#b4b4b6"></div>
<div class="a" style="left:479.56px;top:641.5799999999999px;width:1px;height:19.02px;background:#b4b4b6"></div>
<div class="a" style="left:479.56px;top:660.5999999999999px;width:1px;height:19.02px;background:#b4b4b6"></div>
<div class="a" style="left:479.56px;top:679.62px;width:1px;height:19.02px;background:#b4b4b6"></div>
<div class="a" style="left:504.72px;top:451.2px;width:1px;height:19.19999999999999px;background:#9a9a9c"></div>
<div class="a" style="left:504.72px;top:470.4px;width:1px;height:19.02px;background:#b4b4b6"></div>
<div class="a" style="left:504.72px;top:489.41999999999996px;width:1px;height:19.02px;background:#b4b4b6"></div>
<div class="a" style="left:504.72px;top:508.44px;width:1px;height:19.02px;background:#b4b4b6"></div>
<div class="a" style="left:504.72px;top:527.46px;width:1px;height:19.02px;background:#b4b4b6"></div>
<div class="a" style="left:504.72px;top:546.48px;width:1px;height:19.02px;background:#b4b4b6"></div>
<div class="a" style="left:504.72px;top:565.5px;width:1px;height:19.02px;background:#b4b4b6"></div>
<div class="a" style="left:504.72px;top:584.52px;width:1px;height:19.02px;background:#b4b4b6"></div>
<div class="a" style="left:504.72px;top:603.54px;width:1px;height:19.02px;background:#b4b4b6"></div>
<div class="a" style="left:504.72px;top:622.56px;width:1px;height:19.02px;background:#b4b4b6"></div>
<div class="a" style="left:504.72px;top:641.5799999999999px;width:1px;height:19.02px;background:#b4b4b6"></div>
<div class="a" style="left:504.72px;top:660.5999999999999px;width:1px;height:19.02px;background:#b4b4b6"></div>
<div class="a" style="left:504.72px;top:679.62px;width:1px;height:19.02px;background:#b4b4b6"></div>
<div class="a" style="left:529.88px;top:451.2px;width:1px;height:19.19999999999999px;background:#9a9a9c"></div>
<div class="a" style="left:529.88px;top:470.4px;width:1px;height:19.02px;background:#b4b4b6"></div>
<div class="a" style="left:529.88px;top:489.41999999999996px;width:1px;height:19.02px;background:#b4b4b6"></div>
<div class="a" style="left:529.88px;top:508.44px;width:1px;height:19.02px;background:#b4b4b6"></div>
<div class="a" style="left:529.88px;top:527.46px;width:1px;height:19.02px;background:#b4b4b6"></div>
<div class="a" style="left:529.88px;top:546.48px;width:1px;height:19.02px;background:#b4b4b6"></div>
<div class="a" style="left:529.88px;top:565.5px;width:1px;height:19.02px;background:#b4b4b6"></div>
<div class="a" style="left:529.88px;top:584.52px;width:1px;height:19.02px;background:#b4b4b6"></div>
<div class="a" style="left:529.88px;top:603.54px;width:1px;height:19.02px;background:#b4b4b6"></div>
<div class="a" style="left:529.88px;top:622.56px;width:1px;height:19.02px;background:#b4b4b6"></div>
<div class="a" style="left:529.88px;top:641.5799999999999px;width:1px;height:19.02px;background:#b4b4b6"></div>
<div class="a" style="left:529.88px;top:660.5999999999999px;width:1px;height:19.02px;background:#b4b4b6"></div>
<div class="a" style="left:529.88px;top:679.62px;width:1px;height:19.02px;background:#b4b4b6"></div>
<div class="a" style="left:555.04px;top:451.2px;width:1px;height:19.19999999999999px;background:#9a9a9c"></div>
<div class="a" style="left:555.04px;top:470.4px;width:1px;height:19.02px;background:#b4b4b6"></div>
<div class="a" style="left:555.04px;top:489.41999999999996px;width:1px;height:19.02px;background:#b4b4b6"></div>
<div class="a" style="left:555.04px;top:508.44px;width:1px;height:19.02px;background:#b4b4b6"></div>
<div class="a" style="left:555.04px;top:527.46px;width:1px;height:19.02px;background:#b4b4b6"></div>
<div class="a" style="left:555.04px;top:546.48px;width:1px;height:19.02px;background:#b4b4b6"></div>
<div class="a" style="left:555.04px;top:565.5px;width:1px;height:19.02px;background:#b4b4b6"></div>
<div class="a" style="left:555.04px;top:584.52px;width:1px;height:19.02px;background:#b4b4b6"></div>
<div class="a" style="left:555.04px;top:603.54px;width:1px;height:19.02px;background:#b4b4b6"></div>
<div class="a" style="left:555.04px;top:622.56px;width:1px;height:19.02px;background:#b4b4b6"></div>
<div class="a" style="left:555.04px;top:641.5799999999999px;width:1px;height:19.02px;background:#b4b4b6"></div>
<div class="a" style="left:555.04px;top:660.5999999999999px;width:1px;height:19.02px;background:#b4b4b6"></div>
<div class="a" style="left:555.04px;top:679.62px;width:1px;height:19.02px;background:#b4b4b6"></div>
<div class="a" style="left:580.2px;top:451.2px;width:1px;height:19.19999999999999px;background:#9a9a9c"></div>
<div class="a" style="left:580.2px;top:470.4px;width:1px;height:19.02px;background:#b4b4b6"></div>
<div class="a" style="left:580.2px;top:489.41999999999996px;width:1px;height:19.02px;background:#b4b4b6"></div>
<div class="a" style="left:580.2px;top:508.44px;width:1px;height:19.02px;background:#b4b4b6"></div>
<div class="a" style="left:580.2px;top:527.46px;width:1px;height:19.02px;background:#b4b4b6"></div>
<div class="a" style="left:580.2px;top:546.48px;width:1px;height:19.02px;background:#b4b4b6"></div>
<div class="a" style="left:580.2px;top:565.5px;width:1px;height:19.02px;background:#b4b4b6"></div>
<div class="a" style="left:580.2px;top:584.52px;width:1px;height:19.02px;background:#b4b4b6"></div>
<div class="a" style="left:580.2px;top:603.54px;width:1px;height:19.02px;background:#b4b4b6"></div>
<div class="a" style="left:580.2px;top:622.56px;width:1px;height:19.02px;background:#b4b4b6"></div>
<div class="a" style="left:580.2px;top:641.5799999999999px;width:1px;height:19.02px;background:#b4b4b6"></div>
<div class="a" style="left:580.2px;top:660.5999999999999px;width:1px;height:19.02px;background:#b4b4b6"></div>
<div class="a" style="left:580.2px;top:679.62px;width:1px;height:19.02px;background:#b4b4b6"></div>
<div class="a" style="left:605.36px;top:451.2px;width:1px;height:19.19999999999999px;background:#9a9a9c"></div>
<div class="a" style="left:605.36px;top:470.4px;width:1px;height:19.02px;background:#b4b4b6"></div>
<div class="a" style="left:605.36px;top:489.41999999999996px;width:1px;height:19.02px;background:#b4b4b6"></div>
<div class="a" style="left:605.36px;top:508.44px;width:1px;height:19.02px;background:#b4b4b6"></div>
<div class="a" style="left:605.36px;top:527.46px;width:1px;height:19.02px;background:#b4b4b6"></div>
<div class="a" style="left:605.36px;top:546.48px;width:1px;height:19.02px;background:#b4b4b6"></div>
<div class="a" style="left:605.36px;top:565.5px;width:1px;height:19.02px;background:#b4b4b6"></div>
<div class="a" style="left:605.36px;top:584.52px;width:1px;height:19.02px;background:#b4b4b6"></div>
<div class="a" style="left:605.36px;top:603.54px;width:1px;height:19.02px;background:#b4b4b6"></div>
<div class="a" style="left:605.36px;top:622.56px;width:1px;height:19.02px;background:#b4b4b6"></div>
<div class="a" style="left:605.36px;top:641.5799999999999px;width:1px;height:19.02px;background:#b4b4b6"></div>
<div class="a" style="left:605.36px;top:660.5999999999999px;width:1px;height:19.02px;background:#b4b4b6"></div>
<div class="a" style="left:605.36px;top:679.62px;width:1px;height:19.02px;background:#b4b4b6"></div>
<div class="a" style="left:630.02px;top:451.2px;width:2px;height:19.19999999999999px;background:#222"></div>
<div class="a" style="left:630.52px;top:470.4px;width:1.2px;height:19.02px;background:#9a9a9c"></div>
<div class="a" style="left:630.52px;top:489.41999999999996px;width:1.2px;height:19.02px;background:#9a9a9c"></div>
<div class="a" style="left:630.52px;top:508.44px;width:1.2px;height:19.02px;background:#9a9a9c"></div>
<div class="a" style="left:630.52px;top:527.46px;width:1.2px;height:19.02px;background:#9a9a9c"></div>
<div class="a" style="left:630.52px;top:546.48px;width:1.2px;height:19.02px;background:#9a9a9c"></div>
<div class="a" style="left:630.52px;top:565.5px;width:1.2px;height:19.02px;background:#9a9a9c"></div>
<div class="a" style="left:630.52px;top:584.52px;width:1.2px;height:19.02px;background:#9a9a9c"></div>
<div class="a" style="left:630.52px;top:603.54px;width:1.2px;height:19.02px;background:#9a9a9c"></div>
<div class="a" style="left:630.52px;top:622.56px;width:1.2px;height:19.02px;background:#9a9a9c"></div>
<div class="a" style="left:630.52px;top:641.5799999999999px;width:1.2px;height:19.02px;background:#9a9a9c"></div>
<div class="a" style="left:630.52px;top:660.5999999999999px;width:1.2px;height:19.02px;background:#9a9a9c"></div>
<div class="a" style="left:630.52px;top:679.62px;width:1.2px;height:19.02px;background:#9a9a9c"></div>
<div class="a" style="left:655.6800000000001px;top:451.2px;width:1px;height:19.19999999999999px;background:#9a9a9c"></div>
<div class="a" style="left:655.6800000000001px;top:470.4px;width:1px;height:19.02px;background:#b4b4b6"></div>
<div class="a" style="left:655.6800000000001px;top:489.41999999999996px;width:1px;height:19.02px;background:#b4b4b6"></div>
<div class="a" style="left:655.6800000000001px;top:508.44px;width:1px;height:19.02px;background:#b4b4b6"></div>
<div class="a" style="left:655.6800000000001px;top:527.46px;width:1px;height:19.02px;background:#b4b4b6"></div>
<div class="a" style="left:655.6800000000001px;top:546.48px;width:1px;height:19.02px;background:#b4b4b6"></div>
<div class="a" style="left:655.6800000000001px;top:565.5px;width:1px;height:19.02px;background:#b4b4b6"></div>
<div class="a" style="left:655.6800000000001px;top:584.52px;width:1px;height:19.02px;background:#b4b4b6"></div>
<div class="a" style="left:655.6800000000001px;top:603.54px;width:1px;height:19.02px;background:#b4b4b6"></div>
<div class="a" style="left:655.6800000000001px;top:622.56px;width:1px;height:19.02px;background:#b4b4b6"></div>
<div class="a" style="left:655.6800000000001px;top:641.5799999999999px;width:1px;height:19.02px;background:#b4b4b6"></div>
<div class="a" style="left:655.6800000000001px;top:660.5999999999999px;width:1px;height:19.02px;background:#b4b4b6"></div>
<div class="a" style="left:655.6800000000001px;top:679.62px;width:1px;height:19.02px;background:#b4b4b6"></div>
<div class="a" style="left:680.84px;top:451.2px;width:1px;height:19.19999999999999px;background:#9a9a9c"></div>
<div class="a" style="left:680.84px;top:470.4px;width:1px;height:19.02px;background:#b4b4b6"></div>
<div class="a" style="left:680.84px;top:489.41999999999996px;width:1px;height:19.02px;background:#b4b4b6"></div>
<div class="a" style="left:680.84px;top:508.44px;width:1px;height:19.02px;background:#b4b4b6"></div>
<div class="a" style="left:680.84px;top:527.46px;width:1px;height:19.02px;background:#b4b4b6"></div>
<div class="a" style="left:680.84px;top:546.48px;width:1px;height:19.02px;background:#b4b4b6"></div>
<div class="a" style="left:680.84px;top:565.5px;width:1px;height:19.02px;background:#b4b4b6"></div>
<div class="a" style="left:680.84px;top:584.52px;width:1px;height:19.02px;background:#b4b4b6"></div>
<div class="a" style="left:680.84px;top:603.54px;width:1px;height:19.02px;background:#b4b4b6"></div>
<div class="a" style="left:680.84px;top:622.56px;width:1px;height:19.02px;background:#b4b4b6"></div>
<div class="a" style="left:680.84px;top:641.5799999999999px;width:1px;height:19.02px;background:#b4b4b6"></div>
<div class="a" style="left:680.84px;top:660.5999999999999px;width:1px;height:19.02px;background:#b4b4b6"></div>
<div class="a" style="left:680.84px;top:679.62px;width:1px;height:19.02px;background:#b4b4b6"></div>
<div class="a" style="left:706.0px;top:451.2px;width:1px;height:19.19999999999999px;background:#9a9a9c"></div>
<div class="a" style="left:706.0px;top:470.4px;width:1px;height:19.02px;background:#b4b4b6"></div>
<div class="a" style="left:706.0px;top:489.41999999999996px;width:1px;height:19.02px;background:#b4b4b6"></div>
<div class="a" style="left:706.0px;top:508.44px;width:1px;height:19.02px;background:#b4b4b6"></div>
<div class="a" style="left:706.0px;top:527.46px;width:1px;height:19.02px;background:#b4b4b6"></div>
<div class="a" style="left:706.0px;top:546.48px;width:1px;height:19.02px;background:#b4b4b6"></div>
<div class="a" style="left:706.0px;top:565.5px;width:1px;height:19.02px;background:#b4b4b6"></div>
<div class="a" style="left:706.0px;top:584.52px;width:1px;height:19.02px;background:#b4b4b6"></div>
<div class="a" style="left:706.0px;top:603.54px;width:1px;height:19.02px;background:#b4b4b6"></div>
<div class="a" style="left:706.0px;top:622.56px;width:1px;height:19.02px;background:#b4b4b6"></div>
<div class="a" style="left:706.0px;top:641.5799999999999px;width:1px;height:19.02px;background:#b4b4b6"></div>
<div class="a" style="left:706.0px;top:660.5999999999999px;width:1px;height:19.02px;background:#b4b4b6"></div>
<div class="a" style="left:706.0px;top:679.62px;width:1px;height:19.02px;background:#b4b4b6"></div>
<div class="a" style="left:731.1600000000001px;top:451.2px;width:1px;height:19.19999999999999px;background:#9a9a9c"></div>
<div class="a" style="left:731.1600000000001px;top:470.4px;width:1px;height:19.02px;background:#b4b4b6"></div>
<div class="a" style="left:731.1600000000001px;top:489.41999999999996px;width:1px;height:19.02px;background:#b4b4b6"></div>
<div class="a" style="left:731.1600000000001px;top:508.44px;width:1px;height:19.02px;background:#b4b4b6"></div>
<div class="a" style="left:731.1600000000001px;top:527.46px;width:1px;height:19.02px;background:#b4b4b6"></div>
<div class="a" style="left:731.1600000000001px;top:546.48px;width:1px;height:19.02px;background:#b4b4b6"></div>
<div class="a" style="left:731.1600000000001px;top:565.5px;width:1px;height:19.02px;background:#b4b4b6"></div>
<div class="a" style="left:731.1600000000001px;top:584.52px;width:1px;height:19.02px;background:#b4b4b6"></div>
<div class="a" style="left:731.1600000000001px;top:603.54px;width:1px;height:19.02px;background:#b4b4b6"></div>
<div class="a" style="left:731.1600000000001px;top:622.56px;width:1px;height:19.02px;background:#b4b4b6"></div>
<div class="a" style="left:731.1600000000001px;top:641.5799999999999px;width:1px;height:19.02px;background:#b4b4b6"></div>
<div class="a" style="left:731.1600000000001px;top:660.5999999999999px;width:1px;height:19.02px;background:#b4b4b6"></div>
<div class="a" style="left:731.1600000000001px;top:679.62px;width:1px;height:19.02px;background:#b4b4b6"></div>
<div class="a" style="left:756.3199999999999px;top:451.2px;width:1px;height:19.19999999999999px;background:#9a9a9c"></div>
<div class="a" style="left:756.3199999999999px;top:470.4px;width:1px;height:19.02px;background:#b4b4b6"></div>
<div class="a" style="left:756.3199999999999px;top:489.41999999999996px;width:1px;height:19.02px;background:#b4b4b6"></div>
<div class="a" style="left:756.3199999999999px;top:508.44px;width:1px;height:19.02px;background:#b4b4b6"></div>
<div class="a" style="left:756.3199999999999px;top:527.46px;width:1px;height:19.02px;background:#b4b4b6"></div>
<div class="a" style="left:756.3199999999999px;top:546.48px;width:1px;height:19.02px;background:#b4b4b6"></div>
<div class="a" style="left:756.3199999999999px;top:565.5px;width:1px;height:19.02px;background:#b4b4b6"></div>
<div class="a" style="left:756.3199999999999px;top:584.52px;width:1px;height:19.02px;background:#b4b4b6"></div>
<div class="a" style="left:756.3199999999999px;top:603.54px;width:1px;height:19.02px;background:#b4b4b6"></div>
<div class="a" style="left:756.3199999999999px;top:622.56px;width:1px;height:19.02px;background:#b4b4b6"></div>
<div class="a" style="left:756.3199999999999px;top:641.5799999999999px;width:1px;height:19.02px;background:#b4b4b6"></div>
<div class="a" style="left:756.3199999999999px;top:660.5999999999999px;width:1px;height:19.02px;background:#b4b4b6"></div>
<div class="a" style="left:756.3199999999999px;top:679.62px;width:1px;height:19.02px;background:#b4b4b6"></div>
<div class="a" style="left:781.48px;top:451.2px;width:1px;height:19.19999999999999px;background:#9a9a9c"></div>
<div class="a" style="left:781.48px;top:470.4px;width:1px;height:19.02px;background:#b4b4b6"></div>
<div class="a" style="left:781.48px;top:489.41999999999996px;width:1px;height:19.02px;background:#b4b4b6"></div>
<div class="a" style="left:781.48px;top:508.44px;width:1px;height:19.02px;background:#b4b4b6"></div>
<div class="a" style="left:781.48px;top:527.46px;width:1px;height:19.02px;background:#b4b4b6"></div>
<div class="a" style="left:781.48px;top:546.48px;width:1px;height:19.02px;background:#b4b4b6"></div>
<div class="a" style="left:781.48px;top:565.5px;width:1px;height:19.02px;background:#b4b4b6"></div>
<div class="a" style="left:781.48px;top:584.52px;width:1px;height:19.02px;background:#b4b4b6"></div>
<div class="a" style="left:781.48px;top:603.54px;width:1px;height:19.02px;background:#b4b4b6"></div>
<div class="a" style="left:781.48px;top:622.56px;width:1px;height:19.02px;background:#b4b4b6"></div>
<div class="a" style="left:781.48px;top:641.5799999999999px;width:1px;height:19.02px;background:#b4b4b6"></div>
<div class="a" style="left:781.48px;top:660.5999999999999px;width:1px;height:19.02px;background:#b4b4b6"></div>
<div class="a" style="left:781.48px;top:679.62px;width:1px;height:19.02px;background:#b4b4b6"></div>
<div class="a" style="left:806.6400000000001px;top:451.2px;width:1px;height:19.19999999999999px;background:#9a9a9c"></div>
<div class="a" style="left:806.6400000000001px;top:470.4px;width:1px;height:19.02px;background:#b4b4b6"></div>
<div class="a" style="left:806.6400000000001px;top:489.41999999999996px;width:1px;height:19.02px;background:#b4b4b6"></div>
<div class="a" style="left:806.6400000000001px;top:508.44px;width:1px;height:19.02px;background:#b4b4b6"></div>
<div class="a" style="left:806.6400000000001px;top:527.46px;width:1px;height:19.02px;background:#b4b4b6"></div>
<div class="a" style="left:806.6400000000001px;top:546.48px;width:1px;height:19.02px;background:#b4b4b6"></div>
<div class="a" style="left:806.6400000000001px;top:565.5px;width:1px;height:19.02px;background:#b4b4b6"></div>
<div class="a" style="left:806.6400000000001px;top:584.52px;width:1px;height:19.02px;background:#b4b4b6"></div>
<div class="a" style="left:806.6400000000001px;top:603.54px;width:1px;height:19.02px;background:#b4b4b6"></div>
<div class="a" style="left:806.6400000000001px;top:622.56px;width:1px;height:19.02px;background:#b4b4b6"></div>
<div class="a" style="left:806.6400000000001px;top:641.5799999999999px;width:1px;height:19.02px;background:#b4b4b6"></div>
<div class="a" style="left:806.6400000000001px;top:660.5999999999999px;width:1px;height:19.02px;background:#b4b4b6"></div>
<div class="a" style="left:806.6400000000001px;top:679.62px;width:1px;height:19.02px;background:#b4b4b6"></div>
<div class="a" style="left:831.8px;top:451.2px;width:1px;height:19.19999999999999px;background:#9a9a9c"></div>
<div class="a" style="left:831.8px;top:470.4px;width:1px;height:19.02px;background:#b4b4b6"></div>
<div class="a" style="left:831.8px;top:489.41999999999996px;width:1px;height:19.02px;background:#b4b4b6"></div>
<div class="a" style="left:831.8px;top:508.44px;width:1px;height:19.02px;background:#b4b4b6"></div>
<div class="a" style="left:831.8px;top:527.46px;width:1px;height:19.02px;background:#b4b4b6"></div>
<div class="a" style="left:831.8px;top:546.48px;width:1px;height:19.02px;background:#b4b4b6"></div>
<div class="a" style="left:831.8px;top:565.5px;width:1px;height:19.02px;background:#b4b4b6"></div>
<div class="a" style="left:831.8px;top:584.52px;width:1px;height:19.02px;background:#b4b4b6"></div>
<div class="a" style="left:831.8px;top:603.54px;width:1px;height:19.02px;background:#b4b4b6"></div>
<div class="a" style="left:831.8px;top:622.56px;width:1px;height:19.02px;background:#b4b4b6"></div>
<div class="a" style="left:831.8px;top:641.5799999999999px;width:1px;height:19.02px;background:#b4b4b6"></div>
<div class="a" style="left:831.8px;top:660.5999999999999px;width:1px;height:19.02px;background:#b4b4b6"></div>
<div class="a" style="left:831.8px;top:679.62px;width:1px;height:19.02px;background:#b4b4b6"></div>
<div class="a" style="left:856.96px;top:451.2px;width:1px;height:19.19999999999999px;background:#9a9a9c"></div>
<div class="a" style="left:856.96px;top:470.4px;width:1px;height:19.02px;background:#b4b4b6"></div>
<div class="a" style="left:856.96px;top:489.41999999999996px;width:1px;height:19.02px;background:#b4b4b6"></div>
<div class="a" style="left:856.96px;top:508.44px;width:1px;height:19.02px;background:#b4b4b6"></div>
<div class="a" style="left:856.96px;top:527.46px;width:1px;height:19.02px;background:#b4b4b6"></div>
<div class="a" style="left:856.96px;top:546.48px;width:1px;height:19.02px;background:#b4b4b6"></div>
<div class="a" style="left:856.96px;top:565.5px;width:1px;height:19.02px;background:#b4b4b6"></div>
<div class="a" style="left:856.96px;top:584.52px;width:1px;height:19.02px;background:#b4b4b6"></div>
<div class="a" style="left:856.96px;top:603.54px;width:1px;height:19.02px;background:#b4b4b6"></div>
<div class="a" style="left:856.96px;top:622.56px;width:1px;height:19.02px;background:#b4b4b6"></div>
<div class="a" style="left:856.96px;top:641.5799999999999px;width:1px;height:19.02px;background:#b4b4b6"></div>
<div class="a" style="left:856.96px;top:660.5999999999999px;width:1px;height:19.02px;background:#b4b4b6"></div>
<div class="a" style="left:856.96px;top:679.62px;width:1px;height:19.02px;background:#b4b4b6"></div>
<div class="a" style="left:881.6200000000001px;top:451.2px;width:2px;height:19.19999999999999px;background:#222"></div>
<div class="a" style="left:882.1200000000001px;top:470.4px;width:1.2px;height:19.02px;background:#9a9a9c"></div>
<div class="a" style="left:882.1200000000001px;top:489.41999999999996px;width:1.2px;height:19.02px;background:#9a9a9c"></div>
<div class="a" style="left:882.1200000000001px;top:508.44px;width:1.2px;height:19.02px;background:#9a9a9c"></div>
<div class="a" style="left:882.1200000000001px;top:527.46px;width:1.2px;height:19.02px;background:#9a9a9c"></div>
<div class="a" style="left:882.1200000000001px;top:546.48px;width:1.2px;height:19.02px;background:#9a9a9c"></div>
<div class="a" style="left:882.1200000000001px;top:565.5px;width:1.2px;height:19.02px;background:#9a9a9c"></div>
<div class="a" style="left:882.1200000000001px;top:584.52px;width:1.2px;height:19.02px;background:#9a9a9c"></div>
<div class="a" style="left:882.1200000000001px;top:603.54px;width:1.2px;height:19.02px;background:#9a9a9c"></div>
<div class="a" style="left:882.1200000000001px;top:622.56px;width:1.2px;height:19.02px;background:#9a9a9c"></div>
<div class="a" style="left:882.1200000000001px;top:641.5799999999999px;width:1.2px;height:19.02px;background:#9a9a9c"></div>
<div class="a" style="left:882.1200000000001px;top:660.5999999999999px;width:1.2px;height:19.02px;background:#9a9a9c"></div>
<div class="a" style="left:882.1200000000001px;top:679.62px;width:1.2px;height:19.02px;background:#9a9a9c"></div>
<div class="a" style="left:907.28px;top:451.2px;width:1px;height:19.19999999999999px;background:#9a9a9c"></div>
<div class="a" style="left:907.28px;top:470.4px;width:1px;height:19.02px;background:#b4b4b6"></div>
<div class="a" style="left:907.28px;top:489.41999999999996px;width:1px;height:19.02px;background:#b4b4b6"></div>
<div class="a" style="left:907.28px;top:508.44px;width:1px;height:19.02px;background:#b4b4b6"></div>
<div class="a" style="left:907.28px;top:527.46px;width:1px;height:19.02px;background:#b4b4b6"></div>
<div class="a" style="left:907.28px;top:546.48px;width:1px;height:19.02px;background:#b4b4b6"></div>
<div class="a" style="left:907.28px;top:565.5px;width:1px;height:19.02px;background:#b4b4b6"></div>
<div class="a" style="left:907.28px;top:584.52px;width:1px;height:19.02px;background:#b4b4b6"></div>
<div class="a" style="left:907.28px;top:603.54px;width:1px;height:19.02px;background:#b4b4b6"></div>
<div class="a" style="left:907.28px;top:622.56px;width:1px;height:19.02px;background:#b4b4b6"></div>
<div class="a" style="left:907.28px;top:641.5799999999999px;width:1px;height:19.02px;background:#b4b4b6"></div>
<div class="a" style="left:907.28px;top:660.5999999999999px;width:1px;height:19.02px;background:#b4b4b6"></div>
<div class="a" style="left:907.28px;top:679.62px;width:1px;height:19.02px;background:#b4b4b6"></div>
<div class="a" style="left:932.44px;top:451.2px;width:1px;height:19.19999999999999px;background:#9a9a9c"></div>
<div class="a" style="left:932.44px;top:470.4px;width:1px;height:19.02px;background:#b4b4b6"></div>
<div class="a" style="left:932.44px;top:508.44px;width:1px;height:19.02px;background:#b4b4b6"></div>
<div class="a" style="left:932.44px;top:527.46px;width:1px;height:19.02px;background:#b4b4b6"></div>
<div class="a" style="left:932.44px;top:546.48px;width:1px;height:19.02px;background:#b4b4b6"></div>
<div class="a" style="left:932.44px;top:565.5px;width:1px;height:19.02px;background:#b4b4b6"></div>
<div class="a" style="left:932.44px;top:584.52px;width:1px;height:19.02px;background:#b4b4b6"></div>
<div class="a" style="left:932.44px;top:603.54px;width:1px;height:19.02px;background:#b4b4b6"></div>
<div class="a" style="left:932.44px;top:622.56px;width:1px;height:19.02px;background:#b4b4b6"></div>
<div class="a" style="left:932.44px;top:641.5799999999999px;width:1px;height:19.02px;background:#b4b4b6"></div>
<div class="a" style="left:932.44px;top:660.5999999999999px;width:1px;height:19.02px;background:#b4b4b6"></div>
<div class="a" style="left:932.44px;top:679.62px;width:1px;height:19.02px;background:#b4b4b6"></div>
<div class="a" style="left:957.5999999999999px;top:451.2px;width:1px;height:19.19999999999999px;background:#9a9a9c"></div>
<div class="a" style="left:957.5999999999999px;top:470.4px;width:1px;height:19.02px;background:#b4b4b6"></div>
<div class="a" style="left:957.5999999999999px;top:508.44px;width:1px;height:19.02px;background:#b4b4b6"></div>
<div class="a" style="left:957.5999999999999px;top:527.46px;width:1px;height:19.02px;background:#b4b4b6"></div>
<div class="a" style="left:957.5999999999999px;top:546.48px;width:1px;height:19.02px;background:#b4b4b6"></div>
<div class="a" style="left:957.5999999999999px;top:565.5px;width:1px;height:19.02px;background:#b4b4b6"></div>
<div class="a" style="left:957.5999999999999px;top:584.52px;width:1px;height:19.02px;background:#b4b4b6"></div>
<div class="a" style="left:957.5999999999999px;top:603.54px;width:1px;height:19.02px;background:#b4b4b6"></div>
<div class="a" style="left:957.5999999999999px;top:622.56px;width:1px;height:19.02px;background:#b4b4b6"></div>
<div class="a" style="left:957.5999999999999px;top:641.5799999999999px;width:1px;height:19.02px;background:#b4b4b6"></div>
<div class="a" style="left:957.5999999999999px;top:660.5999999999999px;width:1px;height:19.02px;background:#b4b4b6"></div>
<div class="a" style="left:957.5999999999999px;top:679.62px;width:1px;height:19.02px;background:#b4b4b6"></div>
<div class="a" style="left:982.76px;top:451.2px;width:1px;height:19.19999999999999px;background:#9a9a9c"></div>
<div class="a" style="left:982.76px;top:470.4px;width:1px;height:19.02px;background:#b4b4b6"></div>
<div class="a" style="left:982.76px;top:508.44px;width:1px;height:19.02px;background:#b4b4b6"></div>
<div class="a" style="left:982.76px;top:546.48px;width:1px;height:19.02px;background:#b4b4b6"></div>
<div class="a" style="left:982.76px;top:584.52px;width:1px;height:19.02px;background:#b4b4b6"></div>
<div class="a" style="left:982.76px;top:603.54px;width:1px;height:19.02px;background:#b4b4b6"></div>
<div class="a" style="left:982.76px;top:641.5799999999999px;width:1px;height:19.02px;background:#b4b4b6"></div>
<div class="a" style="left:982.76px;top:679.62px;width:1px;height:19.02px;background:#b4b4b6"></div>
<div class="a" style="left:1018px;top:47px;width:5px;height:580px;background:#d1d1d3"></div>
<div class="a" style="left:977.5px;top:656px;width:39px;height:39px;border-radius:50%;background:#587265"></div>
<svg style="left:977.5px;top:656px" width="39" height="39" viewBox="0 0 39 39">
<path d="M5.2 8.6 Q8 12.5 12 12.8 Q19.5 11.2 27 12.8 Q31 12.5 33.8 8.6 Q33 13 31.5 15.5 L31.5 24 Q26 30.5 19.5 31 Q13 30.5 7.5 24 L7.5 15.5 Q6 13 5.2 8.6 Z" fill="#6cc8b0"/>
<path d="M6 18 Q6 17 7.5 17 H9.5 V25 H8 Q6.5 24 6 22.5 Z M33 18 Q33 17 31.5 17 H29.5 V25 H31 Q32.5 24 33 22.5 Z" fill="#7f8a87"/>
<path d="M12.5 24 L26.5 24 Q24 29.5 19.5 30.5 Q15 29.5 12.5 24 Z" fill="#8fe3c8"/>
<circle cx="13.6" cy="19.6" r="4.7" fill="#fff" stroke="#8f9593" stroke-width="1.3"/>
<circle cx="25.4" cy="19.6" r="4.7" fill="#fff" stroke="#8f9593" stroke-width="1.3"/>
<path d="M11 19.6 Q13.2 16.8 16 18.8 M22.8 19.6 Q25 16.8 27.8 18.8" fill="none" stroke="#1a1a1a" stroke-width="1.5"/>
<path d="M12.6 19.8 Q12.6 21.8 14.6 22.2 M24.4 19.8 Q24.4 21.8 26.4 22.2" fill="none" stroke="#1a1a1a" stroke-width="1.3"/>
</svg>
<div id="edgeL" class="a"></div>
<div id="edgeR" class="a"></div>
</body></html>
